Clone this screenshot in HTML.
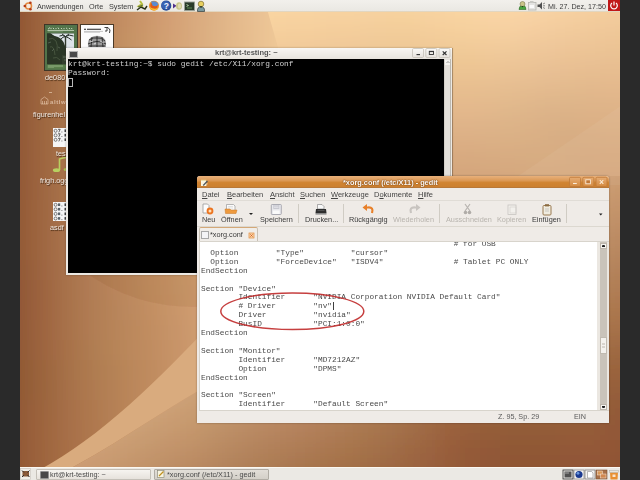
<!DOCTYPE html>
<html><head><meta charset="utf-8">
<style>
html,body{margin:0;padding:0}
body{width:640px;height:480px;position:relative;overflow:hidden;background:#2a2a2a;font-family:"Liberation Sans",sans-serif}
.a{position:absolute}
.t{position:absolute;white-space:pre;line-height:10px;will-change:transform}
.ui{font-size:7.3px;color:#3c3c3c}
.mono{font-family:"Liberation Mono",monospace}
.dl{font-size:7.3px;color:#f2ebe4;text-shadow:0.6px 0.6px 0.8px rgba(40,20,0,.8)}
</style></head><body><div id="wrap" style="position:absolute;left:0;top:0;width:640px;height:480px;filter:blur(0.25px)">
<svg width="640" height="480" style="position:absolute;left:0;top:0"><defs><filter id="wb" x="-5%" y="-5%" width="110%" height="110%"><feGaussianBlur stdDeviation="9"/></filter><filter id="sb"><feGaussianBlur stdDeviation="0.6"/></filter><clipPath id="cL2"><path d="M261.6 -10 L277.9 47 L300 200 L620 176 L660 176 L660 -10 Z"/></clipPath><clipPath id="cR"><path d="M56 476 C108.4 449.7,155.9 414.9,205 387 L609 176 L660 176 L660 500 L0 500 L0 476 Z"/></clipPath></defs><g filter="url(#wb)"><rect x="-20" y="-40" width="20" height="20" fill="#834325"/><rect x="0" y="-40" width="20" height="20" fill="#8d4e2f"/><rect x="20" y="-40" width="20" height="20" fill="#975939"/><rect x="40" y="-40" width="20" height="20" fill="#a16443"/><rect x="60" y="-40" width="20" height="20" fill="#ab6f4c"/><rect x="80" y="-40" width="20" height="20" fill="#b47955"/><rect x="100" y="-40" width="20" height="20" fill="#bc825d"/><rect x="120" y="-40" width="20" height="20" fill="#c48b65"/><rect x="140" y="-40" width="20" height="20" fill="#cb936d"/><rect x="160" y="-40" width="20" height="20" fill="#d19c75"/><rect x="180" y="-40" width="20" height="20" fill="#d7a57d"/><rect x="200" y="-40" width="20" height="20" fill="#ddad85"/><rect x="220" y="-40" width="20" height="20" fill="#e2b58c"/><rect x="240" y="-40" width="20" height="20" fill="#e8bd92"/><rect x="260" y="-40" width="20" height="20" fill="#edc599"/><rect x="280" y="-40" width="20" height="20" fill="#f3cc9f"/><rect x="300" y="-40" width="20" height="20" fill="#f9d4a5"/><rect x="320" y="-40" width="20" height="20" fill="#fedbac"/><rect x="340" y="-40" width="20" height="20" fill="#ffe3b2"/><rect x="360" y="-40" width="20" height="20" fill="#ffeab9"/><rect x="380" y="-40" width="20" height="20" fill="#fff2c0"/><rect x="400" y="-40" width="20" height="20" fill="#fff9c6"/><rect x="420" y="-40" width="20" height="20" fill="#ffffcd"/><rect x="440" y="-40" width="20" height="20" fill="#ffffd4"/><rect x="460" y="-40" width="20" height="20" fill="#ffffdb"/><rect x="480" y="-40" width="20" height="20" fill="#ffffe2"/><rect x="500" y="-40" width="20" height="20" fill="#ffffe9"/><rect x="520" y="-40" width="20" height="20" fill="#fffff0"/><rect x="540" y="-40" width="20" height="20" fill="#fffff7"/><rect x="560" y="-40" width="20" height="20" fill="#fffffe"/><rect x="580" y="-40" width="20" height="20" fill="#ffffff"/><rect x="600" y="-40" width="20" height="20" fill="#ffffff"/><rect x="620" y="-40" width="20" height="20" fill="#ffffff"/><rect x="640" y="-40" width="20" height="20" fill="#ffffff"/><rect x="-20" y="-20" width="20" height="20" fill="#834325"/><rect x="0" y="-20" width="20" height="20" fill="#8d4f2f"/><rect x="20" y="-20" width="20" height="20" fill="#975a39"/><rect x="40" y="-20" width="20" height="20" fill="#a26643"/><rect x="60" y="-20" width="20" height="20" fill="#ac724d"/><rect x="80" y="-20" width="20" height="20" fill="#b57b56"/><rect x="100" y="-20" width="20" height="20" fill="#bd845e"/><rect x="120" y="-20" width="20" height="20" fill="#c58d65"/><rect x="140" y="-20" width="20" height="20" fill="#cc956d"/><rect x="160" y="-20" width="20" height="20" fill="#d29d75"/><rect x="180" y="-20" width="20" height="20" fill="#d8a67d"/><rect x="200" y="-20" width="20" height="20" fill="#ddae85"/><rect x="220" y="-20" width="20" height="20" fill="#e2b68b"/><rect x="240" y="-20" width="20" height="20" fill="#e7be92"/><rect x="260" y="-20" width="20" height="20" fill="#edc598"/><rect x="280" y="-20" width="20" height="20" fill="#f2cc9e"/><rect x="300" y="-20" width="20" height="20" fill="#f8d4a4"/><rect x="320" y="-20" width="20" height="20" fill="#fedbab"/><rect x="340" y="-20" width="20" height="20" fill="#ffe3b1"/><rect x="360" y="-20" width="20" height="20" fill="#ffeab8"/><rect x="380" y="-20" width="20" height="20" fill="#fff2bf"/><rect x="400" y="-20" width="20" height="20" fill="#fff9c5"/><rect x="420" y="-20" width="20" height="20" fill="#ffffcc"/><rect x="440" y="-20" width="20" height="20" fill="#ffffd3"/><rect x="460" y="-20" width="20" height="20" fill="#ffffda"/><rect x="480" y="-20" width="20" height="20" fill="#ffffe1"/><rect x="500" y="-20" width="20" height="20" fill="#ffffe8"/><rect x="520" y="-20" width="20" height="20" fill="#ffffef"/><rect x="540" y="-20" width="20" height="20" fill="#fffff6"/><rect x="560" y="-20" width="20" height="20" fill="#fffffd"/><rect x="580" y="-20" width="20" height="20" fill="#ffffff"/><rect x="600" y="-20" width="20" height="20" fill="#ffffff"/><rect x="620" y="-20" width="20" height="20" fill="#ffffff"/><rect x="640" y="-20" width="20" height="20" fill="#ffffff"/><rect x="-20" y="0" width="20" height="20" fill="#834425"/><rect x="0" y="0" width="20" height="20" fill="#8c502e"/><rect x="20" y="0" width="20" height="20" fill="#975c39"/><rect x="40" y="0" width="20" height="20" fill="#a26944"/><rect x="60" y="0" width="20" height="20" fill="#ac744e"/><rect x="80" y="0" width="20" height="20" fill="#b57e56"/><rect x="100" y="0" width="20" height="20" fill="#bd865e"/><rect x="120" y="0" width="20" height="20" fill="#c58f65"/><rect x="140" y="0" width="20" height="20" fill="#cd976d"/><rect x="160" y="0" width="20" height="20" fill="#d39f74"/><rect x="180" y="0" width="20" height="20" fill="#d8a77c"/><rect x="200" y="0" width="20" height="20" fill="#ddaf84"/><rect x="220" y="0" width="20" height="20" fill="#e2b78b"/><rect x="240" y="0" width="20" height="20" fill="#e7be91"/><rect x="260" y="0" width="20" height="20" fill="#ecc597"/><rect x="280" y="0" width="20" height="20" fill="#f2cc9d"/><rect x="300" y="0" width="20" height="20" fill="#f8d4a3"/><rect x="320" y="0" width="20" height="20" fill="#fedbaa"/><rect x="340" y="0" width="20" height="20" fill="#ffe3b0"/><rect x="360" y="0" width="20" height="20" fill="#ffeab7"/><rect x="380" y="0" width="20" height="20" fill="#fff2be"/><rect x="400" y="0" width="20" height="20" fill="#fff9c4"/><rect x="420" y="0" width="20" height="20" fill="#ffffcb"/><rect x="440" y="0" width="20" height="20" fill="#ffffd2"/><rect x="460" y="0" width="20" height="20" fill="#ffffd9"/><rect x="480" y="0" width="20" height="20" fill="#ffffe0"/><rect x="500" y="0" width="20" height="20" fill="#ffffe7"/><rect x="520" y="0" width="20" height="20" fill="#ffffee"/><rect x="540" y="0" width="20" height="20" fill="#fffff5"/><rect x="560" y="0" width="20" height="20" fill="#fffffc"/><rect x="580" y="0" width="20" height="20" fill="#ffffff"/><rect x="600" y="0" width="20" height="20" fill="#ffffff"/><rect x="620" y="0" width="20" height="20" fill="#ffffff"/><rect x="640" y="0" width="20" height="20" fill="#ffffff"/><rect x="-20" y="20" width="20" height="20" fill="#834525"/><rect x="0" y="20" width="20" height="20" fill="#8c512f"/><rect x="20" y="20" width="20" height="20" fill="#975d39"/><rect x="40" y="20" width="20" height="20" fill="#a26a44"/><rect x="60" y="20" width="20" height="20" fill="#ac764e"/><rect x="80" y="20" width="20" height="20" fill="#b58056"/><rect x="100" y="20" width="20" height="20" fill="#be895e"/><rect x="120" y="20" width="20" height="20" fill="#c69265"/><rect x="140" y="20" width="20" height="20" fill="#cd996c"/><rect x="160" y="20" width="20" height="20" fill="#d3a074"/><rect x="180" y="20" width="20" height="20" fill="#d8a87c"/><rect x="200" y="20" width="20" height="20" fill="#ddb083"/><rect x="220" y="20" width="20" height="20" fill="#e2b78a"/><rect x="240" y="20" width="20" height="20" fill="#e7be8f"/><rect x="260" y="20" width="20" height="20" fill="#ecc595"/><rect x="280" y="20" width="20" height="20" fill="#f2cc9b"/><rect x="300" y="20" width="20" height="20" fill="#f7d4a2"/><rect x="320" y="20" width="20" height="20" fill="#fddba9"/><rect x="340" y="20" width="20" height="20" fill="#ffe2af"/><rect x="360" y="20" width="20" height="20" fill="#ffeab6"/><rect x="380" y="20" width="20" height="20" fill="#fff1bd"/><rect x="400" y="20" width="20" height="20" fill="#fff9c4"/><rect x="420" y="20" width="20" height="20" fill="#ffffca"/><rect x="440" y="20" width="20" height="20" fill="#ffffd1"/><rect x="460" y="20" width="20" height="20" fill="#ffffd8"/><rect x="480" y="20" width="20" height="20" fill="#ffffdf"/><rect x="500" y="20" width="20" height="20" fill="#ffffe6"/><rect x="520" y="20" width="20" height="20" fill="#ffffed"/><rect x="540" y="20" width="20" height="20" fill="#fffff4"/><rect x="560" y="20" width="20" height="20" fill="#fffffb"/><rect x="580" y="20" width="20" height="20" fill="#ffffff"/><rect x="600" y="20" width="20" height="20" fill="#ffffff"/><rect x="620" y="20" width="20" height="20" fill="#ffffff"/><rect x="640" y="20" width="20" height="20" fill="#ffffff"/><rect x="-20" y="40" width="20" height="20" fill="#834726"/><rect x="0" y="40" width="20" height="20" fill="#8c5230"/><rect x="20" y="40" width="20" height="20" fill="#975f3a"/><rect x="40" y="40" width="20" height="20" fill="#a16b44"/><rect x="60" y="40" width="20" height="20" fill="#ac774e"/><rect x="80" y="40" width="20" height="20" fill="#b58156"/><rect x="100" y="40" width="20" height="20" fill="#bd8b5e"/><rect x="120" y="40" width="20" height="20" fill="#c59465"/><rect x="140" y="40" width="20" height="20" fill="#cc9b6c"/><rect x="160" y="40" width="20" height="20" fill="#d3a273"/><rect x="180" y="40" width="20" height="20" fill="#d8a97b"/><rect x="200" y="40" width="20" height="20" fill="#ddb082"/><rect x="220" y="40" width="20" height="20" fill="#e2b788"/><rect x="240" y="40" width="20" height="20" fill="#e6be8e"/><rect x="260" y="40" width="20" height="20" fill="#ecc594"/><rect x="280" y="40" width="20" height="20" fill="#f1cc9a"/><rect x="300" y="40" width="20" height="20" fill="#f7d3a1"/><rect x="320" y="40" width="20" height="20" fill="#fddba7"/><rect x="340" y="40" width="20" height="20" fill="#ffe2ae"/><rect x="360" y="40" width="20" height="20" fill="#ffeab5"/><rect x="380" y="40" width="20" height="20" fill="#fff1bc"/><rect x="400" y="40" width="20" height="20" fill="#fff9c3"/><rect x="420" y="40" width="20" height="20" fill="#ffffc9"/><rect x="440" y="40" width="20" height="20" fill="#ffffd0"/><rect x="460" y="40" width="20" height="20" fill="#ffffd7"/><rect x="480" y="40" width="20" height="20" fill="#ffffde"/><rect x="500" y="40" width="20" height="20" fill="#ffffe5"/><rect x="520" y="40" width="20" height="20" fill="#ffffec"/><rect x="540" y="40" width="20" height="20" fill="#fffff3"/><rect x="560" y="40" width="20" height="20" fill="#fffffb"/><rect x="580" y="40" width="20" height="20" fill="#ffffff"/><rect x="600" y="40" width="20" height="20" fill="#ffffff"/><rect x="620" y="40" width="20" height="20" fill="#ffffff"/><rect x="640" y="40" width="20" height="20" fill="#ffffff"/><rect x="-20" y="60" width="20" height="20" fill="#834727"/><rect x="0" y="60" width="20" height="20" fill="#8d5330"/><rect x="20" y="60" width="20" height="20" fill="#975f3a"/><rect x="40" y="60" width="20" height="20" fill="#a16b44"/><rect x="60" y="60" width="20" height="20" fill="#ab774d"/><rect x="80" y="60" width="20" height="20" fill="#b48256"/><rect x="100" y="60" width="20" height="20" fill="#bd8c5e"/><rect x="120" y="60" width="20" height="20" fill="#c59465"/><rect x="140" y="60" width="20" height="20" fill="#cc9c6c"/><rect x="160" y="60" width="20" height="20" fill="#d2a373"/><rect x="180" y="60" width="20" height="20" fill="#d8aa7a"/><rect x="200" y="60" width="20" height="20" fill="#ddb080"/><rect x="220" y="60" width="20" height="20" fill="#e1b787"/><rect x="240" y="60" width="20" height="20" fill="#e6be8d"/><rect x="260" y="60" width="20" height="20" fill="#ecc593"/><rect x="280" y="60" width="20" height="20" fill="#f1cc99"/><rect x="300" y="60" width="20" height="20" fill="#f7d3a0"/><rect x="320" y="60" width="20" height="20" fill="#fddaa6"/><rect x="340" y="60" width="20" height="20" fill="#ffe2ad"/><rect x="360" y="60" width="20" height="20" fill="#ffe9b4"/><rect x="380" y="60" width="20" height="20" fill="#fff1bb"/><rect x="400" y="60" width="20" height="20" fill="#fff8c2"/><rect x="420" y="60" width="20" height="20" fill="#ffffc9"/><rect x="440" y="60" width="20" height="20" fill="#ffffcf"/><rect x="460" y="60" width="20" height="20" fill="#ffffd6"/><rect x="480" y="60" width="20" height="20" fill="#ffffdd"/><rect x="500" y="60" width="20" height="20" fill="#ffffe4"/><rect x="520" y="60" width="20" height="20" fill="#ffffec"/><rect x="540" y="60" width="20" height="20" fill="#fffff3"/><rect x="560" y="60" width="20" height="20" fill="#fffffa"/><rect x="580" y="60" width="20" height="20" fill="#ffffff"/><rect x="600" y="60" width="20" height="20" fill="#ffffff"/><rect x="620" y="60" width="20" height="20" fill="#ffffff"/><rect x="640" y="60" width="20" height="20" fill="#ffffff"/><rect x="-20" y="80" width="20" height="20" fill="#834827"/><rect x="0" y="80" width="20" height="20" fill="#8d5330"/><rect x="20" y="80" width="20" height="20" fill="#975f3a"/><rect x="40" y="80" width="20" height="20" fill="#a16b43"/><rect x="60" y="80" width="20" height="20" fill="#aa764d"/><rect x="80" y="80" width="20" height="20" fill="#b38155"/><rect x="100" y="80" width="20" height="20" fill="#bc8b5d"/><rect x="120" y="80" width="20" height="20" fill="#c49465"/><rect x="140" y="80" width="20" height="20" fill="#cb9c6c"/><rect x="160" y="80" width="20" height="20" fill="#d1a372"/><rect x="180" y="80" width="20" height="20" fill="#d7aa79"/><rect x="200" y="80" width="20" height="20" fill="#dcb07f"/><rect x="220" y="80" width="20" height="20" fill="#e1b786"/><rect x="240" y="80" width="20" height="20" fill="#e6be8c"/><rect x="260" y="80" width="20" height="20" fill="#ecc592"/><rect x="280" y="80" width="20" height="20" fill="#f1cc98"/><rect x="300" y="80" width="20" height="20" fill="#f7d39f"/><rect x="320" y="80" width="20" height="20" fill="#fddaa5"/><rect x="340" y="80" width="20" height="20" fill="#ffe1ac"/><rect x="360" y="80" width="20" height="20" fill="#ffe9b3"/><rect x="380" y="80" width="20" height="20" fill="#fff0ba"/><rect x="400" y="80" width="20" height="20" fill="#fff8c1"/><rect x="420" y="80" width="20" height="20" fill="#ffffc8"/><rect x="440" y="80" width="20" height="20" fill="#ffffcf"/><rect x="460" y="80" width="20" height="20" fill="#ffffd6"/><rect x="480" y="80" width="20" height="20" fill="#ffffdd"/><rect x="500" y="80" width="20" height="20" fill="#ffffe4"/><rect x="520" y="80" width="20" height="20" fill="#ffffeb"/><rect x="540" y="80" width="20" height="20" fill="#fffff2"/><rect x="560" y="80" width="20" height="20" fill="#fffff9"/><rect x="580" y="80" width="20" height="20" fill="#ffffff"/><rect x="600" y="80" width="20" height="20" fill="#ffffff"/><rect x="620" y="80" width="20" height="20" fill="#ffffff"/><rect x="640" y="80" width="20" height="20" fill="#ffffff"/><rect x="-20" y="100" width="20" height="20" fill="#844827"/><rect x="0" y="100" width="20" height="20" fill="#8d5331"/><rect x="20" y="100" width="20" height="20" fill="#975f3a"/><rect x="40" y="100" width="20" height="20" fill="#a06a43"/><rect x="60" y="100" width="20" height="20" fill="#aa754c"/><rect x="80" y="100" width="20" height="20" fill="#b38055"/><rect x="100" y="100" width="20" height="20" fill="#bb8a5d"/><rect x="120" y="100" width="20" height="20" fill="#c39364"/><rect x="140" y="100" width="20" height="20" fill="#ca9b6b"/><rect x="160" y="100" width="20" height="20" fill="#d0a272"/><rect x="180" y="100" width="20" height="20" fill="#d6a978"/><rect x="200" y="100" width="20" height="20" fill="#dcb07f"/><rect x="220" y="100" width="20" height="20" fill="#e1b785"/><rect x="240" y="100" width="20" height="20" fill="#e6be8b"/><rect x="260" y="100" width="20" height="20" fill="#ebc491"/><rect x="280" y="100" width="20" height="20" fill="#f1cb98"/><rect x="300" y="100" width="20" height="20" fill="#f7d29e"/><rect x="320" y="100" width="20" height="20" fill="#fdd9a5"/><rect x="340" y="100" width="20" height="20" fill="#ffe1ab"/><rect x="360" y="100" width="20" height="20" fill="#ffe8b2"/><rect x="380" y="100" width="20" height="20" fill="#fff0b9"/><rect x="400" y="100" width="20" height="20" fill="#fff7c0"/><rect x="420" y="100" width="20" height="20" fill="#ffffc7"/><rect x="440" y="100" width="20" height="20" fill="#ffffce"/><rect x="460" y="100" width="20" height="20" fill="#ffffd5"/><rect x="480" y="100" width="20" height="20" fill="#ffffdc"/><rect x="500" y="100" width="20" height="20" fill="#ffffe3"/><rect x="520" y="100" width="20" height="20" fill="#ffffea"/><rect x="540" y="100" width="20" height="20" fill="#fffff1"/><rect x="560" y="100" width="20" height="20" fill="#fffff8"/><rect x="580" y="100" width="20" height="20" fill="#ffffff"/><rect x="600" y="100" width="20" height="20" fill="#ffffff"/><rect x="620" y="100" width="20" height="20" fill="#ffffff"/><rect x="640" y="100" width="20" height="20" fill="#ffffff"/><rect x="-20" y="120" width="20" height="20" fill="#844828"/><rect x="0" y="120" width="20" height="20" fill="#8d5331"/><rect x="20" y="120" width="20" height="20" fill="#975e3a"/><rect x="40" y="120" width="20" height="20" fill="#a06a43"/><rect x="60" y="120" width="20" height="20" fill="#a9754c"/><rect x="80" y="120" width="20" height="20" fill="#b27f54"/><rect x="100" y="120" width="20" height="20" fill="#ba895c"/><rect x="120" y="120" width="20" height="20" fill="#c29263"/><rect x="140" y="120" width="20" height="20" fill="#c99a6a"/><rect x="160" y="120" width="20" height="20" fill="#cfa171"/><rect x="180" y="120" width="20" height="20" fill="#d5a878"/><rect x="200" y="120" width="20" height="20" fill="#dbaf7e"/><rect x="220" y="120" width="20" height="20" fill="#e0b684"/><rect x="240" y="120" width="20" height="20" fill="#e6bd8a"/><rect x="260" y="120" width="20" height="20" fill="#ebc490"/><rect x="280" y="120" width="20" height="20" fill="#f1cb97"/><rect x="300" y="120" width="20" height="20" fill="#f6d29d"/><rect x="320" y="120" width="20" height="20" fill="#fcd9a4"/><rect x="340" y="120" width="20" height="20" fill="#ffe0aa"/><rect x="360" y="120" width="20" height="20" fill="#ffe7b1"/><rect x="380" y="120" width="20" height="20" fill="#ffefb8"/><rect x="400" y="120" width="20" height="20" fill="#fff6bf"/><rect x="420" y="120" width="20" height="20" fill="#fffec6"/><rect x="440" y="120" width="20" height="20" fill="#ffffcd"/><rect x="460" y="120" width="20" height="20" fill="#ffffd4"/><rect x="480" y="120" width="20" height="20" fill="#ffffdb"/><rect x="500" y="120" width="20" height="20" fill="#ffffe2"/><rect x="520" y="120" width="20" height="20" fill="#ffffe9"/><rect x="540" y="120" width="20" height="20" fill="#fffff0"/><rect x="560" y="120" width="20" height="20" fill="#fffff7"/><rect x="580" y="120" width="20" height="20" fill="#ffffff"/><rect x="600" y="120" width="20" height="20" fill="#ffffff"/><rect x="620" y="120" width="20" height="20" fill="#ffffff"/><rect x="640" y="120" width="20" height="20" fill="#ffffff"/><rect x="-20" y="140" width="20" height="20" fill="#854828"/><rect x="0" y="140" width="20" height="20" fill="#8e5331"/><rect x="20" y="140" width="20" height="20" fill="#975e3a"/><rect x="40" y="140" width="20" height="20" fill="#a06943"/><rect x="60" y="140" width="20" height="20" fill="#a9744c"/><rect x="80" y="140" width="20" height="20" fill="#b27e54"/><rect x="100" y="140" width="20" height="20" fill="#ba885c"/><rect x="120" y="140" width="20" height="20" fill="#c19163"/><rect x="140" y="140" width="20" height="20" fill="#c8996a"/><rect x="160" y="140" width="20" height="20" fill="#cfa070"/><rect x="180" y="140" width="20" height="20" fill="#d5a777"/><rect x="200" y="140" width="20" height="20" fill="#daae7d"/><rect x="220" y="140" width="20" height="20" fill="#e0b583"/><rect x="240" y="140" width="20" height="20" fill="#e5bc89"/><rect x="260" y="140" width="20" height="20" fill="#ebc390"/><rect x="280" y="140" width="20" height="20" fill="#f0ca96"/><rect x="300" y="140" width="20" height="20" fill="#f6d19c"/><rect x="320" y="140" width="20" height="20" fill="#fcd8a3"/><rect x="340" y="140" width="20" height="20" fill="#ffdfaa"/><rect x="360" y="140" width="20" height="20" fill="#ffe7b0"/><rect x="380" y="140" width="20" height="20" fill="#ffeeb7"/><rect x="400" y="140" width="20" height="20" fill="#fff6be"/><rect x="420" y="140" width="20" height="20" fill="#fffdc5"/><rect x="440" y="140" width="20" height="20" fill="#ffffcc"/><rect x="460" y="140" width="20" height="20" fill="#ffffd3"/><rect x="480" y="140" width="20" height="20" fill="#ffffda"/><rect x="500" y="140" width="20" height="20" fill="#ffffe1"/><rect x="520" y="140" width="20" height="20" fill="#ffffe8"/><rect x="540" y="140" width="20" height="20" fill="#ffffef"/><rect x="560" y="140" width="20" height="20" fill="#fffff7"/><rect x="580" y="140" width="20" height="20" fill="#fffffe"/><rect x="600" y="140" width="20" height="20" fill="#ffffff"/><rect x="620" y="140" width="20" height="20" fill="#ffffff"/><rect x="640" y="140" width="20" height="20" fill="#ffffff"/><rect x="-20" y="160" width="20" height="20" fill="#854928"/><rect x="0" y="160" width="20" height="20" fill="#8e5431"/><rect x="20" y="160" width="20" height="20" fill="#985f3a"/><rect x="40" y="160" width="20" height="20" fill="#a16943"/><rect x="60" y="160" width="20" height="20" fill="#aa744c"/><rect x="80" y="160" width="20" height="20" fill="#b27e54"/><rect x="100" y="160" width="20" height="20" fill="#ba875c"/><rect x="120" y="160" width="20" height="20" fill="#c19063"/><rect x="140" y="160" width="20" height="20" fill="#c79869"/><rect x="160" y="160" width="20" height="20" fill="#ce9f70"/><rect x="180" y="160" width="20" height="20" fill="#d4a676"/><rect x="200" y="160" width="20" height="20" fill="#d9ad7c"/><rect x="220" y="160" width="20" height="20" fill="#dfb482"/><rect x="240" y="160" width="20" height="20" fill="#e5bb89"/><rect x="260" y="160" width="20" height="20" fill="#eac28f"/><rect x="280" y="160" width="20" height="20" fill="#f0c995"/><rect x="300" y="160" width="20" height="20" fill="#f6d09c"/><rect x="320" y="160" width="20" height="20" fill="#fcd7a2"/><rect x="340" y="160" width="20" height="20" fill="#ffdea9"/><rect x="360" y="160" width="20" height="20" fill="#ffe6b0"/><rect x="380" y="160" width="20" height="20" fill="#ffedb6"/><rect x="400" y="160" width="20" height="20" fill="#fff5bd"/><rect x="420" y="160" width="20" height="20" fill="#fffdc4"/><rect x="440" y="160" width="20" height="20" fill="#ffffcb"/><rect x="460" y="160" width="20" height="20" fill="#ffffd2"/><rect x="480" y="160" width="20" height="20" fill="#ffffd9"/><rect x="500" y="160" width="20" height="20" fill="#ffffe0"/><rect x="520" y="160" width="20" height="20" fill="#ffffe7"/><rect x="540" y="160" width="20" height="20" fill="#ffffef"/><rect x="560" y="160" width="20" height="20" fill="#fffff6"/><rect x="580" y="160" width="20" height="20" fill="#fffffd"/><rect x="600" y="160" width="20" height="20" fill="#ffffff"/><rect x="620" y="160" width="20" height="20" fill="#ffffff"/><rect x="640" y="160" width="20" height="20" fill="#ffffff"/><rect x="-20" y="180" width="20" height="20" fill="#864a28"/><rect x="0" y="180" width="20" height="20" fill="#8f5432"/><rect x="20" y="180" width="20" height="20" fill="#985f3b"/><rect x="40" y="180" width="20" height="20" fill="#a16a44"/><rect x="60" y="180" width="20" height="20" fill="#aa744c"/><rect x="80" y="180" width="20" height="20" fill="#b27e54"/><rect x="100" y="180" width="20" height="20" fill="#b9875b"/><rect x="120" y="180" width="20" height="20" fill="#c08f62"/><rect x="140" y="180" width="20" height="20" fill="#c79669"/><rect x="160" y="180" width="20" height="20" fill="#cd9e6f"/><rect x="180" y="180" width="20" height="20" fill="#d3a575"/><rect x="200" y="180" width="20" height="20" fill="#d9ac7b"/><rect x="220" y="180" width="20" height="20" fill="#deb382"/><rect x="240" y="180" width="20" height="20" fill="#e4b988"/><rect x="260" y="180" width="20" height="20" fill="#eac08e"/><rect x="280" y="180" width="20" height="20" fill="#efc894"/><rect x="300" y="180" width="20" height="20" fill="#f5cf9b"/><rect x="320" y="180" width="20" height="20" fill="#fbd6a1"/><rect x="340" y="180" width="20" height="20" fill="#ffdda8"/><rect x="360" y="180" width="20" height="20" fill="#ffe5af"/><rect x="380" y="180" width="20" height="20" fill="#ffecb6"/><rect x="400" y="180" width="20" height="20" fill="#fff4bc"/><rect x="420" y="180" width="20" height="20" fill="#fffcc3"/><rect x="440" y="180" width="20" height="20" fill="#ffffca"/><rect x="460" y="180" width="20" height="20" fill="#ffffd1"/><rect x="480" y="180" width="20" height="20" fill="#ffffd8"/><rect x="500" y="180" width="20" height="20" fill="#ffffe0"/><rect x="520" y="180" width="20" height="20" fill="#ffffe7"/><rect x="540" y="180" width="20" height="20" fill="#ffffee"/><rect x="560" y="180" width="20" height="20" fill="#fffff5"/><rect x="580" y="180" width="20" height="20" fill="#fffffc"/><rect x="600" y="180" width="20" height="20" fill="#ffffff"/><rect x="620" y="180" width="20" height="20" fill="#ffffff"/><rect x="640" y="180" width="20" height="20" fill="#ffffff"/><rect x="-20" y="200" width="20" height="20" fill="#864a29"/><rect x="0" y="200" width="20" height="20" fill="#8f5532"/><rect x="20" y="200" width="20" height="20" fill="#99603b"/><rect x="40" y="200" width="20" height="20" fill="#a26a44"/><rect x="60" y="200" width="20" height="20" fill="#aa744c"/><rect x="80" y="200" width="20" height="20" fill="#b27d54"/><rect x="100" y="200" width="20" height="20" fill="#b9865b"/><rect x="120" y="200" width="20" height="20" fill="#c08e62"/><rect x="140" y="200" width="20" height="20" fill="#c69568"/><rect x="160" y="200" width="20" height="20" fill="#cc9c6e"/><rect x="180" y="200" width="20" height="20" fill="#d2a374"/><rect x="200" y="200" width="20" height="20" fill="#d8aa7a"/><rect x="220" y="200" width="20" height="20" fill="#deb181"/><rect x="240" y="200" width="20" height="20" fill="#e3b887"/><rect x="260" y="200" width="20" height="20" fill="#e9bf8d"/><rect x="280" y="200" width="20" height="20" fill="#efc693"/><rect x="300" y="200" width="20" height="20" fill="#f5cd9a"/><rect x="320" y="200" width="20" height="20" fill="#fbd5a0"/><rect x="340" y="200" width="20" height="20" fill="#ffdca7"/><rect x="360" y="200" width="20" height="20" fill="#ffe4ae"/><rect x="380" y="200" width="20" height="20" fill="#ffebb5"/><rect x="400" y="200" width="20" height="20" fill="#fff3bc"/><rect x="420" y="200" width="20" height="20" fill="#fffbc3"/><rect x="440" y="200" width="20" height="20" fill="#ffffca"/><rect x="460" y="200" width="20" height="20" fill="#ffffd1"/><rect x="480" y="200" width="20" height="20" fill="#ffffd8"/><rect x="500" y="200" width="20" height="20" fill="#ffffdf"/><rect x="520" y="200" width="20" height="20" fill="#ffffe6"/><rect x="540" y="200" width="20" height="20" fill="#ffffed"/><rect x="560" y="200" width="20" height="20" fill="#fffff4"/><rect x="580" y="200" width="20" height="20" fill="#fffffc"/><rect x="600" y="200" width="20" height="20" fill="#ffffff"/><rect x="620" y="200" width="20" height="20" fill="#ffffff"/><rect x="640" y="200" width="20" height="20" fill="#ffffff"/><rect x="-20" y="220" width="20" height="20" fill="#864a29"/><rect x="0" y="220" width="20" height="20" fill="#8f5532"/><rect x="20" y="220" width="20" height="20" fill="#99603b"/><rect x="40" y="220" width="20" height="20" fill="#a26b44"/><rect x="60" y="220" width="20" height="20" fill="#aa744d"/><rect x="80" y="220" width="20" height="20" fill="#b27d54"/><rect x="100" y="220" width="20" height="20" fill="#b9855b"/><rect x="120" y="220" width="20" height="20" fill="#bf8d62"/><rect x="140" y="220" width="20" height="20" fill="#c59468"/><rect x="160" y="220" width="20" height="20" fill="#cb9b6e"/><rect x="180" y="220" width="20" height="20" fill="#d1a273"/><rect x="200" y="220" width="20" height="20" fill="#d7a879"/><rect x="220" y="220" width="20" height="20" fill="#ddaf80"/><rect x="240" y="220" width="20" height="20" fill="#e2b686"/><rect x="260" y="220" width="20" height="20" fill="#e8be8c"/><rect x="280" y="220" width="20" height="20" fill="#eec592"/><rect x="300" y="220" width="20" height="20" fill="#f4cc99"/><rect x="320" y="220" width="20" height="20" fill="#fad4a0"/><rect x="340" y="220" width="20" height="20" fill="#ffdba6"/><rect x="360" y="220" width="20" height="20" fill="#ffe3ad"/><rect x="380" y="220" width="20" height="20" fill="#ffeab4"/><rect x="400" y="220" width="20" height="20" fill="#fff2bb"/><rect x="420" y="220" width="20" height="20" fill="#fffac2"/><rect x="440" y="220" width="20" height="20" fill="#ffffc9"/><rect x="460" y="220" width="20" height="20" fill="#ffffd0"/><rect x="480" y="220" width="20" height="20" fill="#ffffd7"/><rect x="500" y="220" width="20" height="20" fill="#ffffde"/><rect x="520" y="220" width="20" height="20" fill="#ffffe5"/><rect x="540" y="220" width="20" height="20" fill="#ffffed"/><rect x="560" y="220" width="20" height="20" fill="#fffff4"/><rect x="580" y="220" width="20" height="20" fill="#fffffb"/><rect x="600" y="220" width="20" height="20" fill="#ffffff"/><rect x="620" y="220" width="20" height="20" fill="#ffffff"/><rect x="640" y="220" width="20" height="20" fill="#ffffff"/><rect x="-20" y="240" width="20" height="20" fill="#854a28"/><rect x="0" y="240" width="20" height="20" fill="#8f5531"/><rect x="20" y="240" width="20" height="20" fill="#99603b"/><rect x="40" y="240" width="20" height="20" fill="#a26b44"/><rect x="60" y="240" width="20" height="20" fill="#aa744d"/><rect x="80" y="240" width="20" height="20" fill="#b17d54"/><rect x="100" y="240" width="20" height="20" fill="#b8855b"/><rect x="120" y="240" width="20" height="20" fill="#be8c61"/><rect x="140" y="240" width="20" height="20" fill="#c59367"/><rect x="160" y="240" width="20" height="20" fill="#ca996c"/><rect x="180" y="240" width="20" height="20" fill="#d0a072"/><rect x="200" y="240" width="20" height="20" fill="#d6a778"/><rect x="220" y="240" width="20" height="20" fill="#dcae7e"/><rect x="240" y="240" width="20" height="20" fill="#e2b585"/><rect x="260" y="240" width="20" height="20" fill="#e8bc8b"/><rect x="280" y="240" width="20" height="20" fill="#eec391"/><rect x="300" y="240" width="20" height="20" fill="#f4cb98"/><rect x="320" y="240" width="20" height="20" fill="#fad29f"/><rect x="340" y="240" width="20" height="20" fill="#ffdaa5"/><rect x="360" y="240" width="20" height="20" fill="#ffe2ac"/><rect x="380" y="240" width="20" height="20" fill="#ffe9b3"/><rect x="400" y="240" width="20" height="20" fill="#fff1ba"/><rect x="420" y="240" width="20" height="20" fill="#fff9c1"/><rect x="440" y="240" width="20" height="20" fill="#ffffc8"/><rect x="460" y="240" width="20" height="20" fill="#ffffcf"/><rect x="480" y="240" width="20" height="20" fill="#ffffd6"/><rect x="500" y="240" width="20" height="20" fill="#ffffdd"/><rect x="520" y="240" width="20" height="20" fill="#ffffe5"/><rect x="540" y="240" width="20" height="20" fill="#ffffec"/><rect x="560" y="240" width="20" height="20" fill="#fffff3"/><rect x="580" y="240" width="20" height="20" fill="#fffffa"/><rect x="600" y="240" width="20" height="20" fill="#ffffff"/><rect x="620" y="240" width="20" height="20" fill="#ffffff"/><rect x="640" y="240" width="20" height="20" fill="#ffffff"/><rect x="-20" y="260" width="20" height="20" fill="#854928"/><rect x="0" y="260" width="20" height="20" fill="#8e5431"/><rect x="20" y="260" width="20" height="20" fill="#975e3a"/><rect x="40" y="260" width="20" height="20" fill="#a16944"/><rect x="60" y="260" width="20" height="20" fill="#a9734d"/><rect x="80" y="260" width="20" height="20" fill="#b17c54"/><rect x="100" y="260" width="20" height="20" fill="#b7845b"/><rect x="120" y="260" width="20" height="20" fill="#be8b60"/><rect x="140" y="260" width="20" height="20" fill="#c49166"/><rect x="160" y="260" width="20" height="20" fill="#c9976b"/><rect x="180" y="260" width="20" height="20" fill="#cf9e71"/><rect x="200" y="260" width="20" height="20" fill="#d5a577"/><rect x="220" y="260" width="20" height="20" fill="#dbac7d"/><rect x="240" y="260" width="20" height="20" fill="#e1b384"/><rect x="260" y="260" width="20" height="20" fill="#e7ba8a"/><rect x="280" y="260" width="20" height="20" fill="#edc291"/><rect x="300" y="260" width="20" height="20" fill="#f3ca97"/><rect x="320" y="260" width="20" height="20" fill="#fad19e"/><rect x="340" y="260" width="20" height="20" fill="#ffd9a5"/><rect x="360" y="260" width="20" height="20" fill="#ffe1ac"/><rect x="380" y="260" width="20" height="20" fill="#ffe9b2"/><rect x="400" y="260" width="20" height="20" fill="#fff0b9"/><rect x="420" y="260" width="20" height="20" fill="#fff8c0"/><rect x="440" y="260" width="20" height="20" fill="#ffffc7"/><rect x="460" y="260" width="20" height="20" fill="#ffffcf"/><rect x="480" y="260" width="20" height="20" fill="#ffffd6"/><rect x="500" y="260" width="20" height="20" fill="#ffffdd"/><rect x="520" y="260" width="20" height="20" fill="#ffffe4"/><rect x="540" y="260" width="20" height="20" fill="#ffffeb"/><rect x="560" y="260" width="20" height="20" fill="#fffff3"/><rect x="580" y="260" width="20" height="20" fill="#fffffa"/><rect x="600" y="260" width="20" height="20" fill="#ffffff"/><rect x="620" y="260" width="20" height="20" fill="#ffffff"/><rect x="640" y="260" width="20" height="20" fill="#ffffff"/><rect x="-20" y="280" width="20" height="20" fill="#844928"/><rect x="0" y="280" width="20" height="20" fill="#8d5330"/><rect x="20" y="280" width="20" height="20" fill="#965d3a"/><rect x="40" y="280" width="20" height="20" fill="#a06843"/><rect x="60" y="280" width="20" height="20" fill="#a9734c"/><rect x="80" y="280" width="20" height="20" fill="#b07c54"/><rect x="100" y="280" width="20" height="20" fill="#b7835a"/><rect x="120" y="280" width="20" height="20" fill="#bd8a5f"/><rect x="140" y="280" width="20" height="20" fill="#c39064"/><rect x="160" y="280" width="20" height="20" fill="#c8966a"/><rect x="180" y="280" width="20" height="20" fill="#ce9c70"/><rect x="200" y="280" width="20" height="20" fill="#d4a376"/><rect x="220" y="280" width="20" height="20" fill="#daaa7c"/><rect x="240" y="280" width="20" height="20" fill="#e0b282"/><rect x="260" y="280" width="20" height="20" fill="#e6b989"/><rect x="280" y="280" width="20" height="20" fill="#ecc190"/><rect x="300" y="280" width="20" height="20" fill="#f3c896"/><rect x="320" y="280" width="20" height="20" fill="#f9d09d"/><rect x="340" y="280" width="20" height="20" fill="#ffd8a4"/><rect x="360" y="280" width="20" height="20" fill="#ffe0ab"/><rect x="380" y="280" width="20" height="20" fill="#ffe8b2"/><rect x="400" y="280" width="20" height="20" fill="#fff0b9"/><rect x="420" y="280" width="20" height="20" fill="#fff8c0"/><rect x="440" y="280" width="20" height="20" fill="#ffffc7"/><rect x="460" y="280" width="20" height="20" fill="#ffffce"/><rect x="480" y="280" width="20" height="20" fill="#ffffd5"/><rect x="500" y="280" width="20" height="20" fill="#ffffdc"/><rect x="520" y="280" width="20" height="20" fill="#ffffe3"/><rect x="540" y="280" width="20" height="20" fill="#ffffeb"/><rect x="560" y="280" width="20" height="20" fill="#fffff2"/><rect x="580" y="280" width="20" height="20" fill="#fffff9"/><rect x="600" y="280" width="20" height="20" fill="#ffffff"/><rect x="620" y="280" width="20" height="20" fill="#ffffff"/><rect x="640" y="280" width="20" height="20" fill="#ffffff"/><rect x="-20" y="300" width="20" height="20" fill="#844928"/><rect x="0" y="300" width="20" height="20" fill="#8d5331"/><rect x="20" y="300" width="20" height="20" fill="#975d3a"/><rect x="40" y="300" width="20" height="20" fill="#a16843"/><rect x="60" y="300" width="20" height="20" fill="#a9734c"/><rect x="80" y="300" width="20" height="20" fill="#b07c53"/><rect x="100" y="300" width="20" height="20" fill="#b68359"/><rect x="120" y="300" width="20" height="20" fill="#bc895e"/><rect x="140" y="300" width="20" height="20" fill="#c28e62"/><rect x="160" y="300" width="20" height="20" fill="#c79468"/><rect x="180" y="300" width="20" height="20" fill="#cd9a6e"/><rect x="200" y="300" width="20" height="20" fill="#d3a175"/><rect x="220" y="300" width="20" height="20" fill="#d9a97b"/><rect x="240" y="300" width="20" height="20" fill="#dfb081"/><rect x="260" y="300" width="20" height="20" fill="#e6b888"/><rect x="280" y="300" width="20" height="20" fill="#ecbf8f"/><rect x="300" y="300" width="20" height="20" fill="#f2c795"/><rect x="320" y="300" width="20" height="20" fill="#f9cf9c"/><rect x="340" y="300" width="20" height="20" fill="#ffd7a3"/><rect x="360" y="300" width="20" height="20" fill="#ffdfaa"/><rect x="380" y="300" width="20" height="20" fill="#ffe7b1"/><rect x="400" y="300" width="20" height="20" fill="#ffefb8"/><rect x="420" y="300" width="20" height="20" fill="#fff7bf"/><rect x="440" y="300" width="20" height="20" fill="#ffffc6"/><rect x="460" y="300" width="20" height="20" fill="#ffffcd"/><rect x="480" y="300" width="20" height="20" fill="#ffffd5"/><rect x="500" y="300" width="20" height="20" fill="#ffffdc"/><rect x="520" y="300" width="20" height="20" fill="#ffffe3"/><rect x="540" y="300" width="20" height="20" fill="#ffffea"/><rect x="560" y="300" width="20" height="20" fill="#fffff1"/><rect x="580" y="300" width="20" height="20" fill="#fffff9"/><rect x="600" y="300" width="20" height="20" fill="#ffffff"/><rect x="620" y="300" width="20" height="20" fill="#ffffff"/><rect x="640" y="300" width="20" height="20" fill="#ffffff"/><rect x="-20" y="320" width="20" height="20" fill="#844928"/><rect x="0" y="320" width="20" height="20" fill="#8d5331"/><rect x="20" y="320" width="20" height="20" fill="#975e3a"/><rect x="40" y="320" width="20" height="20" fill="#a16843"/><rect x="60" y="320" width="20" height="20" fill="#a9734b"/><rect x="80" y="320" width="20" height="20" fill="#b07c52"/><rect x="100" y="320" width="20" height="20" fill="#b68358"/><rect x="120" y="320" width="20" height="20" fill="#bb885c"/><rect x="140" y="320" width="20" height="20" fill="#c18d61"/><rect x="160" y="320" width="20" height="20" fill="#c69367"/><rect x="180" y="320" width="20" height="20" fill="#cc996d"/><rect x="200" y="320" width="20" height="20" fill="#d2a073"/><rect x="220" y="320" width="20" height="20" fill="#d8a77a"/><rect x="240" y="320" width="20" height="20" fill="#dfaf81"/><rect x="260" y="320" width="20" height="20" fill="#e5b787"/><rect x="280" y="320" width="20" height="20" fill="#ebbe8e"/><rect x="300" y="320" width="20" height="20" fill="#f2c695"/><rect x="320" y="320" width="20" height="20" fill="#f9ce9c"/><rect x="340" y="320" width="20" height="20" fill="#ffd6a2"/><rect x="360" y="320" width="20" height="20" fill="#ffdea9"/><rect x="380" y="320" width="20" height="20" fill="#ffe6b0"/><rect x="400" y="320" width="20" height="20" fill="#ffeeb7"/><rect x="420" y="320" width="20" height="20" fill="#fff6bf"/><rect x="440" y="320" width="20" height="20" fill="#fffec6"/><rect x="460" y="320" width="20" height="20" fill="#ffffcd"/><rect x="480" y="320" width="20" height="20" fill="#ffffd4"/><rect x="500" y="320" width="20" height="20" fill="#ffffdb"/><rect x="520" y="320" width="20" height="20" fill="#ffffe2"/><rect x="540" y="320" width="20" height="20" fill="#ffffea"/><rect x="560" y="320" width="20" height="20" fill="#fffff1"/><rect x="580" y="320" width="20" height="20" fill="#fffff8"/><rect x="600" y="320" width="20" height="20" fill="#ffffff"/><rect x="620" y="320" width="20" height="20" fill="#ffffff"/><rect x="640" y="320" width="20" height="20" fill="#ffffff"/><rect x="-20" y="340" width="20" height="20" fill="#844a28"/><rect x="0" y="340" width="20" height="20" fill="#8d5431"/><rect x="20" y="340" width="20" height="20" fill="#965e3a"/><rect x="40" y="340" width="20" height="20" fill="#a06842"/><rect x="60" y="340" width="20" height="20" fill="#a8724a"/><rect x="80" y="340" width="20" height="20" fill="#af7c51"/><rect x="100" y="340" width="20" height="20" fill="#b58357"/><rect x="120" y="340" width="20" height="20" fill="#bb885b"/><rect x="140" y="340" width="20" height="20" fill="#c08c60"/><rect x="160" y="340" width="20" height="20" fill="#c69266"/><rect x="180" y="340" width="20" height="20" fill="#cb986c"/><rect x="200" y="340" width="20" height="20" fill="#d29f72"/><rect x="220" y="340" width="20" height="20" fill="#d8a679"/><rect x="240" y="340" width="20" height="20" fill="#deae80"/><rect x="260" y="340" width="20" height="20" fill="#e5b686"/><rect x="280" y="340" width="20" height="20" fill="#ebbe8d"/><rect x="300" y="340" width="20" height="20" fill="#f2c594"/><rect x="320" y="340" width="20" height="20" fill="#f8cd9b"/><rect x="340" y="340" width="20" height="20" fill="#ffd5a2"/><rect x="360" y="340" width="20" height="20" fill="#ffdda9"/><rect x="380" y="340" width="20" height="20" fill="#ffe5b0"/><rect x="400" y="340" width="20" height="20" fill="#ffeeb7"/><rect x="420" y="340" width="20" height="20" fill="#fff6be"/><rect x="440" y="340" width="20" height="20" fill="#fffec5"/><rect x="460" y="340" width="20" height="20" fill="#ffffcc"/><rect x="480" y="340" width="20" height="20" fill="#ffffd3"/><rect x="500" y="340" width="20" height="20" fill="#ffffdb"/><rect x="520" y="340" width="20" height="20" fill="#ffffe2"/><rect x="540" y="340" width="20" height="20" fill="#ffffe9"/><rect x="560" y="340" width="20" height="20" fill="#fffff0"/><rect x="580" y="340" width="20" height="20" fill="#fffff8"/><rect x="600" y="340" width="20" height="20" fill="#ffffff"/><rect x="620" y="340" width="20" height="20" fill="#ffffff"/><rect x="640" y="340" width="20" height="20" fill="#ffffff"/><rect x="-20" y="360" width="20" height="20" fill="#844a28"/><rect x="0" y="360" width="20" height="20" fill="#8c5431"/><rect x="20" y="360" width="20" height="20" fill="#955e39"/><rect x="40" y="360" width="20" height="20" fill="#9f6841"/><rect x="60" y="360" width="20" height="20" fill="#a77249"/><rect x="80" y="360" width="20" height="20" fill="#ae7a50"/><rect x="100" y="360" width="20" height="20" fill="#b48155"/><rect x="120" y="360" width="20" height="20" fill="#ba875a"/><rect x="140" y="360" width="20" height="20" fill="#bf8b5f"/><rect x="160" y="360" width="20" height="20" fill="#c59165"/><rect x="180" y="360" width="20" height="20" fill="#cb986b"/><rect x="200" y="360" width="20" height="20" fill="#d19f72"/><rect x="220" y="360" width="20" height="20" fill="#d8a678"/><rect x="240" y="360" width="20" height="20" fill="#dead7f"/><rect x="260" y="360" width="20" height="20" fill="#e5b586"/><rect x="280" y="360" width="20" height="20" fill="#ebbd8d"/><rect x="300" y="360" width="20" height="20" fill="#f2c594"/><rect x="320" y="360" width="20" height="20" fill="#f8cd9a"/><rect x="340" y="360" width="20" height="20" fill="#ffd5a1"/><rect x="360" y="360" width="20" height="20" fill="#ffdda8"/><rect x="380" y="360" width="20" height="20" fill="#ffe5af"/><rect x="400" y="360" width="20" height="20" fill="#ffedb6"/><rect x="420" y="360" width="20" height="20" fill="#fff5be"/><rect x="440" y="360" width="20" height="20" fill="#fffdc5"/><rect x="460" y="360" width="20" height="20" fill="#ffffcc"/><rect x="480" y="360" width="20" height="20" fill="#ffffd3"/><rect x="500" y="360" width="20" height="20" fill="#ffffda"/><rect x="520" y="360" width="20" height="20" fill="#ffffe1"/><rect x="540" y="360" width="20" height="20" fill="#ffffe9"/><rect x="560" y="360" width="20" height="20" fill="#fffff0"/><rect x="580" y="360" width="20" height="20" fill="#fffff7"/><rect x="600" y="360" width="20" height="20" fill="#ffffff"/><rect x="620" y="360" width="20" height="20" fill="#ffffff"/><rect x="640" y="360" width="20" height="20" fill="#ffffff"/><rect x="-20" y="380" width="20" height="20" fill="#844b29"/><rect x="0" y="380" width="20" height="20" fill="#8d5431"/><rect x="20" y="380" width="20" height="20" fill="#955e39"/><rect x="40" y="380" width="20" height="20" fill="#9e6841"/><rect x="60" y="380" width="20" height="20" fill="#a77148"/><rect x="80" y="380" width="20" height="20" fill="#ae794f"/><rect x="100" y="380" width="20" height="20" fill="#b48054"/><rect x="120" y="380" width="20" height="20" fill="#ba865a"/><rect x="140" y="380" width="20" height="20" fill="#c08b5f"/><rect x="160" y="380" width="20" height="20" fill="#c59165"/><rect x="180" y="380" width="20" height="20" fill="#cb976b"/><rect x="200" y="380" width="20" height="20" fill="#d19e71"/><rect x="220" y="380" width="20" height="20" fill="#d8a678"/><rect x="240" y="380" width="20" height="20" fill="#dead7f"/><rect x="260" y="380" width="20" height="20" fill="#e5b585"/><rect x="280" y="380" width="20" height="20" fill="#ebbc8c"/><rect x="300" y="380" width="20" height="20" fill="#f2c493"/><rect x="320" y="380" width="20" height="20" fill="#f8cc9a"/><rect x="340" y="380" width="20" height="20" fill="#ffd4a1"/><rect x="360" y="380" width="20" height="20" fill="#ffdca8"/><rect x="380" y="380" width="20" height="20" fill="#ffe4af"/><rect x="400" y="380" width="20" height="20" fill="#ffedb6"/><rect x="420" y="380" width="20" height="20" fill="#fff5bd"/><rect x="440" y="380" width="20" height="20" fill="#fffdc4"/><rect x="460" y="380" width="20" height="20" fill="#ffffcb"/><rect x="480" y="380" width="20" height="20" fill="#ffffd3"/><rect x="500" y="380" width="20" height="20" fill="#ffffda"/><rect x="520" y="380" width="20" height="20" fill="#ffffe1"/><rect x="540" y="380" width="20" height="20" fill="#ffffe8"/><rect x="560" y="380" width="20" height="20" fill="#fffff0"/><rect x="580" y="380" width="20" height="20" fill="#fffff7"/><rect x="600" y="380" width="20" height="20" fill="#fffffe"/><rect x="620" y="380" width="20" height="20" fill="#ffffff"/><rect x="640" y="380" width="20" height="20" fill="#ffffff"/><rect x="-20" y="400" width="20" height="20" fill="#854b29"/><rect x="0" y="400" width="20" height="20" fill="#8e5532"/><rect x="20" y="400" width="20" height="20" fill="#975f3a"/><rect x="40" y="400" width="20" height="20" fill="#9f6841"/><rect x="60" y="400" width="20" height="20" fill="#a77048"/><rect x="80" y="400" width="20" height="20" fill="#ae784e"/><rect x="100" y="400" width="20" height="20" fill="#b47f54"/><rect x="120" y="400" width="20" height="20" fill="#ba8559"/><rect x="140" y="400" width="20" height="20" fill="#c08b5f"/><rect x="160" y="400" width="20" height="20" fill="#c69165"/><rect x="180" y="400" width="20" height="20" fill="#cc976b"/><rect x="200" y="400" width="20" height="20" fill="#d29e71"/><rect x="220" y="400" width="20" height="20" fill="#d8a578"/><rect x="240" y="400" width="20" height="20" fill="#dead7e"/><rect x="260" y="400" width="20" height="20" fill="#e5b485"/><rect x="280" y="400" width="20" height="20" fill="#ebbc8c"/><rect x="300" y="400" width="20" height="20" fill="#f2c493"/><rect x="320" y="400" width="20" height="20" fill="#f9cc9a"/><rect x="340" y="400" width="20" height="20" fill="#ffd4a1"/><rect x="360" y="400" width="20" height="20" fill="#ffdca8"/><rect x="380" y="400" width="20" height="20" fill="#ffe4af"/><rect x="400" y="400" width="20" height="20" fill="#ffecb6"/><rect x="420" y="400" width="20" height="20" fill="#fff4bd"/><rect x="440" y="400" width="20" height="20" fill="#fffdc4"/><rect x="460" y="400" width="20" height="20" fill="#ffffcb"/><rect x="480" y="400" width="20" height="20" fill="#ffffd2"/><rect x="500" y="400" width="20" height="20" fill="#ffffda"/><rect x="520" y="400" width="20" height="20" fill="#ffffe1"/><rect x="540" y="400" width="20" height="20" fill="#ffffe8"/><rect x="560" y="400" width="20" height="20" fill="#ffffef"/><rect x="580" y="400" width="20" height="20" fill="#fffff7"/><rect x="600" y="400" width="20" height="20" fill="#fffffe"/><rect x="620" y="400" width="20" height="20" fill="#ffffff"/><rect x="640" y="400" width="20" height="20" fill="#ffffff"/><rect x="-20" y="420" width="20" height="20" fill="#864c2a"/><rect x="0" y="420" width="20" height="20" fill="#8f5632"/><rect x="20" y="420" width="20" height="20" fill="#985f3a"/><rect x="40" y="420" width="20" height="20" fill="#a06841"/><rect x="60" y="420" width="20" height="20" fill="#a77048"/><rect x="80" y="420" width="20" height="20" fill="#ae774e"/><rect x="100" y="420" width="20" height="20" fill="#b47e53"/><rect x="120" y="420" width="20" height="20" fill="#ba8459"/><rect x="140" y="420" width="20" height="20" fill="#c08b5f"/><rect x="160" y="420" width="20" height="20" fill="#c69165"/><rect x="180" y="420" width="20" height="20" fill="#cc976b"/><rect x="200" y="420" width="20" height="20" fill="#d29e71"/><rect x="220" y="420" width="20" height="20" fill="#d8a678"/><rect x="240" y="420" width="20" height="20" fill="#dfad7e"/><rect x="260" y="420" width="20" height="20" fill="#e5b485"/><rect x="280" y="420" width="20" height="20" fill="#ecbc8c"/><rect x="300" y="420" width="20" height="20" fill="#f2c493"/><rect x="320" y="420" width="20" height="20" fill="#f9cc99"/><rect x="340" y="420" width="20" height="20" fill="#ffd4a0"/><rect x="360" y="420" width="20" height="20" fill="#ffdca7"/><rect x="380" y="420" width="20" height="20" fill="#ffe4ae"/><rect x="400" y="420" width="20" height="20" fill="#ffecb5"/><rect x="420" y="420" width="20" height="20" fill="#fff4bd"/><rect x="440" y="420" width="20" height="20" fill="#fffcc4"/><rect x="460" y="420" width="20" height="20" fill="#ffffcb"/><rect x="480" y="420" width="20" height="20" fill="#ffffd2"/><rect x="500" y="420" width="20" height="20" fill="#ffffd9"/><rect x="520" y="420" width="20" height="20" fill="#ffffe0"/><rect x="540" y="420" width="20" height="20" fill="#ffffe8"/><rect x="560" y="420" width="20" height="20" fill="#ffffef"/><rect x="580" y="420" width="20" height="20" fill="#fffff6"/><rect x="600" y="420" width="20" height="20" fill="#fffffd"/><rect x="620" y="420" width="20" height="20" fill="#ffffff"/><rect x="640" y="420" width="20" height="20" fill="#ffffff"/><rect x="-20" y="440" width="20" height="20" fill="#874c2a"/><rect x="0" y="440" width="20" height="20" fill="#905532"/><rect x="20" y="440" width="20" height="20" fill="#985f3a"/><rect x="40" y="440" width="20" height="20" fill="#a06741"/><rect x="60" y="440" width="20" height="20" fill="#a86f47"/><rect x="80" y="440" width="20" height="20" fill="#ae764d"/><rect x="100" y="440" width="20" height="20" fill="#b57d53"/><rect x="120" y="440" width="20" height="20" fill="#bb8459"/><rect x="140" y="440" width="20" height="20" fill="#c18a5f"/><rect x="160" y="440" width="20" height="20" fill="#c79165"/><rect x="180" y="440" width="20" height="20" fill="#cd986b"/><rect x="200" y="440" width="20" height="20" fill="#d39f71"/><rect x="220" y="440" width="20" height="20" fill="#d9a678"/><rect x="240" y="440" width="20" height="20" fill="#dfad7e"/><rect x="260" y="440" width="20" height="20" fill="#e6b485"/><rect x="280" y="440" width="20" height="20" fill="#ecbc8c"/><rect x="300" y="440" width="20" height="20" fill="#f3c492"/><rect x="320" y="440" width="20" height="20" fill="#f9cc99"/><rect x="340" y="440" width="20" height="20" fill="#ffd4a0"/><rect x="360" y="440" width="20" height="20" fill="#ffdca7"/><rect x="380" y="440" width="20" height="20" fill="#ffe4ae"/><rect x="400" y="440" width="20" height="20" fill="#ffecb5"/><rect x="420" y="440" width="20" height="20" fill="#fff4bc"/><rect x="440" y="440" width="20" height="20" fill="#fffcc3"/><rect x="460" y="440" width="20" height="20" fill="#ffffcb"/><rect x="480" y="440" width="20" height="20" fill="#ffffd2"/><rect x="500" y="440" width="20" height="20" fill="#ffffd9"/><rect x="520" y="440" width="20" height="20" fill="#ffffe0"/><rect x="540" y="440" width="20" height="20" fill="#ffffe7"/><rect x="560" y="440" width="20" height="20" fill="#ffffef"/><rect x="580" y="440" width="20" height="20" fill="#fffff6"/><rect x="600" y="440" width="20" height="20" fill="#fffffd"/><rect x="620" y="440" width="20" height="20" fill="#ffffff"/><rect x="640" y="440" width="20" height="20" fill="#ffffff"/><rect x="-20" y="460" width="20" height="20" fill="#884c2a"/><rect x="0" y="460" width="20" height="20" fill="#905532"/><rect x="20" y="460" width="20" height="20" fill="#985e39"/><rect x="40" y="460" width="20" height="20" fill="#a06640"/><rect x="60" y="460" width="20" height="20" fill="#a76e47"/><rect x="80" y="460" width="20" height="20" fill="#ae754d"/><rect x="100" y="460" width="20" height="20" fill="#b57d53"/><rect x="120" y="460" width="20" height="20" fill="#bb8359"/><rect x="140" y="460" width="20" height="20" fill="#c18a5f"/><rect x="160" y="460" width="20" height="20" fill="#c79165"/><rect x="180" y="460" width="20" height="20" fill="#cd986b"/><rect x="200" y="460" width="20" height="20" fill="#d39f71"/><rect x="220" y="460" width="20" height="20" fill="#d9a678"/><rect x="240" y="460" width="20" height="20" fill="#e0ad7e"/><rect x="260" y="460" width="20" height="20" fill="#e6b585"/><rect x="280" y="460" width="20" height="20" fill="#ecbc8b"/><rect x="300" y="460" width="20" height="20" fill="#f3c492"/><rect x="320" y="460" width="20" height="20" fill="#f9cc99"/><rect x="340" y="460" width="20" height="20" fill="#ffd4a0"/><rect x="360" y="460" width="20" height="20" fill="#ffdca7"/><rect x="380" y="460" width="20" height="20" fill="#ffe4ae"/><rect x="400" y="460" width="20" height="20" fill="#ffecb5"/><rect x="420" y="460" width="20" height="20" fill="#fff4bc"/><rect x="440" y="460" width="20" height="20" fill="#fffcc3"/><rect x="460" y="460" width="20" height="20" fill="#ffffca"/><rect x="480" y="460" width="20" height="20" fill="#ffffd1"/><rect x="500" y="460" width="20" height="20" fill="#ffffd9"/><rect x="520" y="460" width="20" height="20" fill="#ffffe0"/><rect x="540" y="460" width="20" height="20" fill="#ffffe7"/><rect x="560" y="460" width="20" height="20" fill="#ffffee"/><rect x="580" y="460" width="20" height="20" fill="#fffff6"/><rect x="600" y="460" width="20" height="20" fill="#fffffd"/><rect x="620" y="460" width="20" height="20" fill="#ffffff"/><rect x="640" y="460" width="20" height="20" fill="#ffffff"/><rect x="-20" y="480" width="20" height="20" fill="#884c2a"/><rect x="0" y="480" width="20" height="20" fill="#905531"/><rect x="20" y="480" width="20" height="20" fill="#985d39"/><rect x="40" y="480" width="20" height="20" fill="#a0653f"/><rect x="60" y="480" width="20" height="20" fill="#a76d46"/><rect x="80" y="480" width="20" height="20" fill="#ae754c"/><rect x="100" y="480" width="20" height="20" fill="#b57c52"/><rect x="120" y="480" width="20" height="20" fill="#bb8359"/><rect x="140" y="480" width="20" height="20" fill="#c18a5f"/><rect x="160" y="480" width="20" height="20" fill="#c79165"/><rect x="180" y="480" width="20" height="20" fill="#cd986b"/><rect x="200" y="480" width="20" height="20" fill="#d49f71"/><rect x="220" y="480" width="20" height="20" fill="#daa678"/><rect x="240" y="480" width="20" height="20" fill="#e0ad7e"/><rect x="260" y="480" width="20" height="20" fill="#e6b585"/><rect x="280" y="480" width="20" height="20" fill="#edbc8b"/><rect x="300" y="480" width="20" height="20" fill="#f3c492"/><rect x="320" y="480" width="20" height="20" fill="#facc99"/><rect x="340" y="480" width="20" height="20" fill="#ffd4a0"/><rect x="360" y="480" width="20" height="20" fill="#ffdca7"/><rect x="380" y="480" width="20" height="20" fill="#ffe4ae"/><rect x="400" y="480" width="20" height="20" fill="#ffecb5"/><rect x="420" y="480" width="20" height="20" fill="#fff4bc"/><rect x="440" y="480" width="20" height="20" fill="#fffcc3"/><rect x="460" y="480" width="20" height="20" fill="#ffffca"/><rect x="480" y="480" width="20" height="20" fill="#ffffd1"/><rect x="500" y="480" width="20" height="20" fill="#ffffd8"/><rect x="520" y="480" width="20" height="20" fill="#ffffe0"/><rect x="540" y="480" width="20" height="20" fill="#ffffe7"/><rect x="560" y="480" width="20" height="20" fill="#ffffee"/><rect x="580" y="480" width="20" height="20" fill="#fffff5"/><rect x="600" y="480" width="20" height="20" fill="#fffffd"/><rect x="620" y="480" width="20" height="20" fill="#ffffff"/><rect x="640" y="480" width="20" height="20" fill="#ffffff"/><rect x="-20" y="500" width="20" height="20" fill="#884b29"/><rect x="0" y="500" width="20" height="20" fill="#905431"/><rect x="20" y="500" width="20" height="20" fill="#985d38"/><rect x="40" y="500" width="20" height="20" fill="#a0653f"/><rect x="60" y="500" width="20" height="20" fill="#a76d45"/><rect x="80" y="500" width="20" height="20" fill="#ae744c"/><rect x="100" y="500" width="20" height="20" fill="#b57c52"/><rect x="120" y="500" width="20" height="20" fill="#bb8358"/><rect x="140" y="500" width="20" height="20" fill="#c18a5f"/><rect x="160" y="500" width="20" height="20" fill="#c89165"/><rect x="180" y="500" width="20" height="20" fill="#ce986b"/><rect x="200" y="500" width="20" height="20" fill="#d49f71"/><rect x="220" y="500" width="20" height="20" fill="#daa678"/><rect x="240" y="500" width="20" height="20" fill="#e0ad7e"/><rect x="260" y="500" width="20" height="20" fill="#e7b585"/><rect x="280" y="500" width="20" height="20" fill="#edbc8b"/><rect x="300" y="500" width="20" height="20" fill="#f4c492"/><rect x="320" y="500" width="20" height="20" fill="#facc99"/><rect x="340" y="500" width="20" height="20" fill="#ffd4a0"/><rect x="360" y="500" width="20" height="20" fill="#ffdca7"/><rect x="380" y="500" width="20" height="20" fill="#ffe4ae"/><rect x="400" y="500" width="20" height="20" fill="#ffecb5"/><rect x="420" y="500" width="20" height="20" fill="#fff4bc"/><rect x="440" y="500" width="20" height="20" fill="#fffcc3"/><rect x="460" y="500" width="20" height="20" fill="#ffffca"/><rect x="480" y="500" width="20" height="20" fill="#ffffd1"/><rect x="500" y="500" width="20" height="20" fill="#ffffd8"/><rect x="520" y="500" width="20" height="20" fill="#ffffe0"/><rect x="540" y="500" width="20" height="20" fill="#ffffe7"/><rect x="560" y="500" width="20" height="20" fill="#ffffee"/><rect x="580" y="500" width="20" height="20" fill="#fffff5"/><rect x="600" y="500" width="20" height="20" fill="#fffffc"/><rect x="620" y="500" width="20" height="20" fill="#ffffff"/><rect x="640" y="500" width="20" height="20" fill="#ffffff"/></g><g clip-path="url(#cL2)"><g filter="url(#wb)"><rect x="-20" y="-40" width="20" height="20" fill="#ffe4b0"/><rect x="0" y="-40" width="20" height="20" fill="#ffe3b0"/><rect x="20" y="-40" width="20" height="20" fill="#ffe3b0"/><rect x="40" y="-40" width="20" height="20" fill="#ffe3af"/><rect x="60" y="-40" width="20" height="20" fill="#ffe2af"/><rect x="80" y="-40" width="20" height="20" fill="#ffe2af"/><rect x="100" y="-40" width="20" height="20" fill="#ffe2ae"/><rect x="120" y="-40" width="20" height="20" fill="#ffe2ae"/><rect x="140" y="-40" width="20" height="20" fill="#ffe1ae"/><rect x="160" y="-40" width="20" height="20" fill="#ffe1ad"/><rect x="180" y="-40" width="20" height="20" fill="#ffe1ad"/><rect x="200" y="-40" width="20" height="20" fill="#ffe0ad"/><rect x="220" y="-40" width="20" height="20" fill="#ffe0ac"/><rect x="240" y="-40" width="20" height="20" fill="#ffe0ac"/><rect x="260" y="-40" width="20" height="20" fill="#ffdfac"/><rect x="280" y="-40" width="20" height="20" fill="#ffdfab"/><rect x="300" y="-40" width="20" height="20" fill="#ffdeab"/><rect x="320" y="-40" width="20" height="20" fill="#ffdeaa"/><rect x="340" y="-40" width="20" height="20" fill="#ffdeaa"/><rect x="360" y="-40" width="20" height="20" fill="#ffdda9"/><rect x="380" y="-40" width="20" height="20" fill="#ffdda9"/><rect x="400" y="-40" width="20" height="20" fill="#ffddaa"/><rect x="420" y="-40" width="20" height="20" fill="#ffdeab"/><rect x="440" y="-40" width="20" height="20" fill="#ffdeac"/><rect x="460" y="-40" width="20" height="20" fill="#ffdfad"/><rect x="480" y="-40" width="20" height="20" fill="#ffdfad"/><rect x="500" y="-40" width="20" height="20" fill="#ffdeae"/><rect x="520" y="-40" width="20" height="20" fill="#ffddad"/><rect x="540" y="-40" width="20" height="20" fill="#ffdcac"/><rect x="560" y="-40" width="20" height="20" fill="#ffdbaa"/><rect x="580" y="-40" width="20" height="20" fill="#fed9a8"/><rect x="600" y="-40" width="20" height="20" fill="#fdd8a7"/><rect x="620" y="-40" width="20" height="20" fill="#fcd7a5"/><rect x="640" y="-40" width="20" height="20" fill="#fbd6a4"/><rect x="-20" y="-20" width="20" height="20" fill="#ffdfac"/><rect x="0" y="-20" width="20" height="20" fill="#ffdeac"/><rect x="20" y="-20" width="20" height="20" fill="#ffdeab"/><rect x="40" y="-20" width="20" height="20" fill="#ffdeab"/><rect x="60" y="-20" width="20" height="20" fill="#ffddab"/><rect x="80" y="-20" width="20" height="20" fill="#ffddaa"/><rect x="100" y="-20" width="20" height="20" fill="#ffddaa"/><rect x="120" y="-20" width="20" height="20" fill="#ffdcaa"/><rect x="140" y="-20" width="20" height="20" fill="#ffdca9"/><rect x="160" y="-20" width="20" height="20" fill="#ffdca9"/><rect x="180" y="-20" width="20" height="20" fill="#ffdba9"/><rect x="200" y="-20" width="20" height="20" fill="#ffdba8"/><rect x="220" y="-20" width="20" height="20" fill="#ffdba8"/><rect x="240" y="-20" width="20" height="20" fill="#fedaa7"/><rect x="260" y="-20" width="20" height="20" fill="#fedaa7"/><rect x="280" y="-20" width="20" height="20" fill="#fddaa7"/><rect x="300" y="-20" width="20" height="20" fill="#fdd9a6"/><rect x="320" y="-20" width="20" height="20" fill="#fcd9a5"/><rect x="340" y="-20" width="20" height="20" fill="#fcd8a5"/><rect x="360" y="-20" width="20" height="20" fill="#fcd8a4"/><rect x="380" y="-20" width="20" height="20" fill="#fbd8a4"/><rect x="400" y="-20" width="20" height="20" fill="#fcd8a5"/><rect x="420" y="-20" width="20" height="20" fill="#fcd9a5"/><rect x="440" y="-20" width="20" height="20" fill="#fdd9a7"/><rect x="460" y="-20" width="20" height="20" fill="#fedaa8"/><rect x="480" y="-20" width="20" height="20" fill="#fedaa9"/><rect x="500" y="-20" width="20" height="20" fill="#fedaaa"/><rect x="520" y="-20" width="20" height="20" fill="#fdd9a9"/><rect x="540" y="-20" width="20" height="20" fill="#fcd7a8"/><rect x="560" y="-20" width="20" height="20" fill="#fbd6a6"/><rect x="580" y="-20" width="20" height="20" fill="#fad4a4"/><rect x="600" y="-20" width="20" height="20" fill="#f9d3a2"/><rect x="620" y="-20" width="20" height="20" fill="#f8d2a1"/><rect x="640" y="-20" width="20" height="20" fill="#f7d19f"/><rect x="-20" y="0" width="20" height="20" fill="#fedaa8"/><rect x="0" y="0" width="20" height="20" fill="#fed9a7"/><rect x="20" y="0" width="20" height="20" fill="#fed9a7"/><rect x="40" y="0" width="20" height="20" fill="#fed9a6"/><rect x="60" y="0" width="20" height="20" fill="#fdd8a6"/><rect x="80" y="0" width="20" height="20" fill="#fdd8a6"/><rect x="100" y="0" width="20" height="20" fill="#fdd8a5"/><rect x="120" y="0" width="20" height="20" fill="#fcd7a5"/><rect x="140" y="0" width="20" height="20" fill="#fcd7a5"/><rect x="160" y="0" width="20" height="20" fill="#fcd7a4"/><rect x="180" y="0" width="20" height="20" fill="#fbd6a4"/><rect x="200" y="0" width="20" height="20" fill="#fbd6a4"/><rect x="220" y="0" width="20" height="20" fill="#fbd6a3"/><rect x="240" y="0" width="20" height="20" fill="#fad5a3"/><rect x="260" y="0" width="20" height="20" fill="#fad5a2"/><rect x="280" y="0" width="20" height="20" fill="#f9d4a2"/><rect x="300" y="0" width="20" height="20" fill="#f9d4a1"/><rect x="320" y="0" width="20" height="20" fill="#f8d3a1"/><rect x="340" y="0" width="20" height="20" fill="#f8d3a0"/><rect x="360" y="0" width="20" height="20" fill="#f7d2a0"/><rect x="380" y="0" width="20" height="20" fill="#f7d29f"/><rect x="400" y="0" width="20" height="20" fill="#f7d39f"/><rect x="420" y="0" width="20" height="20" fill="#f8d3a0"/><rect x="440" y="0" width="20" height="20" fill="#f9d4a2"/><rect x="460" y="0" width="20" height="20" fill="#fad5a3"/><rect x="480" y="0" width="20" height="20" fill="#fad5a5"/><rect x="500" y="0" width="20" height="20" fill="#fad5a6"/><rect x="520" y="0" width="20" height="20" fill="#f9d4a5"/><rect x="540" y="0" width="20" height="20" fill="#f8d2a3"/><rect x="560" y="0" width="20" height="20" fill="#f6d0a1"/><rect x="580" y="0" width="20" height="20" fill="#f5cf9f"/><rect x="600" y="0" width="20" height="20" fill="#f4cd9d"/><rect x="620" y="0" width="20" height="20" fill="#f3cc9c"/><rect x="640" y="0" width="20" height="20" fill="#f3cc9b"/><rect x="-20" y="20" width="20" height="20" fill="#fbd5a3"/><rect x="0" y="20" width="20" height="20" fill="#fad4a3"/><rect x="20" y="20" width="20" height="20" fill="#fad4a2"/><rect x="40" y="20" width="20" height="20" fill="#fad4a2"/><rect x="60" y="20" width="20" height="20" fill="#f9d3a2"/><rect x="80" y="20" width="20" height="20" fill="#f9d3a1"/><rect x="100" y="20" width="20" height="20" fill="#f9d3a1"/><rect x="120" y="20" width="20" height="20" fill="#f8d2a1"/><rect x="140" y="20" width="20" height="20" fill="#f8d2a0"/><rect x="160" y="20" width="20" height="20" fill="#f8d1a0"/><rect x="180" y="20" width="20" height="20" fill="#f7d19f"/><rect x="200" y="20" width="20" height="20" fill="#f7d19f"/><rect x="220" y="20" width="20" height="20" fill="#f7d09f"/><rect x="240" y="20" width="20" height="20" fill="#f6d09e"/><rect x="260" y="20" width="20" height="20" fill="#f6d09e"/><rect x="280" y="20" width="20" height="20" fill="#f5cf9d"/><rect x="300" y="20" width="20" height="20" fill="#f5cf9d"/><rect x="320" y="20" width="20" height="20" fill="#f4ce9c"/><rect x="340" y="20" width="20" height="20" fill="#f4ce9b"/><rect x="360" y="20" width="20" height="20" fill="#f3cd9b"/><rect x="380" y="20" width="20" height="20" fill="#f3cd9a"/><rect x="400" y="20" width="20" height="20" fill="#f3cd9a"/><rect x="420" y="20" width="20" height="20" fill="#f4ce9b"/><rect x="440" y="20" width="20" height="20" fill="#f5cf9c"/><rect x="460" y="20" width="20" height="20" fill="#f5d09e"/><rect x="480" y="20" width="20" height="20" fill="#f6d0a0"/><rect x="500" y="20" width="20" height="20" fill="#f6d0a1"/><rect x="520" y="20" width="20" height="20" fill="#f5cea0"/><rect x="540" y="20" width="20" height="20" fill="#f3cc9e"/><rect x="560" y="20" width="20" height="20" fill="#f2cb9c"/><rect x="580" y="20" width="20" height="20" fill="#f1c99a"/><rect x="600" y="20" width="20" height="20" fill="#f0c899"/><rect x="620" y="20" width="20" height="20" fill="#efc797"/><rect x="640" y="20" width="20" height="20" fill="#efc797"/><rect x="-20" y="40" width="20" height="20" fill="#f7d09f"/><rect x="0" y="40" width="20" height="20" fill="#f6cf9e"/><rect x="20" y="40" width="20" height="20" fill="#f6cf9e"/><rect x="40" y="40" width="20" height="20" fill="#f6ce9e"/><rect x="60" y="40" width="20" height="20" fill="#f5ce9d"/><rect x="80" y="40" width="20" height="20" fill="#f5ce9d"/><rect x="100" y="40" width="20" height="20" fill="#f5cd9c"/><rect x="120" y="40" width="20" height="20" fill="#f4cd9c"/><rect x="140" y="40" width="20" height="20" fill="#f4cd9c"/><rect x="160" y="40" width="20" height="20" fill="#f4cc9b"/><rect x="180" y="40" width="20" height="20" fill="#f3cc9b"/><rect x="200" y="40" width="20" height="20" fill="#f3cc9b"/><rect x="220" y="40" width="20" height="20" fill="#f3cb9a"/><rect x="240" y="40" width="20" height="20" fill="#f2cb9a"/><rect x="260" y="40" width="20" height="20" fill="#f2ca99"/><rect x="280" y="40" width="20" height="20" fill="#f1ca99"/><rect x="300" y="40" width="20" height="20" fill="#f1c998"/><rect x="320" y="40" width="20" height="20" fill="#f0c998"/><rect x="340" y="40" width="20" height="20" fill="#f0c897"/><rect x="360" y="40" width="20" height="20" fill="#efc896"/><rect x="380" y="40" width="20" height="20" fill="#efc896"/><rect x="400" y="40" width="20" height="20" fill="#efc896"/><rect x="420" y="40" width="20" height="20" fill="#f0c996"/><rect x="440" y="40" width="20" height="20" fill="#f0ca97"/><rect x="460" y="40" width="20" height="20" fill="#f1ca98"/><rect x="480" y="40" width="20" height="20" fill="#f1ca9a"/><rect x="500" y="40" width="20" height="20" fill="#f0ca9b"/><rect x="520" y="40" width="20" height="20" fill="#efc89a"/><rect x="540" y="40" width="20" height="20" fill="#eec699"/><rect x="560" y="40" width="20" height="20" fill="#edc597"/><rect x="580" y="40" width="20" height="20" fill="#ecc496"/><rect x="600" y="40" width="20" height="20" fill="#ebc394"/><rect x="620" y="40" width="20" height="20" fill="#ebc293"/><rect x="640" y="40" width="20" height="20" fill="#ebc293"/><rect x="-20" y="60" width="20" height="20" fill="#f3ca9a"/><rect x="0" y="60" width="20" height="20" fill="#f2ca9a"/><rect x="20" y="60" width="20" height="20" fill="#f2ca9a"/><rect x="40" y="60" width="20" height="20" fill="#f2c999"/><rect x="60" y="60" width="20" height="20" fill="#f1c999"/><rect x="80" y="60" width="20" height="20" fill="#f1c998"/><rect x="100" y="60" width="20" height="20" fill="#f1c898"/><rect x="120" y="60" width="20" height="20" fill="#f0c898"/><rect x="140" y="60" width="20" height="20" fill="#f0c797"/><rect x="160" y="60" width="20" height="20" fill="#f0c797"/><rect x="180" y="60" width="20" height="20" fill="#efc796"/><rect x="200" y="60" width="20" height="20" fill="#efc696"/><rect x="220" y="60" width="20" height="20" fill="#efc696"/><rect x="240" y="60" width="20" height="20" fill="#eec695"/><rect x="260" y="60" width="20" height="20" fill="#eec595"/><rect x="280" y="60" width="20" height="20" fill="#edc594"/><rect x="300" y="60" width="20" height="20" fill="#edc494"/><rect x="320" y="60" width="20" height="20" fill="#ecc493"/><rect x="340" y="60" width="20" height="20" fill="#ecc392"/><rect x="360" y="60" width="20" height="20" fill="#ebc392"/><rect x="380" y="60" width="20" height="20" fill="#ebc392"/><rect x="400" y="60" width="20" height="20" fill="#ebc392"/><rect x="420" y="60" width="20" height="20" fill="#ebc392"/><rect x="440" y="60" width="20" height="20" fill="#ecc492"/><rect x="460" y="60" width="20" height="20" fill="#ecc493"/><rect x="480" y="60" width="20" height="20" fill="#ecc494"/><rect x="500" y="60" width="20" height="20" fill="#ebc395"/><rect x="520" y="60" width="20" height="20" fill="#eac295"/><rect x="540" y="60" width="20" height="20" fill="#e8c094"/><rect x="560" y="60" width="20" height="20" fill="#e8bf92"/><rect x="580" y="60" width="20" height="20" fill="#e7be91"/><rect x="600" y="60" width="20" height="20" fill="#e7bd90"/><rect x="620" y="60" width="20" height="20" fill="#e7bd8f"/><rect x="640" y="60" width="20" height="20" fill="#e7bd8f"/><rect x="-20" y="80" width="20" height="20" fill="#efc596"/><rect x="0" y="80" width="20" height="20" fill="#eec595"/><rect x="20" y="80" width="20" height="20" fill="#eec595"/><rect x="40" y="80" width="20" height="20" fill="#eec495"/><rect x="60" y="80" width="20" height="20" fill="#edc494"/><rect x="80" y="80" width="20" height="20" fill="#edc494"/><rect x="100" y="80" width="20" height="20" fill="#edc394"/><rect x="120" y="80" width="20" height="20" fill="#ecc393"/><rect x="140" y="80" width="20" height="20" fill="#ecc293"/><rect x="160" y="80" width="20" height="20" fill="#ecc292"/><rect x="180" y="80" width="20" height="20" fill="#ebc292"/><rect x="200" y="80" width="20" height="20" fill="#ebc192"/><rect x="220" y="80" width="20" height="20" fill="#eac191"/><rect x="240" y="80" width="20" height="20" fill="#eac091"/><rect x="260" y="80" width="20" height="20" fill="#eac090"/><rect x="280" y="80" width="20" height="20" fill="#e9bf90"/><rect x="300" y="80" width="20" height="20" fill="#e9bf8f"/><rect x="320" y="80" width="20" height="20" fill="#e8be8e"/><rect x="340" y="80" width="20" height="20" fill="#e7be8e"/><rect x="360" y="80" width="20" height="20" fill="#e7be8e"/><rect x="380" y="80" width="20" height="20" fill="#e7bd8e"/><rect x="400" y="80" width="20" height="20" fill="#e7be8e"/><rect x="420" y="80" width="20" height="20" fill="#e7be8e"/><rect x="440" y="80" width="20" height="20" fill="#e7be8f"/><rect x="460" y="80" width="20" height="20" fill="#e7be8f"/><rect x="480" y="80" width="20" height="20" fill="#e6be90"/><rect x="500" y="80" width="20" height="20" fill="#e5bd90"/><rect x="520" y="80" width="20" height="20" fill="#e4bb8f"/><rect x="540" y="80" width="20" height="20" fill="#e3ba8e"/><rect x="560" y="80" width="20" height="20" fill="#e2b98d"/><rect x="580" y="80" width="20" height="20" fill="#e2b88c"/><rect x="600" y="80" width="20" height="20" fill="#e3b88c"/><rect x="620" y="80" width="20" height="20" fill="#e3b88b"/><rect x="640" y="80" width="20" height="20" fill="#e3b88b"/><rect x="-20" y="100" width="20" height="20" fill="#ebc091"/><rect x="0" y="100" width="20" height="20" fill="#ebc091"/><rect x="20" y="100" width="20" height="20" fill="#eac091"/><rect x="40" y="100" width="20" height="20" fill="#eabf90"/><rect x="60" y="100" width="20" height="20" fill="#eabf90"/><rect x="80" y="100" width="20" height="20" fill="#e9be90"/><rect x="100" y="100" width="20" height="20" fill="#e9be8f"/><rect x="120" y="100" width="20" height="20" fill="#e8be8f"/><rect x="140" y="100" width="20" height="20" fill="#e8bd8e"/><rect x="160" y="100" width="20" height="20" fill="#e8bd8e"/><rect x="180" y="100" width="20" height="20" fill="#e7bc8d"/><rect x="200" y="100" width="20" height="20" fill="#e7bc8d"/><rect x="220" y="100" width="20" height="20" fill="#e6bb8d"/><rect x="240" y="100" width="20" height="20" fill="#e6bb8c"/><rect x="260" y="100" width="20" height="20" fill="#e5ba8c"/><rect x="280" y="100" width="20" height="20" fill="#e5ba8b"/><rect x="300" y="100" width="20" height="20" fill="#e4b98b"/><rect x="320" y="100" width="20" height="20" fill="#e4b98a"/><rect x="340" y="100" width="20" height="20" fill="#e3b98a"/><rect x="360" y="100" width="20" height="20" fill="#e3b889"/><rect x="380" y="100" width="20" height="20" fill="#e3b889"/><rect x="400" y="100" width="20" height="20" fill="#e3b88a"/><rect x="420" y="100" width="20" height="20" fill="#e3b88a"/><rect x="440" y="100" width="20" height="20" fill="#e3b88b"/><rect x="460" y="100" width="20" height="20" fill="#e3b88c"/><rect x="480" y="100" width="20" height="20" fill="#e2b88c"/><rect x="500" y="100" width="20" height="20" fill="#e0b78b"/><rect x="520" y="100" width="20" height="20" fill="#dfb58a"/><rect x="540" y="100" width="20" height="20" fill="#ddb489"/><rect x="560" y="100" width="20" height="20" fill="#ddb388"/><rect x="580" y="100" width="20" height="20" fill="#deb388"/><rect x="600" y="100" width="20" height="20" fill="#deb388"/><rect x="620" y="100" width="20" height="20" fill="#dfb387"/><rect x="640" y="100" width="20" height="20" fill="#dfb387"/><rect x="-20" y="120" width="20" height="20" fill="#e7bb8d"/><rect x="0" y="120" width="20" height="20" fill="#e7bb8d"/><rect x="20" y="120" width="20" height="20" fill="#e6bb8c"/><rect x="40" y="120" width="20" height="20" fill="#e6ba8c"/><rect x="60" y="120" width="20" height="20" fill="#e6ba8b"/><rect x="80" y="120" width="20" height="20" fill="#e5b98b"/><rect x="100" y="120" width="20" height="20" fill="#e5b98b"/><rect x="120" y="120" width="20" height="20" fill="#e5b88a"/><rect x="140" y="120" width="20" height="20" fill="#e4b88a"/><rect x="160" y="120" width="20" height="20" fill="#e4b889"/><rect x="180" y="120" width="20" height="20" fill="#e3b789"/><rect x="200" y="120" width="20" height="20" fill="#e3b789"/><rect x="220" y="120" width="20" height="20" fill="#e2b688"/><rect x="240" y="120" width="20" height="20" fill="#e2b688"/><rect x="260" y="120" width="20" height="20" fill="#e1b587"/><rect x="280" y="120" width="20" height="20" fill="#e1b587"/><rect x="300" y="120" width="20" height="20" fill="#e0b486"/><rect x="320" y="120" width="20" height="20" fill="#e0b486"/><rect x="340" y="120" width="20" height="20" fill="#dfb385"/><rect x="360" y="120" width="20" height="20" fill="#dfb385"/><rect x="380" y="120" width="20" height="20" fill="#dfb385"/><rect x="400" y="120" width="20" height="20" fill="#deb285"/><rect x="420" y="120" width="20" height="20" fill="#deb286"/><rect x="440" y="120" width="20" height="20" fill="#deb287"/><rect x="460" y="120" width="20" height="20" fill="#deb288"/><rect x="480" y="120" width="20" height="20" fill="#ddb288"/><rect x="500" y="120" width="20" height="20" fill="#dcb287"/><rect x="520" y="120" width="20" height="20" fill="#dbb186"/><rect x="540" y="120" width="20" height="20" fill="#d9af85"/><rect x="560" y="120" width="20" height="20" fill="#d8ae84"/><rect x="580" y="120" width="20" height="20" fill="#daae84"/><rect x="600" y="120" width="20" height="20" fill="#dbaf84"/><rect x="620" y="120" width="20" height="20" fill="#dbaf84"/><rect x="640" y="120" width="20" height="20" fill="#dcaf83"/><rect x="-20" y="140" width="20" height="20" fill="#e3b689"/><rect x="0" y="140" width="20" height="20" fill="#e3b688"/><rect x="20" y="140" width="20" height="20" fill="#e2b588"/><rect x="40" y="140" width="20" height="20" fill="#e2b588"/><rect x="60" y="140" width="20" height="20" fill="#e2b587"/><rect x="80" y="140" width="20" height="20" fill="#e1b487"/><rect x="100" y="140" width="20" height="20" fill="#e1b486"/><rect x="120" y="140" width="20" height="20" fill="#e1b386"/><rect x="140" y="140" width="20" height="20" fill="#e0b385"/><rect x="160" y="140" width="20" height="20" fill="#e0b285"/><rect x="180" y="140" width="20" height="20" fill="#dfb285"/><rect x="200" y="140" width="20" height="20" fill="#dfb284"/><rect x="220" y="140" width="20" height="20" fill="#deb184"/><rect x="240" y="140" width="20" height="20" fill="#deb183"/><rect x="260" y="140" width="20" height="20" fill="#ddb083"/><rect x="280" y="140" width="20" height="20" fill="#ddaf82"/><rect x="300" y="140" width="20" height="20" fill="#dcaf82"/><rect x="320" y="140" width="20" height="20" fill="#dcae81"/><rect x="340" y="140" width="20" height="20" fill="#dbae81"/><rect x="360" y="140" width="20" height="20" fill="#dbae81"/><rect x="380" y="140" width="20" height="20" fill="#dbad81"/><rect x="400" y="140" width="20" height="20" fill="#daad81"/><rect x="420" y="140" width="20" height="20" fill="#daad81"/><rect x="440" y="140" width="20" height="20" fill="#daac82"/><rect x="460" y="140" width="20" height="20" fill="#d9ac82"/><rect x="480" y="140" width="20" height="20" fill="#d9ad83"/><rect x="500" y="140" width="20" height="20" fill="#d9ad83"/><rect x="520" y="140" width="20" height="20" fill="#d8ad83"/><rect x="540" y="140" width="20" height="20" fill="#d8ad83"/><rect x="560" y="140" width="20" height="20" fill="#d7ac82"/><rect x="580" y="140" width="20" height="20" fill="#d7ab81"/><rect x="600" y="140" width="20" height="20" fill="#d8ab81"/><rect x="620" y="140" width="20" height="20" fill="#d8ab81"/><rect x="640" y="140" width="20" height="20" fill="#d9ab80"/><rect x="-20" y="160" width="20" height="20" fill="#dfb184"/><rect x="0" y="160" width="20" height="20" fill="#dfb184"/><rect x="20" y="160" width="20" height="20" fill="#dfb084"/><rect x="40" y="160" width="20" height="20" fill="#deb083"/><rect x="60" y="160" width="20" height="20" fill="#deb083"/><rect x="80" y="160" width="20" height="20" fill="#ddaf82"/><rect x="100" y="160" width="20" height="20" fill="#ddaf82"/><rect x="120" y="160" width="20" height="20" fill="#ddae81"/><rect x="140" y="160" width="20" height="20" fill="#dcae81"/><rect x="160" y="160" width="20" height="20" fill="#dcad81"/><rect x="180" y="160" width="20" height="20" fill="#dbad80"/><rect x="200" y="160" width="20" height="20" fill="#dbac80"/><rect x="220" y="160" width="20" height="20" fill="#daac7f"/><rect x="240" y="160" width="20" height="20" fill="#daab7f"/><rect x="260" y="160" width="20" height="20" fill="#daab7e"/><rect x="280" y="160" width="20" height="20" fill="#d9aa7e"/><rect x="300" y="160" width="20" height="20" fill="#d9aa7d"/><rect x="320" y="160" width="20" height="20" fill="#d8a97d"/><rect x="340" y="160" width="20" height="20" fill="#d8a97d"/><rect x="360" y="160" width="20" height="20" fill="#d7a87d"/><rect x="380" y="160" width="20" height="20" fill="#d7a87c"/><rect x="400" y="160" width="20" height="20" fill="#d6a87c"/><rect x="420" y="160" width="20" height="20" fill="#d6a77d"/><rect x="440" y="160" width="20" height="20" fill="#d5a77d"/><rect x="460" y="160" width="20" height="20" fill="#d5a77d"/><rect x="480" y="160" width="20" height="20" fill="#d5a87e"/><rect x="500" y="160" width="20" height="20" fill="#d6a97f"/><rect x="520" y="160" width="20" height="20" fill="#d6aa80"/><rect x="540" y="160" width="20" height="20" fill="#d7aa80"/><rect x="560" y="160" width="20" height="20" fill="#d6aa80"/><rect x="580" y="160" width="20" height="20" fill="#d6a97f"/><rect x="600" y="160" width="20" height="20" fill="#d6a87e"/><rect x="620" y="160" width="20" height="20" fill="#d6a77d"/><rect x="640" y="160" width="20" height="20" fill="#d6a77d"/><rect x="-20" y="180" width="20" height="20" fill="#dbac80"/><rect x="0" y="180" width="20" height="20" fill="#dbac80"/><rect x="20" y="180" width="20" height="20" fill="#dbab7f"/><rect x="40" y="180" width="20" height="20" fill="#daab7f"/><rect x="60" y="180" width="20" height="20" fill="#daab7e"/><rect x="80" y="180" width="20" height="20" fill="#daaa7e"/><rect x="100" y="180" width="20" height="20" fill="#d9aa7e"/><rect x="120" y="180" width="20" height="20" fill="#d9a97d"/><rect x="140" y="180" width="20" height="20" fill="#d8a97d"/><rect x="160" y="180" width="20" height="20" fill="#d8a87c"/><rect x="180" y="180" width="20" height="20" fill="#d8a87c"/><rect x="200" y="180" width="20" height="20" fill="#d7a77b"/><rect x="220" y="180" width="20" height="20" fill="#d7a77b"/><rect x="240" y="180" width="20" height="20" fill="#d6a67a"/><rect x="260" y="180" width="20" height="20" fill="#d6a67a"/><rect x="280" y="180" width="20" height="20" fill="#d5a57a"/><rect x="300" y="180" width="20" height="20" fill="#d5a579"/><rect x="320" y="180" width="20" height="20" fill="#d4a479"/><rect x="340" y="180" width="20" height="20" fill="#d4a479"/><rect x="360" y="180" width="20" height="20" fill="#d3a378"/><rect x="380" y="180" width="20" height="20" fill="#d3a378"/><rect x="400" y="180" width="20" height="20" fill="#d2a378"/><rect x="420" y="180" width="20" height="20" fill="#d2a278"/><rect x="440" y="180" width="20" height="20" fill="#d2a278"/><rect x="460" y="180" width="20" height="20" fill="#d2a279"/><rect x="480" y="180" width="20" height="20" fill="#d2a37a"/><rect x="500" y="180" width="20" height="20" fill="#d3a47b"/><rect x="520" y="180" width="20" height="20" fill="#d4a67c"/><rect x="540" y="180" width="20" height="20" fill="#d4a67d"/><rect x="560" y="180" width="20" height="20" fill="#d4a67c"/><rect x="580" y="180" width="20" height="20" fill="#d4a57c"/><rect x="600" y="180" width="20" height="20" fill="#d3a47b"/><rect x="620" y="180" width="20" height="20" fill="#d3a47a"/><rect x="640" y="180" width="20" height="20" fill="#d3a379"/><rect x="-20" y="200" width="20" height="20" fill="#d8a77c"/><rect x="0" y="200" width="20" height="20" fill="#d7a77b"/><rect x="20" y="200" width="20" height="20" fill="#d7a67b"/><rect x="40" y="200" width="20" height="20" fill="#d6a67a"/><rect x="60" y="200" width="20" height="20" fill="#d6a57a"/><rect x="80" y="200" width="20" height="20" fill="#d6a57a"/><rect x="100" y="200" width="20" height="20" fill="#d5a579"/><rect x="120" y="200" width="20" height="20" fill="#d5a479"/><rect x="140" y="200" width="20" height="20" fill="#d5a478"/><rect x="160" y="200" width="20" height="20" fill="#d4a378"/><rect x="180" y="200" width="20" height="20" fill="#d4a377"/><rect x="200" y="200" width="20" height="20" fill="#d3a277"/><rect x="220" y="200" width="20" height="20" fill="#d3a277"/><rect x="240" y="200" width="20" height="20" fill="#d2a176"/><rect x="260" y="200" width="20" height="20" fill="#d2a176"/><rect x="280" y="200" width="20" height="20" fill="#d1a075"/><rect x="300" y="200" width="20" height="20" fill="#d1a075"/><rect x="320" y="200" width="20" height="20" fill="#d09f75"/><rect x="340" y="200" width="20" height="20" fill="#d09f74"/><rect x="360" y="200" width="20" height="20" fill="#d09e74"/><rect x="380" y="200" width="20" height="20" fill="#cf9e74"/><rect x="400" y="200" width="20" height="20" fill="#cf9e74"/><rect x="420" y="200" width="20" height="20" fill="#cf9e74"/><rect x="440" y="200" width="20" height="20" fill="#cf9e74"/><rect x="460" y="200" width="20" height="20" fill="#cf9e75"/><rect x="480" y="200" width="20" height="20" fill="#cf9f76"/><rect x="500" y="200" width="20" height="20" fill="#d0a077"/><rect x="520" y="200" width="20" height="20" fill="#d1a178"/><rect x="540" y="200" width="20" height="20" fill="#d1a279"/><rect x="560" y="200" width="20" height="20" fill="#d1a279"/><rect x="580" y="200" width="20" height="20" fill="#d1a178"/><rect x="600" y="200" width="20" height="20" fill="#d0a077"/><rect x="620" y="200" width="20" height="20" fill="#d0a077"/><rect x="640" y="200" width="20" height="20" fill="#d09f76"/><rect x="-20" y="220" width="20" height="20" fill="#d4a277"/><rect x="0" y="220" width="20" height="20" fill="#d3a277"/><rect x="20" y="220" width="20" height="20" fill="#d3a177"/><rect x="40" y="220" width="20" height="20" fill="#d3a176"/><rect x="60" y="220" width="20" height="20" fill="#d2a076"/><rect x="80" y="220" width="20" height="20" fill="#d2a075"/><rect x="100" y="220" width="20" height="20" fill="#d1a075"/><rect x="120" y="220" width="20" height="20" fill="#d19f74"/><rect x="140" y="220" width="20" height="20" fill="#d19f74"/><rect x="160" y="220" width="20" height="20" fill="#d09e74"/><rect x="180" y="220" width="20" height="20" fill="#d09e73"/><rect x="200" y="220" width="20" height="20" fill="#cf9d73"/><rect x="220" y="220" width="20" height="20" fill="#cf9d72"/><rect x="240" y="220" width="20" height="20" fill="#cf9c72"/><rect x="260" y="220" width="20" height="20" fill="#ce9c72"/><rect x="280" y="220" width="20" height="20" fill="#ce9b71"/><rect x="300" y="220" width="20" height="20" fill="#cd9b71"/><rect x="320" y="220" width="20" height="20" fill="#cd9a71"/><rect x="340" y="220" width="20" height="20" fill="#cc9a70"/><rect x="360" y="220" width="20" height="20" fill="#cc9a70"/><rect x="380" y="220" width="20" height="20" fill="#cc9970"/><rect x="400" y="220" width="20" height="20" fill="#cb9970"/><rect x="420" y="220" width="20" height="20" fill="#cb9970"/><rect x="440" y="220" width="20" height="20" fill="#cb9970"/><rect x="460" y="220" width="20" height="20" fill="#cc9a71"/><rect x="480" y="220" width="20" height="20" fill="#cc9b72"/><rect x="500" y="220" width="20" height="20" fill="#cd9c73"/><rect x="520" y="220" width="20" height="20" fill="#cd9c74"/><rect x="540" y="220" width="20" height="20" fill="#ce9d74"/><rect x="560" y="220" width="20" height="20" fill="#ce9d74"/><rect x="580" y="220" width="20" height="20" fill="#ce9d74"/><rect x="600" y="220" width="20" height="20" fill="#cd9c73"/><rect x="620" y="220" width="20" height="20" fill="#cd9c73"/><rect x="640" y="220" width="20" height="20" fill="#cd9b72"/><rect x="-20" y="240" width="20" height="20" fill="#d09d73"/><rect x="0" y="240" width="20" height="20" fill="#d09d73"/><rect x="20" y="240" width="20" height="20" fill="#cf9c72"/><rect x="40" y="240" width="20" height="20" fill="#cf9c72"/><rect x="60" y="240" width="20" height="20" fill="#ce9c71"/><rect x="80" y="240" width="20" height="20" fill="#ce9b71"/><rect x="100" y="240" width="20" height="20" fill="#ce9b71"/><rect x="120" y="240" width="20" height="20" fill="#cd9a70"/><rect x="140" y="240" width="20" height="20" fill="#cd9a70"/><rect x="160" y="240" width="20" height="20" fill="#cc996f"/><rect x="180" y="240" width="20" height="20" fill="#cc996f"/><rect x="200" y="240" width="20" height="20" fill="#cc986e"/><rect x="220" y="240" width="20" height="20" fill="#cb986e"/><rect x="240" y="240" width="20" height="20" fill="#cb976e"/><rect x="260" y="240" width="20" height="20" fill="#ca976d"/><rect x="280" y="240" width="20" height="20" fill="#ca966d"/><rect x="300" y="240" width="20" height="20" fill="#ca966d"/><rect x="320" y="240" width="20" height="20" fill="#c9966c"/><rect x="340" y="240" width="20" height="20" fill="#c9956c"/><rect x="360" y="240" width="20" height="20" fill="#c9956c"/><rect x="380" y="240" width="20" height="20" fill="#c8956c"/><rect x="400" y="240" width="20" height="20" fill="#c8956c"/><rect x="420" y="240" width="20" height="20" fill="#c8956c"/><rect x="440" y="240" width="20" height="20" fill="#c8956d"/><rect x="460" y="240" width="20" height="20" fill="#c9966d"/><rect x="480" y="240" width="20" height="20" fill="#c9966e"/><rect x="500" y="240" width="20" height="20" fill="#ca976f"/><rect x="520" y="240" width="20" height="20" fill="#ca986f"/><rect x="540" y="240" width="20" height="20" fill="#ca9870"/><rect x="560" y="240" width="20" height="20" fill="#cb9870"/><rect x="580" y="240" width="20" height="20" fill="#ca9870"/><rect x="600" y="240" width="20" height="20" fill="#ca986f"/><rect x="620" y="240" width="20" height="20" fill="#ca976f"/><rect x="640" y="240" width="20" height="20" fill="#ca976e"/><rect x="-20" y="260" width="20" height="20" fill="#cc986f"/><rect x="0" y="260" width="20" height="20" fill="#cc986e"/><rect x="20" y="260" width="20" height="20" fill="#cb976e"/><rect x="40" y="260" width="20" height="20" fill="#cb976e"/><rect x="60" y="260" width="20" height="20" fill="#cb976d"/><rect x="80" y="260" width="20" height="20" fill="#ca966d"/><rect x="100" y="260" width="20" height="20" fill="#ca966c"/><rect x="120" y="260" width="20" height="20" fill="#c9956c"/><rect x="140" y="260" width="20" height="20" fill="#c9956b"/><rect x="160" y="260" width="20" height="20" fill="#c9946b"/><rect x="180" y="260" width="20" height="20" fill="#c8946b"/><rect x="200" y="260" width="20" height="20" fill="#c8936a"/><rect x="220" y="260" width="20" height="20" fill="#c8936a"/><rect x="240" y="260" width="20" height="20" fill="#c7936a"/><rect x="260" y="260" width="20" height="20" fill="#c79269"/><rect x="280" y="260" width="20" height="20" fill="#c69269"/><rect x="300" y="260" width="20" height="20" fill="#c69169"/><rect x="320" y="260" width="20" height="20" fill="#c69168"/><rect x="340" y="260" width="20" height="20" fill="#c59168"/><rect x="360" y="260" width="20" height="20" fill="#c59068"/><rect x="380" y="260" width="20" height="20" fill="#c59068"/><rect x="400" y="260" width="20" height="20" fill="#c59068"/><rect x="420" y="260" width="20" height="20" fill="#c59068"/><rect x="440" y="260" width="20" height="20" fill="#c59169"/><rect x="460" y="260" width="20" height="20" fill="#c59169"/><rect x="480" y="260" width="20" height="20" fill="#c6926a"/><rect x="500" y="260" width="20" height="20" fill="#c6926b"/><rect x="520" y="260" width="20" height="20" fill="#c7936b"/><rect x="540" y="260" width="20" height="20" fill="#c7936c"/><rect x="560" y="260" width="20" height="20" fill="#c7936c"/><rect x="580" y="260" width="20" height="20" fill="#c7936c"/><rect x="600" y="260" width="20" height="20" fill="#c7936b"/><rect x="620" y="260" width="20" height="20" fill="#c7936b"/><rect x="640" y="260" width="20" height="20" fill="#c6926a"/><rect x="-20" y="280" width="20" height="20" fill="#c8936b"/><rect x="0" y="280" width="20" height="20" fill="#c8936a"/><rect x="20" y="280" width="20" height="20" fill="#c8936a"/><rect x="40" y="280" width="20" height="20" fill="#c79269"/><rect x="60" y="280" width="20" height="20" fill="#c79269"/><rect x="80" y="280" width="20" height="20" fill="#c69168"/><rect x="100" y="280" width="20" height="20" fill="#c69168"/><rect x="120" y="280" width="20" height="20" fill="#c69068"/><rect x="140" y="280" width="20" height="20" fill="#c59067"/><rect x="160" y="280" width="20" height="20" fill="#c58f67"/><rect x="180" y="280" width="20" height="20" fill="#c58f67"/><rect x="200" y="280" width="20" height="20" fill="#c48f66"/><rect x="220" y="280" width="20" height="20" fill="#c48e66"/><rect x="240" y="280" width="20" height="20" fill="#c38e65"/><rect x="260" y="280" width="20" height="20" fill="#c38d65"/><rect x="280" y="280" width="20" height="20" fill="#c38d65"/><rect x="300" y="280" width="20" height="20" fill="#c28d65"/><rect x="320" y="280" width="20" height="20" fill="#c28c64"/><rect x="340" y="280" width="20" height="20" fill="#c28c64"/><rect x="360" y="280" width="20" height="20" fill="#c28c64"/><rect x="380" y="280" width="20" height="20" fill="#c28c64"/><rect x="400" y="280" width="20" height="20" fill="#c28c64"/><rect x="420" y="280" width="20" height="20" fill="#c28c65"/><rect x="440" y="280" width="20" height="20" fill="#c28c65"/><rect x="460" y="280" width="20" height="20" fill="#c28d65"/><rect x="480" y="280" width="20" height="20" fill="#c28d66"/><rect x="500" y="280" width="20" height="20" fill="#c38e66"/><rect x="520" y="280" width="20" height="20" fill="#c38e67"/><rect x="540" y="280" width="20" height="20" fill="#c38e67"/><rect x="560" y="280" width="20" height="20" fill="#c48f67"/><rect x="580" y="280" width="20" height="20" fill="#c48f67"/><rect x="600" y="280" width="20" height="20" fill="#c38e67"/><rect x="620" y="280" width="20" height="20" fill="#c38e67"/><rect x="640" y="280" width="20" height="20" fill="#c38e66"/><rect x="-20" y="300" width="20" height="20" fill="#c58e66"/><rect x="0" y="300" width="20" height="20" fill="#c48e66"/><rect x="20" y="300" width="20" height="20" fill="#c48e65"/><rect x="40" y="300" width="20" height="20" fill="#c38d65"/><rect x="60" y="300" width="20" height="20" fill="#c38d65"/><rect x="80" y="300" width="20" height="20" fill="#c38c64"/><rect x="100" y="300" width="20" height="20" fill="#c28c64"/><rect x="120" y="300" width="20" height="20" fill="#c28b63"/><rect x="140" y="300" width="20" height="20" fill="#c28b63"/><rect x="160" y="300" width="20" height="20" fill="#c18b63"/><rect x="180" y="300" width="20" height="20" fill="#c18a62"/><rect x="200" y="300" width="20" height="20" fill="#c18a62"/><rect x="220" y="300" width="20" height="20" fill="#c08962"/><rect x="240" y="300" width="20" height="20" fill="#c08961"/><rect x="260" y="300" width="20" height="20" fill="#c08961"/><rect x="280" y="300" width="20" height="20" fill="#bf8861"/><rect x="300" y="300" width="20" height="20" fill="#bf8861"/><rect x="320" y="300" width="20" height="20" fill="#bf8860"/><rect x="340" y="300" width="20" height="20" fill="#be8860"/><rect x="360" y="300" width="20" height="20" fill="#be8760"/><rect x="380" y="300" width="20" height="20" fill="#be8760"/><rect x="400" y="300" width="20" height="20" fill="#be8760"/><rect x="420" y="300" width="20" height="20" fill="#be8861"/><rect x="440" y="300" width="20" height="20" fill="#be8861"/><rect x="460" y="300" width="20" height="20" fill="#bf8861"/><rect x="480" y="300" width="20" height="20" fill="#bf8962"/><rect x="500" y="300" width="20" height="20" fill="#bf8962"/><rect x="520" y="300" width="20" height="20" fill="#c08963"/><rect x="540" y="300" width="20" height="20" fill="#c08a63"/><rect x="560" y="300" width="20" height="20" fill="#c08a63"/><rect x="580" y="300" width="20" height="20" fill="#c08a63"/><rect x="600" y="300" width="20" height="20" fill="#c08a63"/><rect x="620" y="300" width="20" height="20" fill="#c08962"/><rect x="640" y="300" width="20" height="20" fill="#c08962"/><rect x="-20" y="320" width="20" height="20" fill="#c18a62"/><rect x="0" y="320" width="20" height="20" fill="#c08962"/><rect x="20" y="320" width="20" height="20" fill="#c08961"/><rect x="40" y="320" width="20" height="20" fill="#c08861"/><rect x="60" y="320" width="20" height="20" fill="#bf8860"/><rect x="80" y="320" width="20" height="20" fill="#bf8760"/><rect x="100" y="320" width="20" height="20" fill="#bf8760"/><rect x="120" y="320" width="20" height="20" fill="#be875f"/><rect x="140" y="320" width="20" height="20" fill="#be865f"/><rect x="160" y="320" width="20" height="20" fill="#be865f"/><rect x="180" y="320" width="20" height="20" fill="#bd855e"/><rect x="200" y="320" width="20" height="20" fill="#bd855e"/><rect x="220" y="320" width="20" height="20" fill="#bd855e"/><rect x="240" y="320" width="20" height="20" fill="#bc845d"/><rect x="260" y="320" width="20" height="20" fill="#bc845d"/><rect x="280" y="320" width="20" height="20" fill="#bc845d"/><rect x="300" y="320" width="20" height="20" fill="#bb835d"/><rect x="320" y="320" width="20" height="20" fill="#bb835c"/><rect x="340" y="320" width="20" height="20" fill="#bb835c"/><rect x="360" y="320" width="20" height="20" fill="#bb835c"/><rect x="380" y="320" width="20" height="20" fill="#bb835c"/><rect x="400" y="320" width="20" height="20" fill="#bb835d"/><rect x="420" y="320" width="20" height="20" fill="#bb835d"/><rect x="440" y="320" width="20" height="20" fill="#bb835d"/><rect x="460" y="320" width="20" height="20" fill="#bb845d"/><rect x="480" y="320" width="20" height="20" fill="#bc845e"/><rect x="500" y="320" width="20" height="20" fill="#bc845e"/><rect x="520" y="320" width="20" height="20" fill="#bc855e"/><rect x="540" y="320" width="20" height="20" fill="#bc855f"/><rect x="560" y="320" width="20" height="20" fill="#bc855f"/><rect x="580" y="320" width="20" height="20" fill="#bc855f"/><rect x="600" y="320" width="20" height="20" fill="#bc855f"/><rect x="620" y="320" width="20" height="20" fill="#bc845e"/><rect x="640" y="320" width="20" height="20" fill="#bc845e"/><rect x="-20" y="340" width="20" height="20" fill="#bd855e"/><rect x="0" y="340" width="20" height="20" fill="#bd845d"/><rect x="20" y="340" width="20" height="20" fill="#bc845d"/><rect x="40" y="340" width="20" height="20" fill="#bc835d"/><rect x="60" y="340" width="20" height="20" fill="#bc835c"/><rect x="80" y="340" width="20" height="20" fill="#bb835c"/><rect x="100" y="340" width="20" height="20" fill="#bb825c"/><rect x="120" y="340" width="20" height="20" fill="#bb825b"/><rect x="140" y="340" width="20" height="20" fill="#ba815b"/><rect x="160" y="340" width="20" height="20" fill="#ba815a"/><rect x="180" y="340" width="20" height="20" fill="#ba815a"/><rect x="200" y="340" width="20" height="20" fill="#b9805a"/><rect x="220" y="340" width="20" height="20" fill="#b9805a"/><rect x="240" y="340" width="20" height="20" fill="#b98059"/><rect x="260" y="340" width="20" height="20" fill="#b87f59"/><rect x="280" y="340" width="20" height="20" fill="#b87f59"/><rect x="300" y="340" width="20" height="20" fill="#b87f59"/><rect x="320" y="340" width="20" height="20" fill="#b87f59"/><rect x="340" y="340" width="20" height="20" fill="#b87e58"/><rect x="360" y="340" width="20" height="20" fill="#b87e58"/><rect x="380" y="340" width="20" height="20" fill="#b87e59"/><rect x="400" y="340" width="20" height="20" fill="#b87e59"/><rect x="420" y="340" width="20" height="20" fill="#b87f59"/><rect x="440" y="340" width="20" height="20" fill="#b87f59"/><rect x="460" y="340" width="20" height="20" fill="#b87f59"/><rect x="480" y="340" width="20" height="20" fill="#b87f5a"/><rect x="500" y="340" width="20" height="20" fill="#b8805a"/><rect x="520" y="340" width="20" height="20" fill="#b9805a"/><rect x="540" y="340" width="20" height="20" fill="#b9805a"/><rect x="560" y="340" width="20" height="20" fill="#b9805a"/><rect x="580" y="340" width="20" height="20" fill="#b9805a"/><rect x="600" y="340" width="20" height="20" fill="#b9805a"/><rect x="620" y="340" width="20" height="20" fill="#b9805a"/><rect x="640" y="340" width="20" height="20" fill="#b87f5a"/><rect x="-20" y="360" width="20" height="20" fill="#b9805a"/><rect x="0" y="360" width="20" height="20" fill="#b97f59"/><rect x="20" y="360" width="20" height="20" fill="#b97f59"/><rect x="40" y="360" width="20" height="20" fill="#b87f58"/><rect x="60" y="360" width="20" height="20" fill="#b87e58"/><rect x="80" y="360" width="20" height="20" fill="#b87e58"/><rect x="100" y="360" width="20" height="20" fill="#b77d57"/><rect x="120" y="360" width="20" height="20" fill="#b77d57"/><rect x="140" y="360" width="20" height="20" fill="#b77d57"/><rect x="160" y="360" width="20" height="20" fill="#b67c56"/><rect x="180" y="360" width="20" height="20" fill="#b67c56"/><rect x="200" y="360" width="20" height="20" fill="#b67c56"/><rect x="220" y="360" width="20" height="20" fill="#b57b55"/><rect x="240" y="360" width="20" height="20" fill="#b57b55"/><rect x="260" y="360" width="20" height="20" fill="#b57b55"/><rect x="280" y="360" width="20" height="20" fill="#b57a55"/><rect x="300" y="360" width="20" height="20" fill="#b47a55"/><rect x="320" y="360" width="20" height="20" fill="#b47a55"/><rect x="340" y="360" width="20" height="20" fill="#b47a55"/><rect x="360" y="360" width="20" height="20" fill="#b47a55"/><rect x="380" y="360" width="20" height="20" fill="#b47a55"/><rect x="400" y="360" width="20" height="20" fill="#b47a55"/><rect x="420" y="360" width="20" height="20" fill="#b47a55"/><rect x="440" y="360" width="20" height="20" fill="#b47a55"/><rect x="460" y="360" width="20" height="20" fill="#b47a55"/><rect x="480" y="360" width="20" height="20" fill="#b57b56"/><rect x="500" y="360" width="20" height="20" fill="#b57b56"/><rect x="520" y="360" width="20" height="20" fill="#b57b56"/><rect x="540" y="360" width="20" height="20" fill="#b57b56"/><rect x="560" y="360" width="20" height="20" fill="#b57b56"/><rect x="580" y="360" width="20" height="20" fill="#b57b56"/><rect x="600" y="360" width="20" height="20" fill="#b57b56"/><rect x="620" y="360" width="20" height="20" fill="#b57b56"/><rect x="640" y="360" width="20" height="20" fill="#b57b55"/><rect x="-20" y="380" width="20" height="20" fill="#b67b55"/><rect x="0" y="380" width="20" height="20" fill="#b57b55"/><rect x="20" y="380" width="20" height="20" fill="#b57a55"/><rect x="40" y="380" width="20" height="20" fill="#b57a54"/><rect x="60" y="380" width="20" height="20" fill="#b47954"/><rect x="80" y="380" width="20" height="20" fill="#b47954"/><rect x="100" y="380" width="20" height="20" fill="#b47953"/><rect x="120" y="380" width="20" height="20" fill="#b37853"/><rect x="140" y="380" width="20" height="20" fill="#b37853"/><rect x="160" y="380" width="20" height="20" fill="#b37752"/><rect x="180" y="380" width="20" height="20" fill="#b27752"/><rect x="200" y="380" width="20" height="20" fill="#b27752"/><rect x="220" y="380" width="20" height="20" fill="#b27651"/><rect x="240" y="380" width="20" height="20" fill="#b27651"/><rect x="260" y="380" width="20" height="20" fill="#b17651"/><rect x="280" y="380" width="20" height="20" fill="#b17651"/><rect x="300" y="380" width="20" height="20" fill="#b17651"/><rect x="320" y="380" width="20" height="20" fill="#b17551"/><rect x="340" y="380" width="20" height="20" fill="#b17551"/><rect x="360" y="380" width="20" height="20" fill="#b17551"/><rect x="380" y="380" width="20" height="20" fill="#b17551"/><rect x="400" y="380" width="20" height="20" fill="#b17551"/><rect x="420" y="380" width="20" height="20" fill="#b17551"/><rect x="440" y="380" width="20" height="20" fill="#b17651"/><rect x="460" y="380" width="20" height="20" fill="#b17651"/><rect x="480" y="380" width="20" height="20" fill="#b17651"/><rect x="500" y="380" width="20" height="20" fill="#b17652"/><rect x="520" y="380" width="20" height="20" fill="#b17652"/><rect x="540" y="380" width="20" height="20" fill="#b17652"/><rect x="560" y="380" width="20" height="20" fill="#b27652"/><rect x="580" y="380" width="20" height="20" fill="#b27652"/><rect x="600" y="380" width="20" height="20" fill="#b17652"/><rect x="620" y="380" width="20" height="20" fill="#b17651"/><rect x="640" y="380" width="20" height="20" fill="#b17651"/><rect x="-20" y="400" width="20" height="20" fill="#b27651"/><rect x="0" y="400" width="20" height="20" fill="#b27651"/><rect x="20" y="400" width="20" height="20" fill="#b17550"/><rect x="40" y="400" width="20" height="20" fill="#b17550"/><rect x="60" y="400" width="20" height="20" fill="#b17550"/><rect x="80" y="400" width="20" height="20" fill="#b0744f"/><rect x="100" y="400" width="20" height="20" fill="#b0744f"/><rect x="120" y="400" width="20" height="20" fill="#b0734f"/><rect x="140" y="400" width="20" height="20" fill="#af734e"/><rect x="160" y="400" width="20" height="20" fill="#af734e"/><rect x="180" y="400" width="20" height="20" fill="#af724e"/><rect x="200" y="400" width="20" height="20" fill="#af724e"/><rect x="220" y="400" width="20" height="20" fill="#ae724d"/><rect x="240" y="400" width="20" height="20" fill="#ae724d"/><rect x="260" y="400" width="20" height="20" fill="#ae714d"/><rect x="280" y="400" width="20" height="20" fill="#ae714d"/><rect x="300" y="400" width="20" height="20" fill="#ae714d"/><rect x="320" y="400" width="20" height="20" fill="#ad714d"/><rect x="340" y="400" width="20" height="20" fill="#ad714d"/><rect x="360" y="400" width="20" height="20" fill="#ad714d"/><rect x="380" y="400" width="20" height="20" fill="#ad714d"/><rect x="400" y="400" width="20" height="20" fill="#ad714d"/><rect x="420" y="400" width="20" height="20" fill="#ad714d"/><rect x="440" y="400" width="20" height="20" fill="#ad714d"/><rect x="460" y="400" width="20" height="20" fill="#ad714d"/><rect x="480" y="400" width="20" height="20" fill="#ae714d"/><rect x="500" y="400" width="20" height="20" fill="#ae714d"/><rect x="520" y="400" width="20" height="20" fill="#ae714d"/><rect x="540" y="400" width="20" height="20" fill="#ae714e"/><rect x="560" y="400" width="20" height="20" fill="#ae714e"/><rect x="580" y="400" width="20" height="20" fill="#ae714e"/><rect x="600" y="400" width="20" height="20" fill="#ae714d"/><rect x="620" y="400" width="20" height="20" fill="#ae714d"/><rect x="640" y="400" width="20" height="20" fill="#ae714d"/><rect x="-20" y="420" width="20" height="20" fill="#ae714d"/><rect x="0" y="420" width="20" height="20" fill="#ae714d"/><rect x="20" y="420" width="20" height="20" fill="#ae704c"/><rect x="40" y="420" width="20" height="20" fill="#ad704c"/><rect x="60" y="420" width="20" height="20" fill="#ad704c"/><rect x="80" y="420" width="20" height="20" fill="#ad6f4b"/><rect x="100" y="420" width="20" height="20" fill="#ac6f4b"/><rect x="120" y="420" width="20" height="20" fill="#ac6f4b"/><rect x="140" y="420" width="20" height="20" fill="#ac6e4a"/><rect x="160" y="420" width="20" height="20" fill="#ab6e4a"/><rect x="180" y="420" width="20" height="20" fill="#ab6e4a"/><rect x="200" y="420" width="20" height="20" fill="#ab6d4a"/><rect x="220" y="420" width="20" height="20" fill="#ab6d49"/><rect x="240" y="420" width="20" height="20" fill="#ab6d49"/><rect x="260" y="420" width="20" height="20" fill="#aa6d49"/><rect x="280" y="420" width="20" height="20" fill="#aa6c49"/><rect x="300" y="420" width="20" height="20" fill="#aa6c49"/><rect x="320" y="420" width="20" height="20" fill="#aa6c49"/><rect x="340" y="420" width="20" height="20" fill="#aa6c49"/><rect x="360" y="420" width="20" height="20" fill="#aa6c49"/><rect x="380" y="420" width="20" height="20" fill="#aa6c49"/><rect x="400" y="420" width="20" height="20" fill="#aa6c49"/><rect x="420" y="420" width="20" height="20" fill="#aa6c49"/><rect x="440" y="420" width="20" height="20" fill="#aa6c49"/><rect x="460" y="420" width="20" height="20" fill="#aa6c49"/><rect x="480" y="420" width="20" height="20" fill="#aa6c49"/><rect x="500" y="420" width="20" height="20" fill="#aa6d49"/><rect x="520" y="420" width="20" height="20" fill="#aa6d49"/><rect x="540" y="420" width="20" height="20" fill="#aa6d49"/><rect x="560" y="420" width="20" height="20" fill="#aa6d49"/><rect x="580" y="420" width="20" height="20" fill="#aa6d49"/><rect x="600" y="420" width="20" height="20" fill="#aa6c49"/><rect x="620" y="420" width="20" height="20" fill="#aa6c49"/><rect x="640" y="420" width="20" height="20" fill="#aa6c49"/><rect x="-20" y="440" width="20" height="20" fill="#aa6c49"/><rect x="0" y="440" width="20" height="20" fill="#aa6c49"/><rect x="20" y="440" width="20" height="20" fill="#aa6c48"/><rect x="40" y="440" width="20" height="20" fill="#aa6b48"/><rect x="60" y="440" width="20" height="20" fill="#a96b48"/><rect x="80" y="440" width="20" height="20" fill="#a96b47"/><rect x="100" y="440" width="20" height="20" fill="#a96a47"/><rect x="120" y="440" width="20" height="20" fill="#a86a47"/><rect x="140" y="440" width="20" height="20" fill="#a86a46"/><rect x="160" y="440" width="20" height="20" fill="#a86946"/><rect x="180" y="440" width="20" height="20" fill="#a86946"/><rect x="200" y="440" width="20" height="20" fill="#a76946"/><rect x="220" y="440" width="20" height="20" fill="#a76845"/><rect x="240" y="440" width="20" height="20" fill="#a76845"/><rect x="260" y="440" width="20" height="20" fill="#a76845"/><rect x="280" y="440" width="20" height="20" fill="#a76845"/><rect x="300" y="440" width="20" height="20" fill="#a76845"/><rect x="320" y="440" width="20" height="20" fill="#a66845"/><rect x="340" y="440" width="20" height="20" fill="#a66745"/><rect x="360" y="440" width="20" height="20" fill="#a66745"/><rect x="380" y="440" width="20" height="20" fill="#a66745"/><rect x="400" y="440" width="20" height="20" fill="#a66745"/><rect x="420" y="440" width="20" height="20" fill="#a66845"/><rect x="440" y="440" width="20" height="20" fill="#a66845"/><rect x="460" y="440" width="20" height="20" fill="#a66845"/><rect x="480" y="440" width="20" height="20" fill="#a66845"/><rect x="500" y="440" width="20" height="20" fill="#a76845"/><rect x="520" y="440" width="20" height="20" fill="#a76845"/><rect x="540" y="440" width="20" height="20" fill="#a76845"/><rect x="560" y="440" width="20" height="20" fill="#a76845"/><rect x="580" y="440" width="20" height="20" fill="#a76845"/><rect x="600" y="440" width="20" height="20" fill="#a76845"/><rect x="620" y="440" width="20" height="20" fill="#a66745"/><rect x="640" y="440" width="20" height="20" fill="#a66744"/><rect x="-20" y="460" width="20" height="20" fill="#a76845"/><rect x="0" y="460" width="20" height="20" fill="#a66744"/><rect x="20" y="460" width="20" height="20" fill="#a66744"/><rect x="40" y="460" width="20" height="20" fill="#a66744"/><rect x="60" y="460" width="20" height="20" fill="#a66643"/><rect x="80" y="460" width="20" height="20" fill="#a56643"/><rect x="100" y="460" width="20" height="20" fill="#a56643"/><rect x="120" y="460" width="20" height="20" fill="#a56542"/><rect x="140" y="460" width="20" height="20" fill="#a56542"/><rect x="160" y="460" width="20" height="20" fill="#a46542"/><rect x="180" y="460" width="20" height="20" fill="#a46442"/><rect x="200" y="460" width="20" height="20" fill="#a46441"/><rect x="220" y="460" width="20" height="20" fill="#a46441"/><rect x="240" y="460" width="20" height="20" fill="#a36441"/><rect x="260" y="460" width="20" height="20" fill="#a36341"/><rect x="280" y="460" width="20" height="20" fill="#a36341"/><rect x="300" y="460" width="20" height="20" fill="#a36341"/><rect x="320" y="460" width="20" height="20" fill="#a36341"/><rect x="340" y="460" width="20" height="20" fill="#a36341"/><rect x="360" y="460" width="20" height="20" fill="#a36341"/><rect x="380" y="460" width="20" height="20" fill="#a36341"/><rect x="400" y="460" width="20" height="20" fill="#a36341"/><rect x="420" y="460" width="20" height="20" fill="#a36341"/><rect x="440" y="460" width="20" height="20" fill="#a36341"/><rect x="460" y="460" width="20" height="20" fill="#a36341"/><rect x="480" y="460" width="20" height="20" fill="#a36341"/><rect x="500" y="460" width="20" height="20" fill="#a36341"/><rect x="520" y="460" width="20" height="20" fill="#a36341"/><rect x="540" y="460" width="20" height="20" fill="#a36341"/><rect x="560" y="460" width="20" height="20" fill="#a36341"/><rect x="580" y="460" width="20" height="20" fill="#a36341"/><rect x="600" y="460" width="20" height="20" fill="#a36341"/><rect x="620" y="460" width="20" height="20" fill="#a36340"/><rect x="640" y="460" width="20" height="20" fill="#a36240"/><rect x="-20" y="480" width="20" height="20" fill="#a36341"/><rect x="0" y="480" width="20" height="20" fill="#a36240"/><rect x="20" y="480" width="20" height="20" fill="#a36240"/><rect x="40" y="480" width="20" height="20" fill="#a26240"/><rect x="60" y="480" width="20" height="20" fill="#a2613f"/><rect x="80" y="480" width="20" height="20" fill="#a2613f"/><rect x="100" y="480" width="20" height="20" fill="#a1613f"/><rect x="120" y="480" width="20" height="20" fill="#a1603e"/><rect x="140" y="480" width="20" height="20" fill="#a1603e"/><rect x="160" y="480" width="20" height="20" fill="#a1603e"/><rect x="180" y="480" width="20" height="20" fill="#a0603e"/><rect x="200" y="480" width="20" height="20" fill="#a05f3d"/><rect x="220" y="480" width="20" height="20" fill="#a05f3d"/><rect x="240" y="480" width="20" height="20" fill="#a05f3d"/><rect x="260" y="480" width="20" height="20" fill="#a05f3d"/><rect x="280" y="480" width="20" height="20" fill="#a05f3d"/><rect x="300" y="480" width="20" height="20" fill="#9f5e3d"/><rect x="320" y="480" width="20" height="20" fill="#9f5e3d"/><rect x="340" y="480" width="20" height="20" fill="#9f5e3d"/><rect x="360" y="480" width="20" height="20" fill="#9f5e3c"/><rect x="380" y="480" width="20" height="20" fill="#9f5e3c"/><rect x="400" y="480" width="20" height="20" fill="#9f5e3d"/><rect x="420" y="480" width="20" height="20" fill="#9f5e3d"/><rect x="440" y="480" width="20" height="20" fill="#9f5e3d"/><rect x="460" y="480" width="20" height="20" fill="#9f5e3d"/><rect x="480" y="480" width="20" height="20" fill="#9f5e3d"/><rect x="500" y="480" width="20" height="20" fill="#9f5e3d"/><rect x="520" y="480" width="20" height="20" fill="#9f5e3d"/><rect x="540" y="480" width="20" height="20" fill="#9f5e3d"/><rect x="560" y="480" width="20" height="20" fill="#9f5e3d"/><rect x="580" y="480" width="20" height="20" fill="#9f5e3c"/><rect x="600" y="480" width="20" height="20" fill="#9f5e3c"/><rect x="620" y="480" width="20" height="20" fill="#9f5e3c"/><rect x="640" y="480" width="20" height="20" fill="#9f5e3c"/><rect x="-20" y="500" width="20" height="20" fill="#9f5e3c"/><rect x="0" y="500" width="20" height="20" fill="#9f5e3c"/><rect x="20" y="500" width="20" height="20" fill="#9f5d3c"/><rect x="40" y="500" width="20" height="20" fill="#9f5d3b"/><rect x="60" y="500" width="20" height="20" fill="#9e5d3b"/><rect x="80" y="500" width="20" height="20" fill="#9e5c3b"/><rect x="100" y="500" width="20" height="20" fill="#9e5c3b"/><rect x="120" y="500" width="20" height="20" fill="#9e5c3a"/><rect x="140" y="500" width="20" height="20" fill="#9d5b3a"/><rect x="160" y="500" width="20" height="20" fill="#9d5b3a"/><rect x="180" y="500" width="20" height="20" fill="#9d5b3a"/><rect x="200" y="500" width="20" height="20" fill="#9d5b39"/><rect x="220" y="500" width="20" height="20" fill="#9d5a39"/><rect x="240" y="500" width="20" height="20" fill="#9c5a39"/><rect x="260" y="500" width="20" height="20" fill="#9c5a39"/><rect x="280" y="500" width="20" height="20" fill="#9c5a39"/><rect x="300" y="500" width="20" height="20" fill="#9c5a39"/><rect x="320" y="500" width="20" height="20" fill="#9c5a39"/><rect x="340" y="500" width="20" height="20" fill="#9c5a38"/><rect x="360" y="500" width="20" height="20" fill="#9c5a38"/><rect x="380" y="500" width="20" height="20" fill="#9c5938"/><rect x="400" y="500" width="20" height="20" fill="#9c5938"/><rect x="420" y="500" width="20" height="20" fill="#9c5938"/><rect x="440" y="500" width="20" height="20" fill="#9c5938"/><rect x="460" y="500" width="20" height="20" fill="#9c5938"/><rect x="480" y="500" width="20" height="20" fill="#9c5938"/><rect x="500" y="500" width="20" height="20" fill="#9c5938"/><rect x="520" y="500" width="20" height="20" fill="#9c5938"/><rect x="540" y="500" width="20" height="20" fill="#9c5938"/><rect x="560" y="500" width="20" height="20" fill="#9c5938"/><rect x="580" y="500" width="20" height="20" fill="#9c5938"/><rect x="600" y="500" width="20" height="20" fill="#9c5938"/><rect x="620" y="500" width="20" height="20" fill="#9b5938"/><rect x="640" y="500" width="20" height="20" fill="#9b5938"/></g></g><g clip-path="url(#cR)"><g filter="url(#wb)"><rect x="-20" y="-40" width="20" height="20" fill="#fffffb"/><rect x="0" y="-40" width="20" height="20" fill="#fffff8"/><rect x="20" y="-40" width="20" height="20" fill="#fffff5"/><rect x="40" y="-40" width="20" height="20" fill="#fffff2"/><rect x="60" y="-40" width="20" height="20" fill="#fffff0"/><rect x="80" y="-40" width="20" height="20" fill="#ffffed"/><rect x="100" y="-40" width="20" height="20" fill="#ffffea"/><rect x="120" y="-40" width="20" height="20" fill="#ffffe7"/><rect x="140" y="-40" width="20" height="20" fill="#ffffe4"/><rect x="160" y="-40" width="20" height="20" fill="#ffffe1"/><rect x="180" y="-40" width="20" height="20" fill="#ffffdf"/><rect x="200" y="-40" width="20" height="20" fill="#ffffdc"/><rect x="220" y="-40" width="20" height="20" fill="#ffffd9"/><rect x="240" y="-40" width="20" height="20" fill="#ffffd6"/><rect x="260" y="-40" width="20" height="20" fill="#ffffd3"/><rect x="280" y="-40" width="20" height="20" fill="#ffffd0"/><rect x="300" y="-40" width="20" height="20" fill="#ffffcd"/><rect x="320" y="-40" width="20" height="20" fill="#fffecb"/><rect x="340" y="-40" width="20" height="20" fill="#fffbc8"/><rect x="360" y="-40" width="20" height="20" fill="#fff8c5"/><rect x="380" y="-40" width="20" height="20" fill="#fff5c2"/><rect x="400" y="-40" width="20" height="20" fill="#fff2c0"/><rect x="420" y="-40" width="20" height="20" fill="#ffefbd"/><rect x="440" y="-40" width="20" height="20" fill="#ffedba"/><rect x="460" y="-40" width="20" height="20" fill="#ffeab8"/><rect x="480" y="-40" width="20" height="20" fill="#ffe7b5"/><rect x="500" y="-40" width="20" height="20" fill="#ffe4b3"/><rect x="520" y="-40" width="20" height="20" fill="#ffe2b0"/><rect x="540" y="-40" width="20" height="20" fill="#ffdfae"/><rect x="560" y="-40" width="20" height="20" fill="#ffddac"/><rect x="580" y="-40" width="20" height="20" fill="#ffdaa9"/><rect x="600" y="-40" width="20" height="20" fill="#ffd8a7"/><rect x="620" y="-40" width="20" height="20" fill="#ffd5a5"/><rect x="640" y="-40" width="20" height="20" fill="#fdd3a3"/><rect x="-20" y="-20" width="20" height="20" fill="#fffff6"/><rect x="0" y="-20" width="20" height="20" fill="#fffff3"/><rect x="20" y="-20" width="20" height="20" fill="#fffff0"/><rect x="40" y="-20" width="20" height="20" fill="#ffffee"/><rect x="60" y="-20" width="20" height="20" fill="#ffffeb"/><rect x="80" y="-20" width="20" height="20" fill="#ffffe8"/><rect x="100" y="-20" width="20" height="20" fill="#ffffe5"/><rect x="120" y="-20" width="20" height="20" fill="#ffffe2"/><rect x="140" y="-20" width="20" height="20" fill="#ffffe0"/><rect x="160" y="-20" width="20" height="20" fill="#ffffdd"/><rect x="180" y="-20" width="20" height="20" fill="#ffffda"/><rect x="200" y="-20" width="20" height="20" fill="#ffffd7"/><rect x="220" y="-20" width="20" height="20" fill="#ffffd4"/><rect x="240" y="-20" width="20" height="20" fill="#ffffd1"/><rect x="260" y="-20" width="20" height="20" fill="#ffffce"/><rect x="280" y="-20" width="20" height="20" fill="#fffecb"/><rect x="300" y="-20" width="20" height="20" fill="#fffbc8"/><rect x="320" y="-20" width="20" height="20" fill="#fff8c6"/><rect x="340" y="-20" width="20" height="20" fill="#fff5c3"/><rect x="360" y="-20" width="20" height="20" fill="#fff2c0"/><rect x="380" y="-20" width="20" height="20" fill="#ffefbd"/><rect x="400" y="-20" width="20" height="20" fill="#ffecbb"/><rect x="420" y="-20" width="20" height="20" fill="#ffeab8"/><rect x="440" y="-20" width="20" height="20" fill="#ffe7b5"/><rect x="460" y="-20" width="20" height="20" fill="#ffe4b3"/><rect x="480" y="-20" width="20" height="20" fill="#ffe1b0"/><rect x="500" y="-20" width="20" height="20" fill="#ffdfae"/><rect x="520" y="-20" width="20" height="20" fill="#ffdcab"/><rect x="540" y="-20" width="20" height="20" fill="#ffdaa9"/><rect x="560" y="-20" width="20" height="20" fill="#ffd7a6"/><rect x="580" y="-20" width="20" height="20" fill="#fed5a4"/><rect x="600" y="-20" width="20" height="20" fill="#fcd2a2"/><rect x="620" y="-20" width="20" height="20" fill="#fad0a0"/><rect x="640" y="-20" width="20" height="20" fill="#f8cd9d"/><rect x="-20" y="0" width="20" height="20" fill="#fffff1"/><rect x="0" y="0" width="20" height="20" fill="#ffffee"/><rect x="20" y="0" width="20" height="20" fill="#ffffec"/><rect x="40" y="0" width="20" height="20" fill="#ffffe9"/><rect x="60" y="0" width="20" height="20" fill="#ffffe6"/><rect x="80" y="0" width="20" height="20" fill="#ffffe3"/><rect x="100" y="0" width="20" height="20" fill="#ffffe0"/><rect x="120" y="0" width="20" height="20" fill="#ffffde"/><rect x="140" y="0" width="20" height="20" fill="#ffffdb"/><rect x="160" y="0" width="20" height="20" fill="#ffffd8"/><rect x="180" y="0" width="20" height="20" fill="#ffffd5"/><rect x="200" y="0" width="20" height="20" fill="#ffffd2"/><rect x="220" y="0" width="20" height="20" fill="#ffffcf"/><rect x="240" y="0" width="20" height="20" fill="#fffecc"/><rect x="260" y="0" width="20" height="20" fill="#fffbc9"/><rect x="280" y="0" width="20" height="20" fill="#fff8c6"/><rect x="300" y="0" width="20" height="20" fill="#fff5c3"/><rect x="320" y="0" width="20" height="20" fill="#fff2c1"/><rect x="340" y="0" width="20" height="20" fill="#ffefbe"/><rect x="360" y="0" width="20" height="20" fill="#ffecbb"/><rect x="380" y="0" width="20" height="20" fill="#ffeab8"/><rect x="400" y="0" width="20" height="20" fill="#ffe7b5"/><rect x="420" y="0" width="20" height="20" fill="#ffe4b3"/><rect x="440" y="0" width="20" height="20" fill="#ffe1b0"/><rect x="460" y="0" width="20" height="20" fill="#ffdead"/><rect x="480" y="0" width="20" height="20" fill="#ffdcab"/><rect x="500" y="0" width="20" height="20" fill="#ffd9a8"/><rect x="520" y="0" width="20" height="20" fill="#fed7a6"/><rect x="540" y="0" width="20" height="20" fill="#fcd4a4"/><rect x="560" y="0" width="20" height="20" fill="#fbd1a1"/><rect x="580" y="0" width="20" height="20" fill="#f9cf9f"/><rect x="600" y="0" width="20" height="20" fill="#f7cd9d"/><rect x="620" y="0" width="20" height="20" fill="#f5ca9b"/><rect x="640" y="0" width="20" height="20" fill="#f3c898"/><rect x="-20" y="20" width="20" height="20" fill="#ffffec"/><rect x="0" y="20" width="20" height="20" fill="#ffffea"/><rect x="20" y="20" width="20" height="20" fill="#ffffe7"/><rect x="40" y="20" width="20" height="20" fill="#ffffe4"/><rect x="60" y="20" width="20" height="20" fill="#ffffe1"/><rect x="80" y="20" width="20" height="20" fill="#ffffde"/><rect x="100" y="20" width="20" height="20" fill="#ffffdc"/><rect x="120" y="20" width="20" height="20" fill="#ffffd9"/><rect x="140" y="20" width="20" height="20" fill="#ffffd6"/><rect x="160" y="20" width="20" height="20" fill="#ffffd3"/><rect x="180" y="20" width="20" height="20" fill="#ffffd0"/><rect x="200" y="20" width="20" height="20" fill="#ffffcd"/><rect x="220" y="20" width="20" height="20" fill="#fffcca"/><rect x="240" y="20" width="20" height="20" fill="#fff9c7"/><rect x="260" y="20" width="20" height="20" fill="#fff6c4"/><rect x="280" y="20" width="20" height="20" fill="#fff3c1"/><rect x="300" y="20" width="20" height="20" fill="#fff0be"/><rect x="320" y="20" width="20" height="20" fill="#ffedbc"/><rect x="340" y="20" width="20" height="20" fill="#ffeab9"/><rect x="360" y="20" width="20" height="20" fill="#ffe7b6"/><rect x="380" y="20" width="20" height="20" fill="#ffe4b3"/><rect x="400" y="20" width="20" height="20" fill="#ffe1b0"/><rect x="420" y="20" width="20" height="20" fill="#ffdeae"/><rect x="440" y="20" width="20" height="20" fill="#ffdbab"/><rect x="460" y="20" width="20" height="20" fill="#ffd9a8"/><rect x="480" y="20" width="20" height="20" fill="#fdd6a6"/><rect x="500" y="20" width="20" height="20" fill="#fbd3a3"/><rect x="520" y="20" width="20" height="20" fill="#f9d1a1"/><rect x="540" y="20" width="20" height="20" fill="#f7ce9e"/><rect x="560" y="20" width="20" height="20" fill="#f6cc9c"/><rect x="580" y="20" width="20" height="20" fill="#f4c99a"/><rect x="600" y="20" width="20" height="20" fill="#f2c798"/><rect x="620" y="20" width="20" height="20" fill="#f0c496"/><rect x="640" y="20" width="20" height="20" fill="#efc293"/><rect x="-20" y="40" width="20" height="20" fill="#ffffe8"/><rect x="0" y="40" width="20" height="20" fill="#ffffe5"/><rect x="20" y="40" width="20" height="20" fill="#ffffe2"/><rect x="40" y="40" width="20" height="20" fill="#ffffdf"/><rect x="60" y="40" width="20" height="20" fill="#ffffdc"/><rect x="80" y="40" width="20" height="20" fill="#ffffda"/><rect x="100" y="40" width="20" height="20" fill="#ffffd7"/><rect x="120" y="40" width="20" height="20" fill="#ffffd4"/><rect x="140" y="40" width="20" height="20" fill="#ffffd1"/><rect x="160" y="40" width="20" height="20" fill="#ffffce"/><rect x="180" y="40" width="20" height="20" fill="#fffdcb"/><rect x="200" y="40" width="20" height="20" fill="#fff9c8"/><rect x="220" y="40" width="20" height="20" fill="#fff6c5"/><rect x="240" y="40" width="20" height="20" fill="#fff3c2"/><rect x="260" y="40" width="20" height="20" fill="#fff0bf"/><rect x="280" y="40" width="20" height="20" fill="#ffedbc"/><rect x="300" y="40" width="20" height="20" fill="#ffeab9"/><rect x="320" y="40" width="20" height="20" fill="#ffe7b6"/><rect x="340" y="40" width="20" height="20" fill="#ffe4b4"/><rect x="360" y="40" width="20" height="20" fill="#ffe1b1"/><rect x="380" y="40" width="20" height="20" fill="#ffdeae"/><rect x="400" y="40" width="20" height="20" fill="#ffdbab"/><rect x="420" y="40" width="20" height="20" fill="#fed9a8"/><rect x="440" y="40" width="20" height="20" fill="#fcd6a6"/><rect x="460" y="40" width="20" height="20" fill="#fad3a3"/><rect x="480" y="40" width="20" height="20" fill="#f8d0a1"/><rect x="500" y="40" width="20" height="20" fill="#f6ce9e"/><rect x="520" y="40" width="20" height="20" fill="#f4cb9c"/><rect x="540" y="40" width="20" height="20" fill="#f2c999"/><rect x="560" y="40" width="20" height="20" fill="#f1c697"/><rect x="580" y="40" width="20" height="20" fill="#efc495"/><rect x="600" y="40" width="20" height="20" fill="#edc193"/><rect x="620" y="40" width="20" height="20" fill="#ebbf90"/><rect x="640" y="40" width="20" height="20" fill="#eabd8e"/><rect x="-20" y="60" width="20" height="20" fill="#ffffe3"/><rect x="0" y="60" width="20" height="20" fill="#ffffe0"/><rect x="20" y="60" width="20" height="20" fill="#ffffdd"/><rect x="40" y="60" width="20" height="20" fill="#ffffdb"/><rect x="60" y="60" width="20" height="20" fill="#ffffd8"/><rect x="80" y="60" width="20" height="20" fill="#ffffd5"/><rect x="100" y="60" width="20" height="20" fill="#ffffd2"/><rect x="120" y="60" width="20" height="20" fill="#ffffcf"/><rect x="140" y="60" width="20" height="20" fill="#fffdcc"/><rect x="160" y="60" width="20" height="20" fill="#fffac9"/><rect x="180" y="60" width="20" height="20" fill="#fff7c6"/><rect x="200" y="60" width="20" height="20" fill="#fff4c3"/><rect x="220" y="60" width="20" height="20" fill="#fff1c0"/><rect x="240" y="60" width="20" height="20" fill="#ffeebd"/><rect x="260" y="60" width="20" height="20" fill="#ffebba"/><rect x="280" y="60" width="20" height="20" fill="#ffe8b7"/><rect x="300" y="60" width="20" height="20" fill="#ffe5b4"/><rect x="320" y="60" width="20" height="20" fill="#ffe2b1"/><rect x="340" y="60" width="20" height="20" fill="#ffdeae"/><rect x="360" y="60" width="20" height="20" fill="#ffdbac"/><rect x="380" y="60" width="20" height="20" fill="#fed9a9"/><rect x="400" y="60" width="20" height="20" fill="#fbd6a6"/><rect x="420" y="60" width="20" height="20" fill="#f9d3a3"/><rect x="440" y="60" width="20" height="20" fill="#f7d0a0"/><rect x="460" y="60" width="20" height="20" fill="#f5cd9e"/><rect x="480" y="60" width="20" height="20" fill="#f3cb9b"/><rect x="500" y="60" width="20" height="20" fill="#f1c899"/><rect x="520" y="60" width="20" height="20" fill="#efc596"/><rect x="540" y="60" width="20" height="20" fill="#edc394"/><rect x="560" y="60" width="20" height="20" fill="#ecc092"/><rect x="580" y="60" width="20" height="20" fill="#eabe90"/><rect x="600" y="60" width="20" height="20" fill="#e8bc8e"/><rect x="620" y="60" width="20" height="20" fill="#e6b98b"/><rect x="640" y="60" width="20" height="20" fill="#e5b789"/><rect x="-20" y="80" width="20" height="20" fill="#ffffde"/><rect x="0" y="80" width="20" height="20" fill="#ffffdb"/><rect x="20" y="80" width="20" height="20" fill="#ffffd9"/><rect x="40" y="80" width="20" height="20" fill="#ffffd6"/><rect x="60" y="80" width="20" height="20" fill="#ffffd3"/><rect x="80" y="80" width="20" height="20" fill="#ffffd0"/><rect x="100" y="80" width="20" height="20" fill="#fffecd"/><rect x="120" y="80" width="20" height="20" fill="#fffbca"/><rect x="140" y="80" width="20" height="20" fill="#fff8c7"/><rect x="160" y="80" width="20" height="20" fill="#fff5c4"/><rect x="180" y="80" width="20" height="20" fill="#fff2c1"/><rect x="200" y="80" width="20" height="20" fill="#ffefbe"/><rect x="220" y="80" width="20" height="20" fill="#ffebbb"/><rect x="240" y="80" width="20" height="20" fill="#ffe8b8"/><rect x="260" y="80" width="20" height="20" fill="#ffe5b5"/><rect x="280" y="80" width="20" height="20" fill="#ffe2b2"/><rect x="300" y="80" width="20" height="20" fill="#ffdfaf"/><rect x="320" y="80" width="20" height="20" fill="#ffdcac"/><rect x="340" y="80" width="20" height="20" fill="#fed9a9"/><rect x="360" y="80" width="20" height="20" fill="#fbd6a6"/><rect x="380" y="80" width="20" height="20" fill="#f9d3a3"/><rect x="400" y="80" width="20" height="20" fill="#f6d0a1"/><rect x="420" y="80" width="20" height="20" fill="#f4cd9e"/><rect x="440" y="80" width="20" height="20" fill="#f2ca9b"/><rect x="460" y="80" width="20" height="20" fill="#f0c799"/><rect x="480" y="80" width="20" height="20" fill="#eec596"/><rect x="500" y="80" width="20" height="20" fill="#ecc294"/><rect x="520" y="80" width="20" height="20" fill="#eac091"/><rect x="540" y="80" width="20" height="20" fill="#e8bd8f"/><rect x="560" y="80" width="20" height="20" fill="#e6bb8d"/><rect x="580" y="80" width="20" height="20" fill="#e5b88b"/><rect x="600" y="80" width="20" height="20" fill="#e3b688"/><rect x="620" y="80" width="20" height="20" fill="#e1b486"/><rect x="640" y="80" width="20" height="20" fill="#e0b184"/><rect x="-20" y="100" width="20" height="20" fill="#ffffd9"/><rect x="0" y="100" width="20" height="20" fill="#ffffd7"/><rect x="20" y="100" width="20" height="20" fill="#ffffd4"/><rect x="40" y="100" width="20" height="20" fill="#ffffd1"/><rect x="60" y="100" width="20" height="20" fill="#ffffce"/><rect x="80" y="100" width="20" height="20" fill="#fffccb"/><rect x="100" y="100" width="20" height="20" fill="#fff9c8"/><rect x="120" y="100" width="20" height="20" fill="#fff6c5"/><rect x="140" y="100" width="20" height="20" fill="#fff3c3"/><rect x="160" y="100" width="20" height="20" fill="#ffefc0"/><rect x="180" y="100" width="20" height="20" fill="#ffecbd"/><rect x="200" y="100" width="20" height="20" fill="#ffe9ba"/><rect x="220" y="100" width="20" height="20" fill="#ffe6b6"/><rect x="240" y="100" width="20" height="20" fill="#ffe3b3"/><rect x="260" y="100" width="20" height="20" fill="#ffe0b0"/><rect x="280" y="100" width="20" height="20" fill="#ffddad"/><rect x="300" y="100" width="20" height="20" fill="#fed9aa"/><rect x="320" y="100" width="20" height="20" fill="#fbd6a7"/><rect x="340" y="100" width="20" height="20" fill="#f8d3a4"/><rect x="360" y="100" width="20" height="20" fill="#f6d0a1"/><rect x="380" y="100" width="20" height="20" fill="#f3cd9e"/><rect x="400" y="100" width="20" height="20" fill="#f1ca9b"/><rect x="420" y="100" width="20" height="20" fill="#efc799"/><rect x="440" y="100" width="20" height="20" fill="#edc496"/><rect x="460" y="100" width="20" height="20" fill="#eac293"/><rect x="480" y="100" width="20" height="20" fill="#e8bf91"/><rect x="500" y="100" width="20" height="20" fill="#e7bc8e"/><rect x="520" y="100" width="20" height="20" fill="#e5ba8c"/><rect x="540" y="100" width="20" height="20" fill="#e3b78a"/><rect x="560" y="100" width="20" height="20" fill="#e1b588"/><rect x="580" y="100" width="20" height="20" fill="#e0b385"/><rect x="600" y="100" width="20" height="20" fill="#deb083"/><rect x="620" y="100" width="20" height="20" fill="#dcae81"/><rect x="640" y="100" width="20" height="20" fill="#dbac7f"/><rect x="-20" y="120" width="20" height="20" fill="#ffffd4"/><rect x="0" y="120" width="20" height="20" fill="#ffffd2"/><rect x="20" y="120" width="20" height="20" fill="#ffffcf"/><rect x="40" y="120" width="20" height="20" fill="#fffccc"/><rect x="60" y="120" width="20" height="20" fill="#fff9c9"/><rect x="80" y="120" width="20" height="20" fill="#fff6c6"/><rect x="100" y="120" width="20" height="20" fill="#fff3c4"/><rect x="120" y="120" width="20" height="20" fill="#fff0c1"/><rect x="140" y="120" width="20" height="20" fill="#ffedbe"/><rect x="160" y="120" width="20" height="20" fill="#ffeabb"/><rect x="180" y="120" width="20" height="20" fill="#ffe7b8"/><rect x="200" y="120" width="20" height="20" fill="#ffe4b5"/><rect x="220" y="120" width="20" height="20" fill="#ffe1b2"/><rect x="240" y="120" width="20" height="20" fill="#ffddae"/><rect x="260" y="120" width="20" height="20" fill="#fedaab"/><rect x="280" y="120" width="20" height="20" fill="#fbd7a8"/><rect x="300" y="120" width="20" height="20" fill="#f9d4a5"/><rect x="320" y="120" width="20" height="20" fill="#f6d1a2"/><rect x="340" y="120" width="20" height="20" fill="#f3cd9f"/><rect x="360" y="120" width="20" height="20" fill="#f1ca9c"/><rect x="380" y="120" width="20" height="20" fill="#eec799"/><rect x="400" y="120" width="20" height="20" fill="#ecc496"/><rect x="420" y="120" width="20" height="20" fill="#eac193"/><rect x="440" y="120" width="20" height="20" fill="#e7be91"/><rect x="460" y="120" width="20" height="20" fill="#e5bc8e"/><rect x="480" y="120" width="20" height="20" fill="#e3b98b"/><rect x="500" y="120" width="20" height="20" fill="#e1b789"/><rect x="520" y="120" width="20" height="20" fill="#dfb487"/><rect x="540" y="120" width="20" height="20" fill="#deb285"/><rect x="560" y="120" width="20" height="20" fill="#dcaf82"/><rect x="580" y="120" width="20" height="20" fill="#dbad80"/><rect x="600" y="120" width="20" height="20" fill="#d9ab7e"/><rect x="620" y="120" width="20" height="20" fill="#d7a87c"/><rect x="640" y="120" width="20" height="20" fill="#d6a67a"/><rect x="-20" y="140" width="20" height="20" fill="#ffffd0"/><rect x="0" y="140" width="20" height="20" fill="#fffdcd"/><rect x="20" y="140" width="20" height="20" fill="#fffaca"/><rect x="40" y="140" width="20" height="20" fill="#fff7c7"/><rect x="60" y="140" width="20" height="20" fill="#fff4c5"/><rect x="80" y="140" width="20" height="20" fill="#fff1c2"/><rect x="100" y="140" width="20" height="20" fill="#ffeebf"/><rect x="120" y="140" width="20" height="20" fill="#ffebbc"/><rect x="140" y="140" width="20" height="20" fill="#ffe8b9"/><rect x="160" y="140" width="20" height="20" fill="#ffe5b6"/><rect x="180" y="140" width="20" height="20" fill="#ffe2b3"/><rect x="200" y="140" width="20" height="20" fill="#ffdeb0"/><rect x="220" y="140" width="20" height="20" fill="#ffdbad"/><rect x="240" y="140" width="20" height="20" fill="#fcd8aa"/><rect x="260" y="140" width="20" height="20" fill="#f9d5a6"/><rect x="280" y="140" width="20" height="20" fill="#f6d1a3"/><rect x="300" y="140" width="20" height="20" fill="#f4cea0"/><rect x="320" y="140" width="20" height="20" fill="#f1cb9d"/><rect x="340" y="140" width="20" height="20" fill="#eec89a"/><rect x="360" y="140" width="20" height="20" fill="#ecc497"/><rect x="380" y="140" width="20" height="20" fill="#e9c194"/><rect x="400" y="140" width="20" height="20" fill="#e7be91"/><rect x="420" y="140" width="20" height="20" fill="#e4bb8e"/><rect x="440" y="140" width="20" height="20" fill="#e2b98b"/><rect x="460" y="140" width="20" height="20" fill="#e0b689"/><rect x="480" y="140" width="20" height="20" fill="#deb386"/><rect x="500" y="140" width="20" height="20" fill="#dcb184"/><rect x="520" y="140" width="20" height="20" fill="#daae81"/><rect x="540" y="140" width="20" height="20" fill="#d8ac7f"/><rect x="560" y="140" width="20" height="20" fill="#d7aa7d"/><rect x="580" y="140" width="20" height="20" fill="#d5a77b"/><rect x="600" y="140" width="20" height="20" fill="#d4a579"/><rect x="620" y="140" width="20" height="20" fill="#d2a377"/><rect x="640" y="140" width="20" height="20" fill="#d1a175"/><rect x="-20" y="160" width="20" height="20" fill="#fffacb"/><rect x="0" y="160" width="20" height="20" fill="#fff7c8"/><rect x="20" y="160" width="20" height="20" fill="#fff4c5"/><rect x="40" y="160" width="20" height="20" fill="#fff2c3"/><rect x="60" y="160" width="20" height="20" fill="#ffefc0"/><rect x="80" y="160" width="20" height="20" fill="#ffecbd"/><rect x="100" y="160" width="20" height="20" fill="#ffe9ba"/><rect x="120" y="160" width="20" height="20" fill="#ffe6b7"/><rect x="140" y="160" width="20" height="20" fill="#ffe3b4"/><rect x="160" y="160" width="20" height="20" fill="#ffdfb1"/><rect x="180" y="160" width="20" height="20" fill="#ffdcae"/><rect x="200" y="160" width="20" height="20" fill="#fdd9ab"/><rect x="220" y="160" width="20" height="20" fill="#fad6a8"/><rect x="240" y="160" width="20" height="20" fill="#f7d2a5"/><rect x="260" y="160" width="20" height="20" fill="#f4cfa1"/><rect x="280" y="160" width="20" height="20" fill="#f2cc9e"/><rect x="300" y="160" width="20" height="20" fill="#efc89b"/><rect x="320" y="160" width="20" height="20" fill="#ecc598"/><rect x="340" y="160" width="20" height="20" fill="#e9c295"/><rect x="360" y="160" width="20" height="20" fill="#e7bf91"/><rect x="380" y="160" width="20" height="20" fill="#e4bb8e"/><rect x="400" y="160" width="20" height="20" fill="#e1b88b"/><rect x="420" y="160" width="20" height="20" fill="#dfb588"/><rect x="440" y="160" width="20" height="20" fill="#ddb386"/><rect x="460" y="160" width="20" height="20" fill="#dab083"/><rect x="480" y="160" width="20" height="20" fill="#d8ad81"/><rect x="500" y="160" width="20" height="20" fill="#d6ab7e"/><rect x="520" y="160" width="20" height="20" fill="#d5a87c"/><rect x="540" y="160" width="20" height="20" fill="#d3a67a"/><rect x="560" y="160" width="20" height="20" fill="#d2a478"/><rect x="580" y="160" width="20" height="20" fill="#d0a276"/><rect x="600" y="160" width="20" height="20" fill="#cf9f74"/><rect x="620" y="160" width="20" height="20" fill="#cd9d72"/><rect x="640" y="160" width="20" height="20" fill="#cc9b70"/><rect x="-20" y="180" width="20" height="20" fill="#fff5c6"/><rect x="0" y="180" width="20" height="20" fill="#fff2c3"/><rect x="20" y="180" width="20" height="20" fill="#ffefc1"/><rect x="40" y="180" width="20" height="20" fill="#ffecbe"/><rect x="60" y="180" width="20" height="20" fill="#ffe9bb"/><rect x="80" y="180" width="20" height="20" fill="#ffe6b8"/><rect x="100" y="180" width="20" height="20" fill="#ffe3b5"/><rect x="120" y="180" width="20" height="20" fill="#ffe0b2"/><rect x="140" y="180" width="20" height="20" fill="#ffddaf"/><rect x="160" y="180" width="20" height="20" fill="#fedaac"/><rect x="180" y="180" width="20" height="20" fill="#fbd7a9"/><rect x="200" y="180" width="20" height="20" fill="#f8d4a6"/><rect x="220" y="180" width="20" height="20" fill="#f5d0a3"/><rect x="240" y="180" width="20" height="20" fill="#f3cda0"/><rect x="260" y="180" width="20" height="20" fill="#f0ca9c"/><rect x="280" y="180" width="20" height="20" fill="#edc699"/><rect x="300" y="180" width="20" height="20" fill="#eac396"/><rect x="320" y="180" width="20" height="20" fill="#e7bf93"/><rect x="340" y="180" width="20" height="20" fill="#e4bc8f"/><rect x="360" y="180" width="20" height="20" fill="#e1b98c"/><rect x="380" y="180" width="20" height="20" fill="#dfb689"/><rect x="400" y="180" width="20" height="20" fill="#dcb286"/><rect x="420" y="180" width="20" height="20" fill="#d9af83"/><rect x="440" y="180" width="20" height="20" fill="#d7ad80"/><rect x="460" y="180" width="20" height="20" fill="#d5aa7e"/><rect x="480" y="180" width="20" height="20" fill="#d3a77b"/><rect x="500" y="180" width="20" height="20" fill="#d1a579"/><rect x="520" y="180" width="20" height="20" fill="#cfa277"/><rect x="540" y="180" width="20" height="20" fill="#cea075"/><rect x="560" y="180" width="20" height="20" fill="#cc9e73"/><rect x="580" y="180" width="20" height="20" fill="#cb9c71"/><rect x="600" y="180" width="20" height="20" fill="#c99a6f"/><rect x="620" y="180" width="20" height="20" fill="#c8986d"/><rect x="640" y="180" width="20" height="20" fill="#c6956c"/><rect x="-20" y="200" width="20" height="20" fill="#ffefc1"/><rect x="0" y="200" width="20" height="20" fill="#ffedbf"/><rect x="20" y="200" width="20" height="20" fill="#ffeabc"/><rect x="40" y="200" width="20" height="20" fill="#ffe7b9"/><rect x="60" y="200" width="20" height="20" fill="#ffe4b6"/><rect x="80" y="200" width="20" height="20" fill="#ffe1b3"/><rect x="100" y="200" width="20" height="20" fill="#ffdeb0"/><rect x="120" y="200" width="20" height="20" fill="#ffdbad"/><rect x="140" y="200" width="20" height="20" fill="#fcd8aa"/><rect x="160" y="200" width="20" height="20" fill="#f9d5a7"/><rect x="180" y="200" width="20" height="20" fill="#f6d1a4"/><rect x="200" y="200" width="20" height="20" fill="#f4cea1"/><rect x="220" y="200" width="20" height="20" fill="#f1cb9e"/><rect x="240" y="200" width="20" height="20" fill="#eec79b"/><rect x="260" y="200" width="20" height="20" fill="#ebc497"/><rect x="280" y="200" width="20" height="20" fill="#e8c194"/><rect x="300" y="200" width="20" height="20" fill="#e5bd91"/><rect x="320" y="200" width="20" height="20" fill="#e2ba8d"/><rect x="340" y="200" width="20" height="20" fill="#dfb68a"/><rect x="360" y="200" width="20" height="20" fill="#dcb387"/><rect x="380" y="200" width="20" height="20" fill="#d9b084"/><rect x="400" y="200" width="20" height="20" fill="#d7ac80"/><rect x="420" y="200" width="20" height="20" fill="#d4a97d"/><rect x="440" y="200" width="20" height="20" fill="#d2a67b"/><rect x="460" y="200" width="20" height="20" fill="#cfa478"/><rect x="480" y="200" width="20" height="20" fill="#cda176"/><rect x="500" y="200" width="20" height="20" fill="#cb9f73"/><rect x="520" y="200" width="20" height="20" fill="#ca9c71"/><rect x="540" y="200" width="20" height="20" fill="#c89a6f"/><rect x="560" y="200" width="20" height="20" fill="#c6986e"/><rect x="580" y="200" width="20" height="20" fill="#c5966c"/><rect x="600" y="200" width="20" height="20" fill="#c4946a"/><rect x="620" y="200" width="20" height="20" fill="#c29269"/><rect x="640" y="200" width="20" height="20" fill="#c19067"/><rect x="-20" y="220" width="20" height="20" fill="#ffeabc"/><rect x="0" y="220" width="20" height="20" fill="#ffe7ba"/><rect x="20" y="220" width="20" height="20" fill="#ffe4b7"/><rect x="40" y="220" width="20" height="20" fill="#ffe2b4"/><rect x="60" y="220" width="20" height="20" fill="#ffdfb1"/><rect x="80" y="220" width="20" height="20" fill="#ffdcae"/><rect x="100" y="220" width="20" height="20" fill="#fdd9ac"/><rect x="120" y="220" width="20" height="20" fill="#fad6a9"/><rect x="140" y="220" width="20" height="20" fill="#f7d3a6"/><rect x="160" y="220" width="20" height="20" fill="#f5cfa3"/><rect x="180" y="220" width="20" height="20" fill="#f2cc9f"/><rect x="200" y="220" width="20" height="20" fill="#efc99c"/><rect x="220" y="220" width="20" height="20" fill="#ecc599"/><rect x="240" y="220" width="20" height="20" fill="#e9c296"/><rect x="260" y="220" width="20" height="20" fill="#e6bf92"/><rect x="280" y="220" width="20" height="20" fill="#e3bb8f"/><rect x="300" y="220" width="20" height="20" fill="#e0b88c"/><rect x="320" y="220" width="20" height="20" fill="#ddb488"/><rect x="340" y="220" width="20" height="20" fill="#dab085"/><rect x="360" y="220" width="20" height="20" fill="#d7ad81"/><rect x="380" y="220" width="20" height="20" fill="#d4aa7e"/><rect x="400" y="220" width="20" height="20" fill="#d1a67b"/><rect x="420" y="220" width="20" height="20" fill="#cfa378"/><rect x="440" y="220" width="20" height="20" fill="#cca075"/><rect x="460" y="220" width="20" height="20" fill="#ca9d72"/><rect x="480" y="220" width="20" height="20" fill="#c89b70"/><rect x="500" y="220" width="20" height="20" fill="#c6996e"/><rect x="520" y="220" width="20" height="20" fill="#c4966c"/><rect x="540" y="220" width="20" height="20" fill="#c2946a"/><rect x="560" y="220" width="20" height="20" fill="#c19269"/><rect x="580" y="220" width="20" height="20" fill="#bf9067"/><rect x="600" y="220" width="20" height="20" fill="#be8e66"/><rect x="620" y="220" width="20" height="20" fill="#bd8c64"/><rect x="640" y="220" width="20" height="20" fill="#bc8a62"/><rect x="-20" y="240" width="20" height="20" fill="#ffe5b7"/><rect x="0" y="240" width="20" height="20" fill="#ffe2b5"/><rect x="20" y="240" width="20" height="20" fill="#ffdfb2"/><rect x="40" y="240" width="20" height="20" fill="#ffdcaf"/><rect x="60" y="240" width="20" height="20" fill="#fed9ac"/><rect x="80" y="240" width="20" height="20" fill="#fbd6aa"/><rect x="100" y="240" width="20" height="20" fill="#f8d3a7"/><rect x="120" y="240" width="20" height="20" fill="#f6d0a4"/><rect x="140" y="240" width="20" height="20" fill="#f3cda1"/><rect x="160" y="240" width="20" height="20" fill="#f0ca9e"/><rect x="180" y="240" width="20" height="20" fill="#edc79b"/><rect x="200" y="240" width="20" height="20" fill="#eac497"/><rect x="220" y="240" width="20" height="20" fill="#e7c094"/><rect x="240" y="240" width="20" height="20" fill="#e4bd91"/><rect x="260" y="240" width="20" height="20" fill="#e1b98e"/><rect x="280" y="240" width="20" height="20" fill="#deb68a"/><rect x="300" y="240" width="20" height="20" fill="#dbb287"/><rect x="320" y="240" width="20" height="20" fill="#d8ae83"/><rect x="340" y="240" width="20" height="20" fill="#d5ab80"/><rect x="360" y="240" width="20" height="20" fill="#d2a77c"/><rect x="380" y="240" width="20" height="20" fill="#cfa479"/><rect x="400" y="240" width="20" height="20" fill="#cca075"/><rect x="420" y="240" width="20" height="20" fill="#c99d72"/><rect x="440" y="240" width="20" height="20" fill="#c79a6f"/><rect x="460" y="240" width="20" height="20" fill="#c4976c"/><rect x="480" y="240" width="20" height="20" fill="#c2956a"/><rect x="500" y="240" width="20" height="20" fill="#c09268"/><rect x="520" y="240" width="20" height="20" fill="#bf9066"/><rect x="540" y="240" width="20" height="20" fill="#bd8e64"/><rect x="560" y="240" width="20" height="20" fill="#bc8c63"/><rect x="580" y="240" width="20" height="20" fill="#ba8b62"/><rect x="600" y="240" width="20" height="20" fill="#b98961"/><rect x="620" y="240" width="20" height="20" fill="#b8875f"/><rect x="640" y="240" width="20" height="20" fill="#b7855d"/><rect x="-20" y="260" width="20" height="20" fill="#ffdfb3"/><rect x="0" y="260" width="20" height="20" fill="#ffdcb0"/><rect x="20" y="260" width="20" height="20" fill="#ffdaad"/><rect x="40" y="260" width="20" height="20" fill="#fcd7aa"/><rect x="60" y="260" width="20" height="20" fill="#f9d4a8"/><rect x="80" y="260" width="20" height="20" fill="#f7d1a5"/><rect x="100" y="260" width="20" height="20" fill="#f4cea2"/><rect x="120" y="260" width="20" height="20" fill="#f1cb9f"/><rect x="140" y="260" width="20" height="20" fill="#eec89c"/><rect x="160" y="260" width="20" height="20" fill="#ecc599"/><rect x="180" y="260" width="20" height="20" fill="#e9c296"/><rect x="200" y="260" width="20" height="20" fill="#e6be93"/><rect x="220" y="260" width="20" height="20" fill="#e3bb8f"/><rect x="240" y="260" width="20" height="20" fill="#e0b78c"/><rect x="260" y="260" width="20" height="20" fill="#ddb489"/><rect x="280" y="260" width="20" height="20" fill="#dab085"/><rect x="300" y="260" width="20" height="20" fill="#d7ac82"/><rect x="320" y="260" width="20" height="20" fill="#d3a97e"/><rect x="340" y="260" width="20" height="20" fill="#d0a57a"/><rect x="360" y="260" width="20" height="20" fill="#cda177"/><rect x="380" y="260" width="20" height="20" fill="#ca9e73"/><rect x="400" y="260" width="20" height="20" fill="#c79a70"/><rect x="420" y="260" width="20" height="20" fill="#c4976c"/><rect x="440" y="260" width="20" height="20" fill="#c19469"/><rect x="460" y="260" width="20" height="20" fill="#bf9167"/><rect x="480" y="260" width="20" height="20" fill="#bc8e64"/><rect x="500" y="260" width="20" height="20" fill="#bb8c62"/><rect x="520" y="260" width="20" height="20" fill="#b98a60"/><rect x="540" y="260" width="20" height="20" fill="#b8885e"/><rect x="560" y="260" width="20" height="20" fill="#b7875d"/><rect x="580" y="260" width="20" height="20" fill="#b5855c"/><rect x="600" y="260" width="20" height="20" fill="#b4835b"/><rect x="620" y="260" width="20" height="20" fill="#b38159"/><rect x="640" y="260" width="20" height="20" fill="#b27f57"/><rect x="-20" y="280" width="20" height="20" fill="#ffdaae"/><rect x="0" y="280" width="20" height="20" fill="#fdd7ab"/><rect x="20" y="280" width="20" height="20" fill="#fad4a8"/><rect x="40" y="280" width="20" height="20" fill="#f8d1a5"/><rect x="60" y="280" width="20" height="20" fill="#f5cfa3"/><rect x="80" y="280" width="20" height="20" fill="#f2cca0"/><rect x="100" y="280" width="20" height="20" fill="#efc99d"/><rect x="120" y="280" width="20" height="20" fill="#edc69a"/><rect x="140" y="280" width="20" height="20" fill="#eac397"/><rect x="160" y="280" width="20" height="20" fill="#e7c094"/><rect x="180" y="280" width="20" height="20" fill="#e4bc91"/><rect x="200" y="280" width="20" height="20" fill="#e1b98e"/><rect x="220" y="280" width="20" height="20" fill="#deb58a"/><rect x="240" y="280" width="20" height="20" fill="#dbb287"/><rect x="260" y="280" width="20" height="20" fill="#d8ae84"/><rect x="280" y="280" width="20" height="20" fill="#d5aa80"/><rect x="300" y="280" width="20" height="20" fill="#d2a77d"/><rect x="320" y="280" width="20" height="20" fill="#cfa379"/><rect x="340" y="280" width="20" height="20" fill="#cb9f75"/><rect x="360" y="280" width="20" height="20" fill="#c89b71"/><rect x="380" y="280" width="20" height="20" fill="#c5986e"/><rect x="400" y="280" width="20" height="20" fill="#c1946a"/><rect x="420" y="280" width="20" height="20" fill="#be9167"/><rect x="440" y="280" width="20" height="20" fill="#bc8d64"/><rect x="460" y="280" width="20" height="20" fill="#b98a61"/><rect x="480" y="280" width="20" height="20" fill="#b7885e"/><rect x="500" y="280" width="20" height="20" fill="#b5865c"/><rect x="520" y="280" width="20" height="20" fill="#b4845a"/><rect x="540" y="280" width="20" height="20" fill="#b28258"/><rect x="560" y="280" width="20" height="20" fill="#b28157"/><rect x="580" y="280" width="20" height="20" fill="#b17f55"/><rect x="600" y="280" width="20" height="20" fill="#b17e54"/><rect x="620" y="280" width="20" height="20" fill="#af7c53"/><rect x="640" y="280" width="20" height="20" fill="#ae7a51"/><rect x="-20" y="300" width="20" height="20" fill="#fbd4a9"/><rect x="0" y="300" width="20" height="20" fill="#f8d2a6"/><rect x="20" y="300" width="20" height="20" fill="#f6cfa3"/><rect x="40" y="300" width="20" height="20" fill="#f3cca1"/><rect x="60" y="300" width="20" height="20" fill="#f0c99e"/><rect x="80" y="300" width="20" height="20" fill="#eec69b"/><rect x="100" y="300" width="20" height="20" fill="#ebc498"/><rect x="120" y="300" width="20" height="20" fill="#e8c195"/><rect x="140" y="300" width="20" height="20" fill="#e5bd92"/><rect x="160" y="300" width="20" height="20" fill="#e2ba8f"/><rect x="180" y="300" width="20" height="20" fill="#e0b78c"/><rect x="200" y="300" width="20" height="20" fill="#ddb489"/><rect x="220" y="300" width="20" height="20" fill="#dab085"/><rect x="240" y="300" width="20" height="20" fill="#d7ac82"/><rect x="260" y="300" width="20" height="20" fill="#d4a97f"/><rect x="280" y="300" width="20" height="20" fill="#d0a57b"/><rect x="300" y="300" width="20" height="20" fill="#cda178"/><rect x="320" y="300" width="20" height="20" fill="#ca9d74"/><rect x="340" y="300" width="20" height="20" fill="#c79a70"/><rect x="360" y="300" width="20" height="20" fill="#c3966c"/><rect x="380" y="300" width="20" height="20" fill="#c09268"/><rect x="400" y="300" width="20" height="20" fill="#bc8e65"/><rect x="420" y="300" width="20" height="20" fill="#b98a61"/><rect x="440" y="300" width="20" height="20" fill="#b6875e"/><rect x="460" y="300" width="20" height="20" fill="#b3845b"/><rect x="480" y="300" width="20" height="20" fill="#b18158"/><rect x="500" y="300" width="20" height="20" fill="#af7f56"/><rect x="520" y="300" width="20" height="20" fill="#ae7d54"/><rect x="540" y="300" width="20" height="20" fill="#ad7c52"/><rect x="560" y="300" width="20" height="20" fill="#ac7a51"/><rect x="580" y="300" width="20" height="20" fill="#ac794f"/><rect x="600" y="300" width="20" height="20" fill="#ac784e"/><rect x="620" y="300" width="20" height="20" fill="#ab764c"/><rect x="640" y="300" width="20" height="20" fill="#a9744b"/><rect x="-20" y="320" width="20" height="20" fill="#f7cfa4"/><rect x="0" y="320" width="20" height="20" fill="#f4cca1"/><rect x="20" y="320" width="20" height="20" fill="#f1c99e"/><rect x="40" y="320" width="20" height="20" fill="#efc79c"/><rect x="60" y="320" width="20" height="20" fill="#ecc499"/><rect x="80" y="320" width="20" height="20" fill="#e9c196"/><rect x="100" y="320" width="20" height="20" fill="#e6be93"/><rect x="120" y="320" width="20" height="20" fill="#e3bb90"/><rect x="140" y="320" width="20" height="20" fill="#e1b88d"/><rect x="160" y="320" width="20" height="20" fill="#deb58a"/><rect x="180" y="320" width="20" height="20" fill="#dbb287"/><rect x="200" y="320" width="20" height="20" fill="#d8ae84"/><rect x="220" y="320" width="20" height="20" fill="#d5ab80"/><rect x="240" y="320" width="20" height="20" fill="#d2a77d"/><rect x="260" y="320" width="20" height="20" fill="#cfa37a"/><rect x="280" y="320" width="20" height="20" fill="#cc9f76"/><rect x="300" y="320" width="20" height="20" fill="#c99c73"/><rect x="320" y="320" width="20" height="20" fill="#c5986f"/><rect x="340" y="320" width="20" height="20" fill="#c2946b"/><rect x="360" y="320" width="20" height="20" fill="#be9067"/><rect x="380" y="320" width="20" height="20" fill="#bb8c63"/><rect x="400" y="320" width="20" height="20" fill="#b7885f"/><rect x="420" y="320" width="20" height="20" fill="#b4845b"/><rect x="440" y="320" width="20" height="20" fill="#b18058"/><rect x="460" y="320" width="20" height="20" fill="#ae7d55"/><rect x="480" y="320" width="20" height="20" fill="#ac7b52"/><rect x="500" y="320" width="20" height="20" fill="#aa7850"/><rect x="520" y="320" width="20" height="20" fill="#a8774e"/><rect x="540" y="320" width="20" height="20" fill="#a7754c"/><rect x="560" y="320" width="20" height="20" fill="#a7744b"/><rect x="580" y="320" width="20" height="20" fill="#a67249"/><rect x="600" y="320" width="20" height="20" fill="#a67148"/><rect x="620" y="320" width="20" height="20" fill="#a56f47"/><rect x="640" y="320" width="20" height="20" fill="#a46d46"/><rect x="-20" y="340" width="20" height="20" fill="#f2c99f"/><rect x="0" y="340" width="20" height="20" fill="#f0c79c"/><rect x="20" y="340" width="20" height="20" fill="#edc499"/><rect x="40" y="340" width="20" height="20" fill="#eac196"/><rect x="60" y="340" width="20" height="20" fill="#e7be94"/><rect x="80" y="340" width="20" height="20" fill="#e4bc91"/><rect x="100" y="340" width="20" height="20" fill="#e2b98e"/><rect x="120" y="340" width="20" height="20" fill="#dfb68b"/><rect x="140" y="340" width="20" height="20" fill="#dcb388"/><rect x="160" y="340" width="20" height="20" fill="#d9b085"/><rect x="180" y="340" width="20" height="20" fill="#d6ac82"/><rect x="200" y="340" width="20" height="20" fill="#d3a97f"/><rect x="220" y="340" width="20" height="20" fill="#d1a57b"/><rect x="240" y="340" width="20" height="20" fill="#cea178"/><rect x="260" y="340" width="20" height="20" fill="#cb9e75"/><rect x="280" y="340" width="20" height="20" fill="#c79a72"/><rect x="300" y="340" width="20" height="20" fill="#c4966e"/><rect x="320" y="340" width="20" height="20" fill="#c1926a"/><rect x="340" y="340" width="20" height="20" fill="#bd8f66"/><rect x="360" y="340" width="20" height="20" fill="#ba8b62"/><rect x="380" y="340" width="20" height="20" fill="#b6865e"/><rect x="400" y="340" width="20" height="20" fill="#b2825a"/><rect x="420" y="340" width="20" height="20" fill="#af7e56"/><rect x="440" y="340" width="20" height="20" fill="#ab7a52"/><rect x="460" y="340" width="20" height="20" fill="#a9774f"/><rect x="480" y="340" width="20" height="20" fill="#a6744c"/><rect x="500" y="340" width="20" height="20" fill="#a4724a"/><rect x="520" y="340" width="20" height="20" fill="#a37048"/><rect x="540" y="340" width="20" height="20" fill="#a26f47"/><rect x="560" y="340" width="20" height="20" fill="#a16d46"/><rect x="580" y="340" width="20" height="20" fill="#a06c44"/><rect x="600" y="340" width="20" height="20" fill="#9f6a43"/><rect x="620" y="340" width="20" height="20" fill="#9f6842"/><rect x="640" y="340" width="20" height="20" fill="#9e6741"/><rect x="-20" y="360" width="20" height="20" fill="#eec49a"/><rect x="0" y="360" width="20" height="20" fill="#ebc197"/><rect x="20" y="360" width="20" height="20" fill="#e8be94"/><rect x="40" y="360" width="20" height="20" fill="#e6bc91"/><rect x="60" y="360" width="20" height="20" fill="#e3b98f"/><rect x="80" y="360" width="20" height="20" fill="#e0b68c"/><rect x="100" y="360" width="20" height="20" fill="#ddb389"/><rect x="120" y="360" width="20" height="20" fill="#dab086"/><rect x="140" y="360" width="20" height="20" fill="#d7ad83"/><rect x="160" y="360" width="20" height="20" fill="#d5aa80"/><rect x="180" y="360" width="20" height="20" fill="#d2a77d"/><rect x="200" y="360" width="20" height="20" fill="#cfa379"/><rect x="220" y="360" width="20" height="20" fill="#cca076"/><rect x="240" y="360" width="20" height="20" fill="#c99c73"/><rect x="260" y="360" width="20" height="20" fill="#c69870"/><rect x="280" y="360" width="20" height="20" fill="#c3946d"/><rect x="300" y="360" width="20" height="20" fill="#c09169"/><rect x="320" y="360" width="20" height="20" fill="#bc8d65"/><rect x="340" y="360" width="20" height="20" fill="#b98961"/><rect x="360" y="360" width="20" height="20" fill="#b5855d"/><rect x="380" y="360" width="20" height="20" fill="#b18159"/><rect x="400" y="360" width="20" height="20" fill="#ad7c55"/><rect x="420" y="360" width="20" height="20" fill="#aa7850"/><rect x="440" y="360" width="20" height="20" fill="#a6744d"/><rect x="460" y="360" width="20" height="20" fill="#a3704a"/><rect x="480" y="360" width="20" height="20" fill="#a16e47"/><rect x="500" y="360" width="20" height="20" fill="#9f6c45"/><rect x="520" y="360" width="20" height="20" fill="#9e6a43"/><rect x="540" y="360" width="20" height="20" fill="#9d6942"/><rect x="560" y="360" width="20" height="20" fill="#9c6841"/><rect x="580" y="360" width="20" height="20" fill="#9b6640"/><rect x="600" y="360" width="20" height="20" fill="#9a643e"/><rect x="620" y="360" width="20" height="20" fill="#99623d"/><rect x="640" y="360" width="20" height="20" fill="#99613c"/><rect x="-20" y="380" width="20" height="20" fill="#e9be94"/><rect x="0" y="380" width="20" height="20" fill="#e7bc92"/><rect x="20" y="380" width="20" height="20" fill="#e4b98f"/><rect x="40" y="380" width="20" height="20" fill="#e1b68c"/><rect x="60" y="380" width="20" height="20" fill="#deb389"/><rect x="80" y="380" width="20" height="20" fill="#dbb187"/><rect x="100" y="380" width="20" height="20" fill="#d8ae84"/><rect x="120" y="380" width="20" height="20" fill="#d6ab81"/><rect x="140" y="380" width="20" height="20" fill="#d3a87e"/><rect x="160" y="380" width="20" height="20" fill="#d0a57b"/><rect x="180" y="380" width="20" height="20" fill="#cda277"/><rect x="200" y="380" width="20" height="20" fill="#ca9e74"/><rect x="220" y="380" width="20" height="20" fill="#c79a71"/><rect x="240" y="380" width="20" height="20" fill="#c4966e"/><rect x="260" y="380" width="20" height="20" fill="#c1926b"/><rect x="280" y="380" width="20" height="20" fill="#be8f68"/><rect x="300" y="380" width="20" height="20" fill="#bb8b64"/><rect x="320" y="380" width="20" height="20" fill="#b88860"/><rect x="340" y="380" width="20" height="20" fill="#b4845c"/><rect x="360" y="380" width="20" height="20" fill="#b18058"/><rect x="380" y="380" width="20" height="20" fill="#ad7c54"/><rect x="400" y="380" width="20" height="20" fill="#a97750"/><rect x="420" y="380" width="20" height="20" fill="#a5724b"/><rect x="440" y="380" width="20" height="20" fill="#a26d47"/><rect x="460" y="380" width="20" height="20" fill="#9f6a44"/><rect x="480" y="380" width="20" height="20" fill="#9c6742"/><rect x="500" y="380" width="20" height="20" fill="#9a6640"/><rect x="520" y="380" width="20" height="20" fill="#99653f"/><rect x="540" y="380" width="20" height="20" fill="#98643e"/><rect x="560" y="380" width="20" height="20" fill="#98633d"/><rect x="580" y="380" width="20" height="20" fill="#97613c"/><rect x="600" y="380" width="20" height="20" fill="#965f3b"/><rect x="620" y="380" width="20" height="20" fill="#955d3a"/><rect x="640" y="380" width="20" height="20" fill="#955c39"/><rect x="-20" y="400" width="20" height="20" fill="#e5b98f"/><rect x="0" y="400" width="20" height="20" fill="#e2b68d"/><rect x="20" y="400" width="20" height="20" fill="#dfb38a"/><rect x="40" y="400" width="20" height="20" fill="#ddb087"/><rect x="60" y="400" width="20" height="20" fill="#daae84"/><rect x="80" y="400" width="20" height="20" fill="#d7ab81"/><rect x="100" y="400" width="20" height="20" fill="#d4a87e"/><rect x="120" y="400" width="20" height="20" fill="#d1a57b"/><rect x="140" y="400" width="20" height="20" fill="#cea278"/><rect x="160" y="400" width="20" height="20" fill="#cc9f75"/><rect x="180" y="400" width="20" height="20" fill="#c99c72"/><rect x="200" y="400" width="20" height="20" fill="#c5986e"/><rect x="220" y="400" width="20" height="20" fill="#c2946b"/><rect x="240" y="400" width="20" height="20" fill="#bf9068"/><rect x="260" y="400" width="20" height="20" fill="#bc8c65"/><rect x="280" y="400" width="20" height="20" fill="#ba8962"/><rect x="300" y="400" width="20" height="20" fill="#b7855f"/><rect x="320" y="400" width="20" height="20" fill="#b4825b"/><rect x="340" y="400" width="20" height="20" fill="#b07f57"/><rect x="360" y="400" width="20" height="20" fill="#ac7b53"/><rect x="380" y="400" width="20" height="20" fill="#a9774f"/><rect x="400" y="400" width="20" height="20" fill="#a5724b"/><rect x="420" y="400" width="20" height="20" fill="#a16c47"/><rect x="440" y="400" width="20" height="20" fill="#9e6743"/><rect x="460" y="400" width="20" height="20" fill="#9a6440"/><rect x="480" y="400" width="20" height="20" fill="#98623d"/><rect x="500" y="400" width="20" height="20" fill="#96603c"/><rect x="520" y="400" width="20" height="20" fill="#95603b"/><rect x="540" y="400" width="20" height="20" fill="#95603b"/><rect x="560" y="400" width="20" height="20" fill="#955f3b"/><rect x="580" y="400" width="20" height="20" fill="#955d3a"/><rect x="600" y="400" width="20" height="20" fill="#935b38"/><rect x="620" y="400" width="20" height="20" fill="#925937"/><rect x="640" y="400" width="20" height="20" fill="#925736"/><rect x="-20" y="420" width="20" height="20" fill="#e0b38a"/><rect x="0" y="420" width="20" height="20" fill="#deb087"/><rect x="20" y="420" width="20" height="20" fill="#dbae84"/><rect x="40" y="420" width="20" height="20" fill="#d8ab82"/><rect x="60" y="420" width="20" height="20" fill="#d5a87f"/><rect x="80" y="420" width="20" height="20" fill="#d2a57c"/><rect x="100" y="420" width="20" height="20" fill="#cfa279"/><rect x="120" y="420" width="20" height="20" fill="#cca076"/><rect x="140" y="420" width="20" height="20" fill="#c99d73"/><rect x="160" y="420" width="20" height="20" fill="#c79a70"/><rect x="180" y="420" width="20" height="20" fill="#c5976c"/><rect x="200" y="420" width="20" height="20" fill="#c09369"/><rect x="220" y="420" width="20" height="20" fill="#bc8e66"/><rect x="240" y="420" width="20" height="20" fill="#b98a63"/><rect x="260" y="420" width="20" height="20" fill="#b78660"/><rect x="280" y="420" width="20" height="20" fill="#b5835d"/><rect x="300" y="420" width="20" height="20" fill="#b27f5a"/><rect x="320" y="420" width="20" height="20" fill="#af7d56"/><rect x="340" y="420" width="20" height="20" fill="#ab7a52"/><rect x="360" y="420" width="20" height="20" fill="#a8764e"/><rect x="380" y="420" width="20" height="20" fill="#a5724b"/><rect x="400" y="420" width="20" height="20" fill="#a16d47"/><rect x="420" y="420" width="20" height="20" fill="#9e6742"/><rect x="440" y="420" width="20" height="20" fill="#9a613e"/><rect x="460" y="420" width="20" height="20" fill="#975e3b"/><rect x="480" y="420" width="20" height="20" fill="#945d39"/><rect x="500" y="420" width="20" height="20" fill="#925c38"/><rect x="520" y="420" width="20" height="20" fill="#925c38"/><rect x="540" y="420" width="20" height="20" fill="#935c38"/><rect x="560" y="420" width="20" height="20" fill="#945c39"/><rect x="580" y="420" width="20" height="20" fill="#945b38"/><rect x="600" y="420" width="20" height="20" fill="#925937"/><rect x="620" y="420" width="20" height="20" fill="#915635"/><rect x="640" y="420" width="20" height="20" fill="#905433"/><rect x="-20" y="440" width="20" height="20" fill="#dcae85"/><rect x="0" y="440" width="20" height="20" fill="#d9ab82"/><rect x="20" y="440" width="20" height="20" fill="#d6a87f"/><rect x="40" y="440" width="20" height="20" fill="#d4a57c"/><rect x="60" y="440" width="20" height="20" fill="#d1a279"/><rect x="80" y="440" width="20" height="20" fill="#ce9f76"/><rect x="100" y="440" width="20" height="20" fill="#cb9d73"/><rect x="120" y="440" width="20" height="20" fill="#c89a70"/><rect x="140" y="440" width="20" height="20" fill="#c4976d"/><rect x="160" y="440" width="20" height="20" fill="#c2936a"/><rect x="180" y="440" width="20" height="20" fill="#c09067"/><rect x="200" y="440" width="20" height="20" fill="#bb8c63"/><rect x="220" y="440" width="20" height="20" fill="#b78860"/><rect x="240" y="440" width="20" height="20" fill="#b4845d"/><rect x="260" y="440" width="20" height="20" fill="#b18059"/><rect x="280" y="440" width="20" height="20" fill="#af7d56"/><rect x="300" y="440" width="20" height="20" fill="#ac7a53"/><rect x="320" y="440" width="20" height="20" fill="#aa7750"/><rect x="340" y="440" width="20" height="20" fill="#a7744c"/><rect x="360" y="440" width="20" height="20" fill="#a47149"/><rect x="380" y="440" width="20" height="20" fill="#a16d46"/><rect x="400" y="440" width="20" height="20" fill="#9e6843"/><rect x="420" y="440" width="20" height="20" fill="#9b633f"/><rect x="440" y="440" width="20" height="20" fill="#985d3b"/><rect x="460" y="440" width="20" height="20" fill="#945a39"/><rect x="480" y="440" width="20" height="20" fill="#925937"/><rect x="500" y="440" width="20" height="20" fill="#905835"/><rect x="520" y="440" width="20" height="20" fill="#905835"/><rect x="540" y="440" width="20" height="20" fill="#915936"/><rect x="560" y="440" width="20" height="20" fill="#925937"/><rect x="580" y="440" width="20" height="20" fill="#935937"/><rect x="600" y="440" width="20" height="20" fill="#925635"/><rect x="620" y="440" width="20" height="20" fill="#905433"/><rect x="640" y="440" width="20" height="20" fill="#8e5131"/><rect x="-20" y="460" width="20" height="20" fill="#d7a880"/><rect x="0" y="460" width="20" height="20" fill="#d4a57d"/><rect x="20" y="460" width="20" height="20" fill="#d2a27a"/><rect x="40" y="460" width="20" height="20" fill="#cf9f77"/><rect x="60" y="460" width="20" height="20" fill="#cc9c74"/><rect x="80" y="460" width="20" height="20" fill="#c99a71"/><rect x="100" y="460" width="20" height="20" fill="#c6976e"/><rect x="120" y="460" width="20" height="20" fill="#c3946a"/><rect x="140" y="460" width="20" height="20" fill="#c09167"/><rect x="160" y="460" width="20" height="20" fill="#bc8d64"/><rect x="180" y="460" width="20" height="20" fill="#b98a61"/><rect x="200" y="460" width="20" height="20" fill="#b5865e"/><rect x="220" y="460" width="20" height="20" fill="#b1825a"/><rect x="240" y="460" width="20" height="20" fill="#ae7e57"/><rect x="260" y="460" width="20" height="20" fill="#ab7b53"/><rect x="280" y="460" width="20" height="20" fill="#a9774f"/><rect x="300" y="460" width="20" height="20" fill="#a6744c"/><rect x="320" y="460" width="20" height="20" fill="#a47149"/><rect x="340" y="460" width="20" height="20" fill="#a26f47"/><rect x="360" y="460" width="20" height="20" fill="#9f6c44"/><rect x="380" y="460" width="20" height="20" fill="#9d6842"/><rect x="400" y="460" width="20" height="20" fill="#9b643f"/><rect x="420" y="460" width="20" height="20" fill="#985f3c"/><rect x="440" y="460" width="20" height="20" fill="#955b39"/><rect x="460" y="460" width="20" height="20" fill="#925836"/><rect x="480" y="460" width="20" height="20" fill="#905634"/><rect x="500" y="460" width="20" height="20" fill="#8f5533"/><rect x="520" y="460" width="20" height="20" fill="#8e5533"/><rect x="540" y="460" width="20" height="20" fill="#8f5533"/><rect x="560" y="460" width="20" height="20" fill="#905534"/><rect x="580" y="460" width="20" height="20" fill="#905534"/><rect x="600" y="460" width="20" height="20" fill="#8f5332"/><rect x="620" y="460" width="20" height="20" fill="#8e5031"/><rect x="640" y="460" width="20" height="20" fill="#8c4e2f"/><rect x="-20" y="480" width="20" height="20" fill="#d2a27a"/><rect x="0" y="480" width="20" height="20" fill="#d0a077"/><rect x="20" y="480" width="20" height="20" fill="#cd9d74"/><rect x="40" y="480" width="20" height="20" fill="#ca9a71"/><rect x="60" y="480" width="20" height="20" fill="#c7976e"/><rect x="80" y="480" width="20" height="20" fill="#c5946b"/><rect x="100" y="480" width="20" height="20" fill="#c29168"/><rect x="120" y="480" width="20" height="20" fill="#be8e65"/><rect x="140" y="480" width="20" height="20" fill="#bb8b62"/><rect x="160" y="480" width="20" height="20" fill="#b7875f"/><rect x="180" y="480" width="20" height="20" fill="#b3835c"/><rect x="200" y="480" width="20" height="20" fill="#af8058"/><rect x="220" y="480" width="20" height="20" fill="#ac7c55"/><rect x="240" y="480" width="20" height="20" fill="#a97951"/><rect x="260" y="480" width="20" height="20" fill="#a6754d"/><rect x="280" y="480" width="20" height="20" fill="#a4724a"/><rect x="300" y="480" width="20" height="20" fill="#a16f46"/><rect x="320" y="480" width="20" height="20" fill="#9f6c44"/><rect x="340" y="480" width="20" height="20" fill="#9d6942"/><rect x="360" y="480" width="20" height="20" fill="#9b6640"/><rect x="380" y="480" width="20" height="20" fill="#99633d"/><rect x="400" y="480" width="20" height="20" fill="#975f3b"/><rect x="420" y="480" width="20" height="20" fill="#955b39"/><rect x="440" y="480" width="20" height="20" fill="#935836"/><rect x="460" y="480" width="20" height="20" fill="#905534"/><rect x="480" y="480" width="20" height="20" fill="#8e5332"/><rect x="500" y="480" width="20" height="20" fill="#8d5231"/><rect x="520" y="480" width="20" height="20" fill="#8d5130"/><rect x="540" y="480" width="20" height="20" fill="#8d5130"/><rect x="560" y="480" width="20" height="20" fill="#8d5130"/><rect x="580" y="480" width="20" height="20" fill="#8d5030"/><rect x="600" y="480" width="20" height="20" fill="#8c4f2f"/><rect x="620" y="480" width="20" height="20" fill="#8b4c2d"/><rect x="640" y="480" width="20" height="20" fill="#894a2b"/><rect x="-20" y="500" width="20" height="20" fill="#ce9d75"/><rect x="0" y="500" width="20" height="20" fill="#cb9a72"/><rect x="20" y="500" width="20" height="20" fill="#c8976f"/><rect x="40" y="500" width="20" height="20" fill="#c6946c"/><rect x="60" y="500" width="20" height="20" fill="#c39169"/><rect x="80" y="500" width="20" height="20" fill="#c08e66"/><rect x="100" y="500" width="20" height="20" fill="#bd8b63"/><rect x="120" y="500" width="20" height="20" fill="#b9885f"/><rect x="140" y="500" width="20" height="20" fill="#b6855c"/><rect x="160" y="500" width="20" height="20" fill="#b28159"/><rect x="180" y="500" width="20" height="20" fill="#ae7e56"/><rect x="200" y="500" width="20" height="20" fill="#ab7a53"/><rect x="220" y="500" width="20" height="20" fill="#a7774f"/><rect x="240" y="500" width="20" height="20" fill="#a4734b"/><rect x="260" y="500" width="20" height="20" fill="#a17048"/><rect x="280" y="500" width="20" height="20" fill="#9f6d45"/><rect x="300" y="500" width="20" height="20" fill="#9d6a42"/><rect x="320" y="500" width="20" height="20" fill="#9b673f"/><rect x="340" y="500" width="20" height="20" fill="#99643d"/><rect x="360" y="500" width="20" height="20" fill="#97613b"/><rect x="380" y="500" width="20" height="20" fill="#955e39"/><rect x="400" y="500" width="20" height="20" fill="#945b37"/><rect x="420" y="500" width="20" height="20" fill="#925735"/><rect x="440" y="500" width="20" height="20" fill="#905433"/><rect x="460" y="500" width="20" height="20" fill="#8e5231"/><rect x="480" y="500" width="20" height="20" fill="#8c502f"/><rect x="500" y="500" width="20" height="20" fill="#8b4f2e"/><rect x="520" y="500" width="20" height="20" fill="#8a4e2e"/><rect x="540" y="500" width="20" height="20" fill="#8a4d2d"/><rect x="560" y="500" width="20" height="20" fill="#8a4d2d"/><rect x="580" y="500" width="20" height="20" fill="#8a4c2c"/><rect x="600" y="500" width="20" height="20" fill="#894a2b"/><rect x="620" y="500" width="20" height="20" fill="#88482a"/><rect x="640" y="500" width="20" height="20" fill="#864628"/></g></g><g filter="url(#sb)"><path d="M28 476 C89.3 445.9,147.9 391.1,205 330 L205 387 C155.9 414.9,108.4 449.7,56 476 Z" fill="#d9ab7e"/><path d="M505 185 L625 103 L625 185 Z" fill="#fff" opacity="0.05"/><path d="M80 267.9 A178.9 178.9 0 0 0 205 306.2 L205 260 L80 260 Z" fill="#7a3a10" opacity="0.09"/></g></svg>

<!-- top panel -->
<div class="a" style="left:20px;top:0;width:600px;height:11px;background:linear-gradient(#f2f0ec,#eae8e3)"></div>
<div class="a" style="left:20px;top:11px;width:600px;height:1px;background:#e2d6c0"></div>
<!-- ubuntu logo -->
<svg class="a" style="left:23px;top:1px" width="11" height="10" viewBox="0 0 11 10">
<circle cx="5.5" cy="5" r="3" fill="none" stroke="#e48a40" stroke-width="1.5"/>
<circle cx="5.5" cy="5" r="1.6" fill="#fbe8d8"/>
<circle cx="1.8" cy="5" r="1.3" fill="#b43a14"/><circle cx="7.4" cy="1.8" r="1.3" fill="#b43a14"/><circle cx="7.4" cy="8.2" r="1.3" fill="#b43a14"/>
</svg>
<div class="t ui" style="left:36.5px;top:1.5px">Anwendungen</div>
<div class="t ui" style="left:88.5px;top:1.5px">Orte</div>
<div class="t ui" style="left:109px;top:1.5px">System</div>
<!-- launcher icons -->
<svg class="a" style="left:134px;top:0" width="76" height="12" viewBox="0 0 76 12">
 <path d="M6 1 L8 4 L5 6 L9 7" stroke="#b8c040" stroke-width="2" fill="none"/>
 <path d="M3 10 L7 7 L11 9 L13 6" stroke="#283018" stroke-width="1.4" fill="none"/>
 <path d="M4 7 L9 5" stroke="#607030" stroke-width="1.2"/>
 <circle cx="20" cy="5.7" r="5" fill="#f09020"/><circle cx="20" cy="5.7" r="3.6" fill="#e05a18"/>
 <path d="M17 1.5 Q23 0 24.5 4.5 Q22 7.5 18.5 5.5 Z" fill="#5a8ad0"/><path d="M15.5 7 A5 5 0 0 0 24.5 8 Q20 10 15.5 7Z" fill="#f8c030"/>
 <circle cx="32.2" cy="5.7" r="5.1" fill="#2a4e98"/><circle cx="31.5" cy="5" r="4" fill="#3a62b0"/>
 <text x="32.3" y="9.2" font-size="8.5" font-weight="bold" fill="#f0f4ff" text-anchor="middle" font-family="Liberation Sans">?</text>
 <path d="M39 3.5 L42.5 5.8 L39 8.5 Z" fill="#50308a"/><path d="M41 5.8 L39 5.8" stroke="#50308a" stroke-width="1.5"/>
 <ellipse cx="45" cy="6" rx="3" ry="3.8" fill="#c8c488"/><ellipse cx="45.5" cy="6" rx="1.6" ry="2.6" fill="#e0dcb0"/>
 <rect x="50.5" y="2" width="10" height="8.5" fill="#2a3a2a" stroke="#9aa098" stroke-width="0.9"/>
 <path d="M52.5 4.5 L54.5 5.5 L52.5 6.5" stroke="#c0e0b0" stroke-width="0.8" fill="none"/><rect x="53" y="7.5" width="5" height="1" fill="#5a8a50"/>
 <path d="M63.5 11.5 Q63 7 67 6.5 Q71 7 70.5 11.5 Z" fill="#7a9aa0" stroke="#303838" stroke-width="0.7"/>
 <circle cx="67" cy="4" r="2.8" fill="#e8d060" stroke="#6a5a20" stroke-width="0.6"/>
 <path d="M65.5 6.2 L68.5 6.2 L67 8 Z" fill="#203020"/>
</svg>
<!-- tray -->
<svg class="a" style="left:517px;top:0" width="30" height="12" viewBox="0 0 30 12">
 <path d="M2 9.5 Q2 5.5 5.5 5.5 Q9 5.5 9 9.5 Z" fill="#48a840" stroke="#306a28" stroke-width="0.6"/>
 <circle cx="5.5" cy="4" r="2.5" fill="#c8c488" stroke="#6a6a40" stroke-width="0.5"/>
 <path d="M4.3 6 L6.7 6 L5.5 7.5 Z" fill="#1a4a18"/>
 <rect x="11.5" y="2.5" width="7.5" height="7.5" fill="#e4e4e2" stroke="#b4b4b0" stroke-width="0.8"/><rect x="13" y="1" width="3.5" height="2" fill="#c8c8c4"/>
 <rect x="12.5" y="5" width="4.5" height="3" fill="#fafafa"/>
 <path d="M20.5 4.5 L22.5 4.5 L25 2 L25 9.5 L22.5 7 L20.5 7 Z" fill="#505050"/><path d="M26 4 L28 3 M26 7.5 L28 8.5 M26 5.8 L28 5.8" stroke="#606060" stroke-width="0.7"/>
</svg>
<div class="t ui" style="left:547.5px;top:1.5px;font-size:7.15px">Mi. 27. Dez, 17:50</div>
<div class="a" style="left:608px;top:0;width:12px;height:11px;background:#c01818"></div>
<svg class="a" style="left:608px;top:0" width="12" height="11" viewBox="0 0 12 11">
<path d="M4 3 A3.3 3.3 0 1 0 8 3" fill="none" stroke="#fff" stroke-width="1.2"/><line x1="6" y1="1.5" x2="6" y2="5.5" stroke="#fff" stroke-width="1.2"/>
</svg>

<!-- desktop icons -->
<div class="a" style="left:44px;top:24px;width:34px;height:47px;background:#3e3628"></div>
<div class="a" style="left:45px;top:25px;width:32px;height:45px;background:#52744a"></div>
<svg class="a" style="left:45px;top:25px" width="32" height="45" viewBox="0 0 32 45">
 <path d="M2.5 5.5 L29 5.5" stroke="#e8f4e0" stroke-width="0.7" opacity=".9"/>
 <path d="M3 4.2 L5 2.5 M6 4.2 L6 2.8 M8 2.8 L9 4.2 M11 3 L11 4.2 M13 2.6 L14 4.2 M16 3 L17 4.2 M19 3 L19 4.2 M21 2.8 L22.5 4.2 M24 3 L25 4.2 M26.5 3 L27 4.2" stroke="#f0f8e8" stroke-width="0.9" opacity=".85"/>
 <path d="M3 6.8 L18 6.8" stroke="#b8d0a8" stroke-width="0.4" opacity=".7"/>
 <rect x="2" y="8.5" width="27" height="31" fill="#2c3828"/>
 <path d="M5 8.5 L29 8.5 L29 26 Q26 25 24 27 L22 24 Q20 22 18.5 17 Q16 13 13 12 Q9 11 5 8.5 Z" fill="#dde3e8"/>
 <path d="M2 8.5 L6 8.5 Q8 11 12 12.5 Q15 14 17 19 Q19 23 21 25 L23 39.5 L2 39.5 Z" fill="#2a3626"/>
 <path d="M4 14 Q8 12 11 16 Q13 20 12 26 M5 22 Q9 20 10 30 M8 33 Q12 31 15 35" stroke="#46543e" stroke-width="1" fill="none"/><path d="M3 18 L6 17 M7 26 L9 24 M13 22 L15 23" stroke="#6a7868" stroke-width="0.6"/>
 <path d="M20.5 11.5 L20.5 39.5" stroke="#30382a" stroke-width="1.4"/>
 <path d="M14.5 11 Q17.5 9.5 20.5 11.5 Q24 9 28.5 11 M15.5 14.5 Q18 11.5 20.5 11.5 Q23.5 12.5 26.5 15 M17 9 L20.5 11.5 L24 9" stroke="#26302a" stroke-width="1" fill="none"/>
 <rect x="17" y="30" width="12" height="9.5" fill="#34402e"/>
 <path d="M18 32 L27 32 M19 35 L26 35" stroke="#7a8478" stroke-width="0.6"/>
 <rect x="2" y="39.5" width="27" height="4" fill="#5a804c"/>
 <path d="M3 41 L18 41" stroke="#d8ecc8" stroke-width="0.6" opacity=".8"/><path d="M3 42.3 L9 42.3" stroke="#c8e0b8" stroke-width="0.5" opacity=".6"/>
</svg>

<div class="a" style="left:80px;top:24px;width:34px;height:24px;background:#4a3a28"></div>
<div class="a" style="left:81px;top:25px;width:32px;height:23px;background:#fcfcfc"></div>
<svg class="a" style="left:81px;top:25px" width="32" height="23" viewBox="0 0 32 23">
 <path d="M3 4.2 L5 4.2 M6 4.2 L20 4.2" stroke="#202020" stroke-width="1.1"/>
 <path d="M3 6.4 L22 6.4" stroke="#8a8a8a" stroke-width="0.5"/><path d="M3 7.4 L19 7.4" stroke="#a8a8a8" stroke-width="0.5"/>
 <path d="M23.5 2.5 L27 2.5 L29 5 L28.5 8 M26 3 L26 6 L24 6" stroke="#2a2a2a" stroke-width="0.9" fill="none"/>
 <path d="M7 22 Q6 13 12 11.5 Q16 10 20 11.5 Q26 13 25 22 Z" fill="#9a9a9a"/>
 <path d="M8 15 Q12 12 16 13 Q21 12 24 16 M7 19 Q16 14 25 19 M11 12 L10 22 M16 11 L16 22 M21 12 L22 22 M8 21 L24 21" stroke="#1a1a1a" stroke-width="0.8" fill="none"/>
 <path d="M9 17 L12 16 M19 16 L23 18 M13 19 L15 18" stroke="#f0f0f0" stroke-width="0.7"/>
</svg>

<div class="t dl" style="left:45px;top:72.5px">de080</div>
<div class="a" style="left:49px;top:92px;width:3px;height:0.8px;background:#f0d8c0;opacity:.6"></div>
<svg class="a" style="left:40px;top:96px" width="27" height="9" viewBox="0 0 27 9">
 <path d="M1 8 L1 3.5 L4.5 1 L8 3.5 L8 8 Z M2.5 8 L2.5 5 M4.5 8 L4.5 5 M6.5 8 L6.5 5" stroke="#f4d8c0" stroke-width="0.8" fill="none" opacity=".65"/>
 <text x="10" y="7.5" font-size="6" font-weight="bold" letter-spacing="0.6" fill="#f4dcc8" opacity=".65" font-family="Liberation Sans">altlw</text>
</svg>
<div class="t dl" style="left:33px;top:110px">figurenhel</div>
<div class="a" style="left:53px;top:127.5px;width:14px;height:19px;background:#f6f6f6"></div>
<svg class="a" style="left:53px;top:127.5px" width="14" height="19" viewBox="0 0 14 19"><circle cx="2.6" cy="2.8" r="1.5" fill="none" stroke="#484848" stroke-width="0.7"/><path d="M5 1.2999999999999998 L7.2 1.2999999999999998 L5.8 4.4" stroke="#383838" stroke-width="0.8" fill="none"/><rect x="8.5" y="3.5999999999999996" width="0.8" height="0.8" fill="#383838"/><rect x="11.5" y="1.4" width="1.5" height="2.6" fill="#404040"/><circle cx="2.6" cy="7.3" r="1.5" fill="none" stroke="#484848" stroke-width="0.7"/><path d="M5 5.8 L7.2 5.8 L5.8 8.9" stroke="#383838" stroke-width="0.8" fill="none"/><rect x="8.5" y="8.1" width="0.8" height="0.8" fill="#383838"/><rect x="11.5" y="5.9" width="1.5" height="2.6" fill="#404040"/><circle cx="2.6" cy="11.8" r="1.5" fill="none" stroke="#484848" stroke-width="0.7"/><path d="M5 10.3 L7.2 10.3 L5.8 13.4" stroke="#383838" stroke-width="0.8" fill="none"/><rect x="8.5" y="12.600000000000001" width="0.8" height="0.8" fill="#383838"/><rect x="11.5" y="10.4" width="1.5" height="2.6" fill="#404040"/></svg>
<div class="t dl" style="left:56px;top:148.5px">tes</div>
<svg class="a" style="left:52px;top:157px" width="16" height="16" viewBox="0 0 16 16">
<path d="M7.5 13 L7.5 2 Q11 1 14 0.5" stroke="#b8d060" stroke-width="1.6" fill="none"/><ellipse cx="4.5" cy="13.2" rx="3.6" ry="1.9" fill="#b8d060"/>
<ellipse cx="14" cy="12.5" rx="2.4" ry="1.6" fill="#a8c050"/>
</svg>
<div class="t dl" style="left:40px;top:175.5px">frigh.ogg</div>
<div class="a" style="left:53px;top:202px;width:14px;height:19px;background:#f6f6f6"></div>
<svg class="a" style="left:53px;top:202px" width="14" height="19" viewBox="0 0 14 19"><circle cx="2.6" cy="2.8" r="1.5" fill="none" stroke="#484848" stroke-width="0.7"/><rect x="5" y="1.4" width="2.2" height="2.6" fill="#5a646a"/><rect x="8.5" y="3.5999999999999996" width="0.8" height="0.8" fill="#383838"/><rect x="11.5" y="1.4" width="1.5" height="2.6" fill="#404040"/><circle cx="2.6" cy="7.3" r="1.5" fill="none" stroke="#484848" stroke-width="0.7"/><rect x="5" y="5.9" width="2.2" height="2.6" fill="#5a646a"/><rect x="8.5" y="8.1" width="0.8" height="0.8" fill="#383838"/><rect x="11.5" y="5.9" width="1.5" height="2.6" fill="#404040"/><circle cx="2.6" cy="11.9" r="1.5" fill="none" stroke="#484848" stroke-width="0.7"/><rect x="5" y="10.5" width="2.2" height="2.6" fill="#5a646a"/><rect x="8.5" y="12.700000000000001" width="0.8" height="0.8" fill="#383838"/><rect x="11.5" y="10.5" width="1.5" height="2.6" fill="#404040"/><circle cx="2.6" cy="16.5" r="1.5" fill="none" stroke="#484848" stroke-width="0.7"/><rect x="5" y="15.1" width="2.2" height="2.6" fill="#5a646a"/><rect x="8.5" y="17.3" width="0.8" height="0.8" fill="#383838"/><rect x="11.5" y="15.1" width="1.5" height="2.6" fill="#404040"/></svg>
<div class="t dl" style="left:50px;top:223px">asdf</div>

<!-- TERMINAL -->
<div class="a" style="left:66px;top:47.5px;width:386px;height:227.5px;background:#ece9e4;box-shadow:0 0 2px rgba(0,0,0,.3)"></div>
<div class="a" style="left:66px;top:47.5px;width:386px;height:11.5px;background:linear-gradient(#f8f6f3,#e8e4de)"></div>
<div class="a" style="left:69px;top:50.5px;width:7px;height:5.5px;background:#4a4a4a;border:0.8px solid #b0b0b0"></div>
<div class="t" style="left:215px;top:47.5px;font-size:7.5px;font-weight:bold;color:#555">krt@krt-testing: ~</div>
<svg class="a" style="left:410px;top:47px" width="42" height="12" viewBox="0 0 42 12">
 <defs><linearGradient id="tbg" x1="0" y1="0" x2="0" y2="1"><stop offset="0" stop-color="#fbfaf8"/><stop offset="1" stop-color="#e6e2dc"/></linearGradient></defs>
 <rect x="2.5" y="1.5" width="11" height="9" rx="1.2" fill="url(#tbg)" stroke="#c4c0b8" stroke-width="0.8"/>
 <rect x="15.8" y="1.5" width="11" height="9" rx="1.2" fill="url(#tbg)" stroke="#c4c0b8" stroke-width="0.8"/>
 <rect x="29" y="1.5" width="11" height="9" rx="1.2" fill="url(#tbg)" stroke="#c4c0b8" stroke-width="0.8"/>
 <path d="M6.5 7.6 L10 7.6" stroke="#303030" stroke-width="1.1"/>
 <rect x="19.3" y="4.3" width="4.2" height="3.2" fill="none" stroke="#303030" stroke-width="0.9"/><path d="M19.3 4.6 L23.5 4.6" stroke="#303030" stroke-width="0.9"/>
 <path d="M32.7 4.3 L36.5 8 M36.5 4.3 L32.7 8" stroke="#303030" stroke-width="1.1"/>
</svg>
<div class="a" style="left:68px;top:59px;width:376px;height:214px;background:#000"></div>
<div class="a" style="left:444px;top:59px;width:7px;height:214px;background:#e4e0da;border-left:0.8px solid #d4d0c8;box-sizing:border-box"></div>
<div class="a" style="left:444.8px;top:59.5px;width:6px;height:5.5px;background:#f6f4f0"></div>
<div class="a" style="left:450px;top:59px;width:0.8px;height:214px;background:#bcb8b0"></div>
<div class="a" style="left:452px;top:48px;width:0.8px;height:227px;background:rgba(90,70,50,.35)"></div>
<svg class="a" style="left:444px;top:59px" width="8" height="7" viewBox="0 0 8 7"><path d="M2.5 4 L4 2.5 L5.5 4" stroke="#707070" stroke-width="0.7" fill="none"/></svg>
<div class="t mono" style="left:68px;top:59px;font-size:7.83px;line-height:9px;color:#d0d0d0">krt@krt-testing:~$ sudo gedit /etc/X11/xorg.conf
Password:</div>
<div class="a" style="left:68px;top:77.5px;width:3.2px;height:7.8px;border:0.9px solid #b8b8b8"></div>

<!-- GEDIT -->
<div class="a" style="left:197px;top:176px;width:412px;height:247px;background:#efebe7;border-radius:3px 3px 0 0;box-shadow:0 0 2px rgba(0,0,0,.4)"></div>
<div class="a" style="left:197px;top:176px;width:412px;height:11px;border-radius:3px 3px 0 0;background:linear-gradient(#e8b07a 0%,#dc9a58 40%,#d08432 60%,#cc8030 100%)"></div>
<div class="a" style="left:197px;top:187px;width:412px;height:1px;background:#b87838"></div>
<svg class="a" style="left:200px;top:179px" width="9" height="8" viewBox="0 0 9 8"><path d="M1 1.2 L6 1.2 L6 7 L1 7 Z" fill="#fbf6e0"/><path d="M1 1.2 L6.5 1.2" stroke="#e8d890" stroke-width="0.8"/><path d="M3.2 6.5 L7.5 2" stroke="#505a60" stroke-width="1.3"/><path d="M6.5 6.5 L7 4" stroke="#f0e8d0" stroke-width="0.8"/></svg>
<div class="t" style="left:342.5px;top:177.5px;font-size:7.35px;font-weight:bold;color:#fffaf4;text-shadow:0 0 1.5px #6a3a10,0 0 1px #6a3a10">*xorg.conf (/etc/X11) - gedit</div>
<svg class="a" style="left:567px;top:176px" width="42" height="12" viewBox="0 0 42 12">
 <defs><linearGradient id="gbg" x1="0" y1="0" x2="0" y2="1"><stop offset="0" stop-color="#e6ac74"/><stop offset="1" stop-color="#d48a40"/></linearGradient></defs>
 <rect x="2.5" y="1.3" width="11" height="9.2" rx="1.2" fill="url(#gbg)" stroke="#bf7a38" stroke-width="0.8"/>
 <rect x="15.8" y="1.3" width="11" height="9.2" rx="1.2" fill="url(#gbg)" stroke="#bf7a38" stroke-width="0.8"/>
 <rect x="29" y="1.3" width="11" height="9.2" rx="1.2" fill="url(#gbg)" stroke="#bf7a38" stroke-width="0.8"/>
 <path d="M6 7.5 L9.8 7.5" stroke="#fbecd8" stroke-width="1.1"/>
 <rect x="18.8" y="3.8" width="4.6" height="4" fill="#c07838" stroke="#fbecd8" stroke-width="0.9"/>
 <path d="M32.8 4 L36.3 7.8 M36.3 4 L32.8 7.8" stroke="#fbecd8" stroke-width="1.1"/>
</svg>

<!-- menubar -->
<div class="t ui" style="left:202px;top:190px;font-size:7.5px;color:#444"><u>D</u>atei</div>
<div class="t ui" style="left:227px;top:190px;font-size:7.5px;color:#444"><u>B</u>earbeiten</div>
<div class="t ui" style="left:270px;top:190px;font-size:7.5px;color:#444"><u>A</u>nsicht</div>
<div class="t ui" style="left:300px;top:190px;font-size:7.5px;color:#444"><u>S</u>uchen</div>
<div class="t ui" style="left:330.5px;top:190px;font-size:7.5px;color:#444"><u>W</u>erkzeuge</div>
<div class="t ui" style="left:374px;top:190px;font-size:7.5px;color:#444">D<u>o</u>kumente</div>
<div class="t ui" style="left:418px;top:190px;font-size:7.5px;color:#444"><u>H</u>ilfe</div>
<div class="a" style="left:197px;top:200px;width:412px;height:1px;background:#e0dcd6"></div>

<!-- toolbar -->
<svg class="a" style="left:197px;top:201px" width="412" height="26" viewBox="0 0 412 26">
 <!-- Neu -->
 <path d="M6 3 L10.5 3 L12 4.5 L12 12 L6 12 Z" fill="#fcfcfc" stroke="#9a9a9a" stroke-width="0.8"/>
 <circle cx="13" cy="10" r="3.4" fill="#ec7420"/><circle cx="13" cy="10" r="1.5" fill="#ffe0b8"/>
 <!-- Offnen -->
 <path d="M29.5 3.5 L36.5 3.5 L38 5 L38 10 L29.5 10 Z" fill="#fafafa" stroke="#9a9a9a" stroke-width="0.7"/>
 <path d="M31 5.5 L36 5.5 M31 7 L36 7" stroke="#c8c8c8" stroke-width="0.5"/>
 <path d="M28 8 L33 8 L34 9 L40 9 L39 12.5 L28.5 12.5 Z" fill="#ee9a3e" stroke="#c87828" stroke-width="0.5"/>
 <path d="M52 12 L56 12 L54 14 Z" fill="#202020"/>
 <!-- Speichern -->
 <rect x="74.3" y="3.5" width="10" height="10" rx="0.8" fill="#e8e8ec" stroke="#9a9aa4" stroke-width="0.8"/>
 <rect x="76.3" y="4" width="6" height="4" fill="#c8c8d0"/>
 <path d="M77 5 L81.5 5 M77 6.5 L81.5 6.5" stroke="#f4f4f8" stroke-width="0.5"/>
 <rect x="76" y="9.5" width="6.6" height="3.5" fill="#fafafa"/>
 <line x1="101.5" y1="3" x2="101.5" y2="22" stroke="#d0ccc4" stroke-width="1"/>
 <!-- Drucken -->
 <path d="M120.5 3.5 L125 3.5 L127 5.5 L127 8 L120.5 8 Z" fill="#f8f8f8" stroke="#7a7a7a" stroke-width="0.6"/>
 <path d="M119 8 L129 8 L129.5 12 L118.5 12 Z" fill="#2e2e2e"/>
 <rect x="118.5" y="12" width="11" height="1.6" fill="#8a8a8a"/>
 <rect x="120.5" y="9" width="7" height="0.8" fill="#5a5a5a"/>
 <line x1="146.5" y1="3" x2="146.5" y2="22" stroke="#d0ccc4" stroke-width="1"/>
 <!-- undo -->
 <path d="M175 12 Q177 6 171 6.5 L169 6.5" stroke="#e8802a" stroke-width="2.2" fill="none"/>
 <path d="M165.5 6.5 L170 3 L170 10 Z" fill="#e8802a"/>
 <!-- redo -->
 <path d="M214 12 Q212 6 218 6.5 L220 6.5" stroke="#c8c4c0" stroke-width="2.2" fill="none"/>
 <path d="M223.5 6.5 L219 3 L219 10 Z" fill="#c8c4c0"/>
 <line x1="242.5" y1="3" x2="242.5" y2="22" stroke="#d0ccc4" stroke-width="1"/>
 <!-- cut -->
 <path d="M268 3 L273 10 M273 3 L268 10" stroke="#b8b4b0" stroke-width="1.2"/>
 <circle cx="268.5" cy="11.5" r="1.8" fill="#b0aca8"/><circle cx="272.5" cy="11.5" r="1.8" fill="#b0aca8"/>
 <!-- copy -->
 <rect x="311" y="4" width="8" height="9.5" fill="#f2f0ec" stroke="#c8c4c0" stroke-width="0.8"/>
 <rect x="313" y="6" width="6" height="6" fill="none" stroke="#d0ccc8" stroke-width="0.6"/>
 <!-- paste -->
 <rect x="346" y="4.5" width="8" height="9.5" rx="1" fill="#f0ece0" stroke="#9a7a50" stroke-width="1"/>
 <rect x="348" y="3.2" width="4" height="2.2" fill="#8a6a40"/>
 <line x1="348" y1="8" x2="352" y2="8" stroke="#a0a0a0" stroke-width="0.5"/><line x1="348" y1="10" x2="352" y2="10" stroke="#a0a0a0" stroke-width="0.5"/>
 <line x1="369.5" y1="3" x2="369.5" y2="22" stroke="#d0ccc4" stroke-width="1"/>
 <path d="M402 12.5 L405.5 12.5 L403.75 14.5 Z" fill="#202020"/>
</svg>
<div class="t ui" style="left:202px;top:214.6px;color:#3a3a3a">Neu</div>
<div class="t ui" style="left:221px;top:214.6px;color:#3a3a3a">Öffnen</div>
<div class="t ui" style="left:260px;top:214.6px;color:#3a3a3a">Speichern</div>
<div class="t ui" style="left:305px;top:214.6px;color:#3a3a3a">Drucken...</div>
<div class="t ui" style="left:349px;top:214.6px;color:#3a3a3a">Rückgängig</div>
<div class="t ui" style="left:393px;top:214.6px;color:#b8b4ae">Wiederholen</div>
<div class="t ui" style="left:446px;top:214.6px;color:#b8b4ae">Ausschneiden</div>
<div class="t ui" style="left:497px;top:214.6px;color:#b8b4ae">Kopieren</div>
<div class="t ui" style="left:532px;top:214.6px;color:#3a3a3a">Einfügen</div>
<div class="a" style="left:197px;top:226px;width:412px;height:1px;background:#dcd8d0"></div>

<!-- tab -->
<div class="a" style="left:199px;top:227px;width:57px;height:15px;background:#f0ede9;border:1px solid #c8c0b4;border-top-color:#d4a878;border-bottom:none;border-radius:2px 2px 0 0"></div>
<div class="a" style="left:201px;top:230.5px;width:5.5px;height:6px;background:#f4f4f6;border:0.8px solid #a8a8a8"></div>
<div class="t ui" style="left:210px;top:230px;color:#3a3a3a">*xorg.conf</div>
<svg class="a" style="left:248px;top:231.5px" width="7" height="7" viewBox="0 0 7 7"><rect x="1" y="1" width="5" height="5" fill="#f6d4ac" stroke="#e38a3a" stroke-width="0.7"/><path d="M2.3 2.3 L4.7 4.7 M4.7 2.3 L2.3 4.7" stroke="#d85a10" stroke-width="0.8"/></svg>

<!-- text area -->
<div class="a" style="left:199px;top:241px;width:410px;height:170px;background:#d8d4cc"></div>
<div class="a" style="left:200px;top:242px;width:397px;height:168px;background:#fff;overflow:hidden">
<div class="t mono" style="left:0.5px;top:-2px;font-size:7.8px;line-height:8.9px;color:#4a4a4a">                                                      # for USB
  Option        "Type"          "cursor"
  Option        "ForceDevice"   "ISDV4"               # Tablet PC ONLY
EndSection

Section "Device"
        Identifier      "NVIDIA Corporation NVIDIA Default Card"
        # Driver        "nv"
        Driver          "nvidia"
        BusID           "PCI:1:0:0"
EndSection

Section "Monitor"
        Identifier      "MD7212AZ"
        Option          "DPMS"
EndSection

Section "Screen"
        Identifier      "Default Screen"</div>
</div>
<div class="a" style="left:333px;top:302px;width:0.8px;height:7.5px;background:#404040"></div>
<!-- scrollbar -->
<div class="a" style="left:597px;top:242px;width:12px;height:168px;background:#ebe7e1"></div>
<div class="a" style="left:599.5px;top:242px;width:7.5px;height:168px;background:#c9c3ba"></div>
<div class="a" style="left:600px;top:243px;width:6.5px;height:6px;background:#f6f4f0;border:0.5px solid #bdb6ac;box-sizing:border-box"></div>
<div class="a" style="left:601.8px;top:245.2px;width:3px;height:1.8px;background:#202020;border-radius:1px 1px 0 0"></div>
<div class="a" style="left:600px;top:404px;width:6.5px;height:6px;background:#f6f4f0;border:0.5px solid #bdb6ac;box-sizing:border-box"></div>
<div class="a" style="left:601.8px;top:406.2px;width:3px;height:1.8px;background:#202020;border-radius:0 0 1px 1px"></div>
<div class="a" style="left:600px;top:337px;width:6.5px;height:17px;background:#f4f2ee;border:0.5px solid #c0bab0;box-sizing:border-box"></div>
<div class="a" style="left:601.5px;top:343px;width:3.5px;height:4.5px;background:repeating-linear-gradient(#d8d4ce 0 0.6px,transparent 0.6px 1.5px)"></div>

<!-- ellipse -->
<svg class="a" style="left:0;top:0" width="640" height="480"><ellipse cx="292.3" cy="311.3" rx="71.5" ry="18.3" fill="none" stroke="#c02a2a" stroke-width="1.5" opacity=".9"/></svg>

<!-- status bar -->
<div class="t ui" style="left:498px;top:411.8px;color:#5a5a5a;font-size:7.2px">Z. 95, Sp. 29</div>
<div class="t ui" style="left:574px;top:411.8px;color:#5a5a5a;font-size:7.2px">EIN</div>

<!-- bottom panel -->
<div class="a" style="left:20px;top:467px;width:600px;height:13px;background:#ebe9e4;border-top:1px solid #fbf8f2;box-sizing:border-box"></div>
<svg class="a" style="left:20px;top:468px" width="12" height="12" viewBox="0 0 12 12"><rect x="0.5" y="0.5" width="10" height="11" fill="#f0eee8" stroke="#c8c4bc" stroke-width="0.6"/><rect x="2.5" y="3" width="6.5" height="5.5" fill="#8a5a38"/><path d="M2 2.5 L4 4.5 M9.5 2.5 L7.5 4.5 M2 9 L4 7 M9.5 9 L7.5 7" stroke="#303030" stroke-width="1"/></svg>
<div class="a" style="left:36px;top:469px;width:115px;height:11px;background:linear-gradient(#f6f4f0,#e6e2dc);border:1px solid #c4c0b8;box-sizing:border-box;border-radius:1px"></div>
<div class="a" style="left:40px;top:471px;width:6.5px;height:5.5px;background:#484848;border:0.6px solid #909090;border-radius:1px"></div>
<div class="t ui" style="left:50px;top:469.5px;font-size:7.3px;color:#4a4a4a">krt@krt-testing: ~</div>
<div class="a" style="left:154px;top:469px;width:115px;height:11px;background:linear-gradient(#e2ded8,#d4d0c8);border:1px solid #b0aca4;box-sizing:border-box;border-radius:1px"></div>
<svg class="a" style="left:157px;top:470px" width="8" height="8" viewBox="0 0 8 8"><rect x="0.5" y="0.5" width="6.5" height="7" fill="#f8f4e0" stroke="#808070" stroke-width="0.6"/><path d="M2 6 L6.5 1.5" stroke="#c09020" stroke-width="1.2"/></svg>
<div class="t ui" style="left:167px;top:469.5px;font-size:7.3px;color:#4a4a4a">*xorg.conf (/etc/X11) - gedit</div>
<svg class="a" style="left:562px;top:468px" width="58" height="12" viewBox="0 0 58 12">
 <rect x="1" y="2" width="10" height="9" fill="#e8e8e4" stroke="#303030" stroke-width="0.8"/><rect x="2.5" y="3.5" width="7" height="6" fill="#505050"/><rect x="3" y="4" width="4" height="2" fill="#7a7a7a"/>
 <rect x="12" y="2" width="10" height="9" fill="#f4f4f2" stroke="#707070" stroke-width="0.6"/><circle cx="17" cy="6.5" r="3.6" fill="#1a3a90"/><circle cx="16" cy="5.3" r="1.4" fill="#6a9ae0"/>
 <rect x="23" y="2" width="10" height="9" fill="#f4f4f2" stroke="#606060" stroke-width="0.6"/><path d="M25.5 3.5 L29.5 3.5 L31 5 L31 10 L25.5 10 Z" fill="#fff" stroke="#8a8a8a" stroke-width="0.6"/>
 <rect x="34" y="2" width="11" height="9" fill="#a87048" stroke="#7a5030" stroke-width="0.6"/><rect x="35.5" y="3" width="5" height="4" fill="#d89858" stroke="#f8e8d8" stroke-width="0.5"/><rect x="38.5" y="6" width="5.5" height="4" fill="#d08850" stroke="#f8e8d8" stroke-width="0.5"/>
 <path d="M48 4.5 L56 4.5 L55.5 11.5 L48.5 11.5 Z" fill="#e89030"/><rect x="47.5" y="2.5" width="9" height="1.8" fill="#e8e4dc" stroke="#a0a098" stroke-width="0.4"/><rect x="50.5" y="6.5" width="3" height="2.5" fill="#fff" opacity=".75"/>
</svg>

<!-- side bars -->
<div class="a" style="left:0;top:0;width:20px;height:480px;background:#2a2a2a"></div>
<div class="a" style="left:620px;top:0;width:20px;height:480px;background:#2a2a2a"></div>
<div class="a" style="left:620px;top:0;width:20px;height:480px;background:#2a2a2a"></div>
</div></body></html>
